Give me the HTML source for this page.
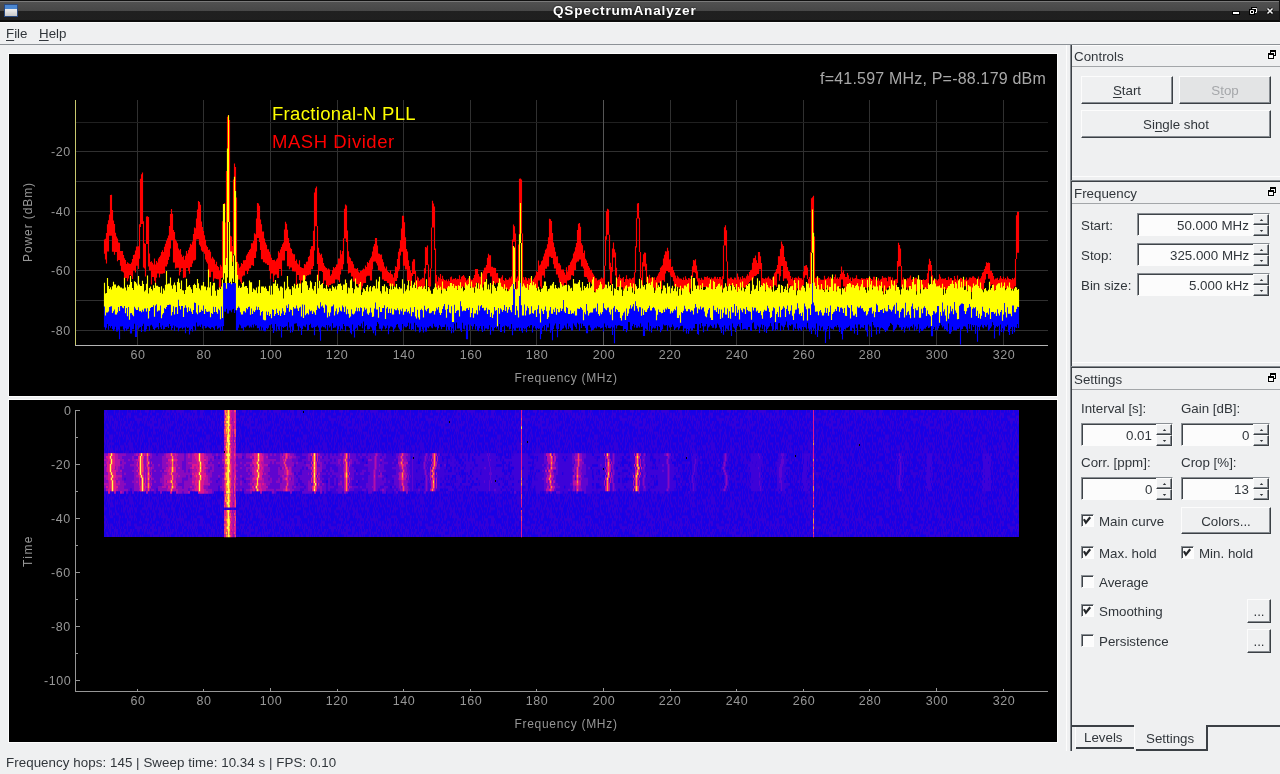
<!DOCTYPE html>
<html><head><meta charset="utf-8">
<style>
*{margin:0;padding:0;box-sizing:border-box}
html,body{width:1280px;height:774px;overflow:hidden;background:#eff0f1;font-family:"Liberation Sans",sans-serif;font-size:13.33px;color:#31363b}
.a{position:absolute}
.t{position:absolute;white-space:nowrap;line-height:1}
.ln{position:absolute}
.btn{position:absolute;background:#eff0f1;border-top:1px solid #fcfcfc;border-left:1px solid #fcfcfc;border-right:1px solid #3b4045;border-bottom:1px solid #3b4045;box-shadow:inset -1px -1px 0 #868b90;text-align:center;line-height:27px}
.u{text-decoration:underline;text-underline-offset:2px;text-decoration-thickness:1.3px}
.spin{position:absolute;background:#fcfcfc;border-top:1px solid #8a8f94;border-left:1px solid #8a8f94;border-right:1px solid #fcfcfc;border-bottom:1px solid #fcfcfc;box-shadow:inset 1px 1px 0 #3f4449}
.sv{position:absolute;right:20px;top:2px;text-align:right;line-height:1}
.arr{position:absolute;right:0;width:16px;background:#eff0f1;border-top:1px solid #fcfcfc;border-left:1px solid #fcfcfc;border-right:1px solid #3b4045;border-bottom:1px solid #3b4045;box-shadow:inset -1px -1px 0 #868b90}
.cb{position:absolute;width:13px;height:13px;background:#fcfcfc;border-top:1px solid #8a8f94;border-left:1px solid #8a8f94;border-right:1px solid #fdfdfd;border-bottom:1px solid #fdfdfd;box-shadow:inset 1px 1px 0 #3f4449}
.cb svg{left:0!important;top:0!important}
.ax{position:absolute;color:#969696;font-size:12px;line-height:1;white-space:nowrap}
.t,.ax,.btn,.sv{will-change:transform}
</style></head><body>
<!-- title bar -->
<div class="a" style="left:0;top:0;width:1280px;height:22px;background:linear-gradient(#101010 0,#101010 1px,#7a7a7a 1px,#7a7a7a 1.6px,#515151 2.2px,#474747 11px,#202020 11px,#1f1f1f 20.5px,#0c0c0c 20.5px,#0c0c0c 22px)"></div>
<div class="a" style="left:1279px;top:1px;width:1px;height:20px;background:#151515"></div>
<div class="a" style="left:4px;top:4px;width:14px;height:13px;border:1px solid #2a4a80;background:linear-gradient(#4a86d0 0,#4a86d0 4px,#f0f0f0 4px,#c8c8c8 100%)"></div>
<div class="t" style="left:552.5px;top:4.3px;color:#fff;font-weight:bold;font-size:13.6px;letter-spacing:0.8px;text-shadow:0 0 2px #000">QSpectrumAnalyzer</div>
<svg class="a" style="left:1230px;top:5px" width="48" height="12" viewBox="1230 5 48 12">
<rect x="1232" y="11" width="8" height="4" fill="#000"/><rect x="1233" y="12" width="6" height="2" fill="#fff"/>
<path d="M1251 7h6v6h-6z" fill="#000"/><path d="M1252.5 8.5h4v4h-4z" fill="none" stroke="#fff" stroke-width="1"/>
<path d="M1249 9h6v6h-6z" fill="#000"/><path d="M1250.5 10.5h3v3h-3z" fill="#000" stroke="#fff" stroke-width="1"/>
<path d="M1267.5 8.5L1272.5 13.5M1272.5 8.5L1267.5 13.5" stroke="#000" stroke-width="3"/>
<path d="M1267.5 8.5L1272.5 13.5M1272.5 8.5L1267.5 13.5" stroke="#fff" stroke-width="1.5"/>
<rect x="1269.5" y="10.5" width="1" height="1" fill="#bbb"/>
</svg>
<!-- menu -->
<div class="a" style="left:0;top:22px;width:1280px;height:1px;background:#fafafa"></div>
<div class="t" style="left:6px;top:27px"><span class="u">F</span>ile</div>
<div class="t" style="left:39px;top:27px"><span class="u">H</span>elp</div>
<div class="a" style="left:0;top:44px;width:1280px;height:1px;background:#8c9196"></div>
<!-- plot frames -->
<div class="a" style="left:8px;top:53px;width:1050px;height:344px;background:#000;border:1px solid #fcfcfc"></div>
<div class="a" style="left:8px;top:399px;width:1050px;height:344px;background:#000;border:1px solid #fcfcfc"></div>
<svg class="a" style="left:0;top:0" width="1280" height="774" viewBox="0 0 1280 774">
<path d="M76 151.5H1048M76 181.5H1048M76 211.5H1048M76 240.5H1048M76 270.5H1048M76 300.5H1048M76 330.5H1048M137.5 100V345M203.5 100V345M270.5 100V345M337.5 100V345M403.5 100V345M470.5 100V345M536.5 100V345M670.5 100V345M736.5 100V345M803.5 100V345M869.5 100V345M936.5 100V345M1003.5 100V345" stroke="#303030" stroke-width="1" fill="none"/>
<path d="M76 122.5H1048" stroke="#202020" stroke-width="1"/>
<path d="M603.5 100V345" stroke="#555555" stroke-width="1"/>
<path d="M104.5 239.6V253.7M105.5 238.7V259.6M106.5 233.0V263.4M107.5 224.2V251.4M108.5 220.3V251.4M109.5 214.5V235.7M110.5 194.9V235.7M111.5 194.7V235.7M112.5 209.9V251.8M113.5 220.4V251.8M114.5 223.9V254.8M115.5 232.7V251.9M116.5 236.5V251.9M117.5 238.4V261.2M118.5 242.5V260.1M119.5 242.8V260.1M120.5 251.1V265.8M121.5 251.0V271.2M122.5 251.0V271.5M123.5 254.9V272.4M124.5 258.3V283.3M125.5 260.0V278.0M126.5 263.9V278.0M127.5 262.3V281.3M128.5 263.3V278.6M129.5 263.7V275.3M130.5 264.1V275.3M131.5 262.5V276.1M132.5 259.0V278.9M133.5 255.0V270.6M134.5 254.5V270.6M135.5 250.5V272.5M136.5 246.4V265.8M137.5 246.4V265.8M138.5 246.3V268.9M139.5 224.3V258.8M140.5 178.8V227.1M141.5 174.2V224.0M142.5 172.4V224.0M143.5 221.2V267.5M144.5 243.3V268.4M145.5 243.9V276.6M146.5 216.4V243.9M147.5 216.3V243.9M148.5 216.9V266.5M149.5 253.5V270.5M150.5 262.0V270.5M151.5 261.2V284.5M152.5 262.7V276.9M153.5 264.6V276.9M154.5 258.6V280.7M155.5 264.4V283.9M156.5 260.9V277.8M157.5 262.5V273.4M158.5 258.6V273.4M159.5 256.9V277.6M160.5 255.4V273.7M161.5 252.0V273.7M162.5 250.3V273.7M163.5 252.0V273.3M164.5 246.8V273.3M165.5 243.8V266.6M166.5 240.7V266.6M167.5 238.3V264.3M168.5 235.5V260.0M169.5 226.0V256.7M170.5 214.1V248.6M171.5 209.0V239.9M172.5 213.8V239.9M173.5 230.0V262.4M174.5 232.0V262.4M175.5 239.4V268.5M176.5 241.3V267.8M177.5 243.2V267.8M178.5 248.6V267.8M179.5 250.2V275.6M180.5 249.1V271.9M181.5 254.4V268.3M182.5 257.0V268.3M183.5 255.8V278.0M184.5 259.7V277.6M185.5 255.7V277.6M186.5 251.1V267.9M187.5 253.4V267.9M188.5 250.0V271.1M189.5 247.4V273.7M190.5 243.8V267.1M191.5 244.7V267.1M192.5 241.6V263.4M193.5 233.9V260.4M194.5 227.5V260.4M195.5 228.2V259.8M196.5 218.6V239.4M197.5 209.5V239.2M198.5 201.0V239.2M199.5 202.1V244.7M200.5 204.8V246.4M201.5 221.4V250.4M202.5 227.0V251.7M203.5 231.1V251.7M204.5 235.2V253.7M205.5 239.8V259.6M206.5 245.6V261.7M207.5 247.0V263.6M208.5 250.1V271.3M209.5 249.4V277.2M210.5 251.8V277.2M211.5 258.4V271.8M212.5 256.7V271.8M213.5 258.4V281.4M214.5 259.7V278.6M215.5 264.2V278.6M216.5 261.8V278.9M217.5 266.0V279.3M218.5 267.1V279.3M219.5 270.4V287.7M220.5 264.8V287.4M221.5 266.6V277.9M222.5 221.3V277.5M223.5 204.7V222.4M224.5 203.0V222.4M225.5 222.4V265.9M226.5 171.1V259.2M227.5 116.8V171.1M228.5 115.1V171.1M229.5 119.9V244.5M230.5 235.8V253.0M231.5 236.6V272.3M232.5 246.0V261.8M233.5 179.6V253.9M234.5 163.4V197.6M235.5 167.1V197.6M236.5 197.6V264.7M237.5 261.8V277.4M238.5 263.8V279.5M239.5 267.8V279.5M240.5 266.4V281.8M241.5 263.1V283.8M242.5 264.0V276.6M243.5 260.2V275.4M244.5 260.3V275.4M245.5 259.9V270.8M246.5 255.4V270.8M247.5 253.7V274.0M248.5 251.9V271.1M249.5 250.1V268.4M250.5 248.8V268.2M251.5 243.3V265.3M252.5 243.3V265.3M253.5 241.1V266.0M254.5 233.2V258.0M255.5 234.2V258.0M256.5 218.6V251.6M257.5 203.0V238.0M258.5 203.5V238.0M259.5 205.8V242.1M260.5 219.6V249.9M261.5 224.3V259.3M262.5 231.5V259.3M263.5 231.5V262.2M264.5 238.5V262.2M265.5 242.4V263.6M266.5 244.7V263.6M267.5 249.3V264.9M268.5 249.2V264.9M269.5 251.8V271.0M270.5 254.4V278.7M271.5 257.7V273.4M272.5 260.1V273.4M273.5 260.1V282.1M274.5 259.7V275.5M275.5 261.3V274.6M276.5 259.6V274.6M277.5 258.2V278.1M278.5 251.3V278.1M279.5 252.7V269.0M280.5 249.4V269.0M281.5 247.0V275.7M282.5 244.3V260.4M283.5 242.6V260.4M284.5 229.4V260.4M285.5 221.7V251.1M286.5 223.8V251.1M287.5 229.8V266.2M288.5 237.9V266.2M289.5 242.9V269.2M290.5 247.7V267.6M291.5 249.1V267.6M292.5 253.2V271.3M293.5 254.3V271.3M294.5 254.3V271.5M295.5 260.9V271.5M296.5 259.6V287.1M297.5 263.4V275.0M298.5 264.4V275.0M299.5 260.3V280.0M300.5 267.0V288.8M301.5 267.4V280.4M302.5 267.9V280.4M303.5 268.2V281.7M304.5 263.9V279.6M305.5 264.4V279.6M306.5 261.8V276.1M307.5 261.6V275.3M308.5 257.0V275.3M309.5 255.7V274.4M310.5 249.3V274.4M311.5 246.3V269.2M312.5 246.1V269.2M313.5 230.7V266.1M314.5 192.4V250.6M315.5 188.3V226.2M316.5 186.5V226.2M317.5 225.9V264.0M318.5 247.8V280.7M319.5 252.7V271.0M320.5 254.7V271.0M321.5 253.7V271.0M322.5 257.7V272.0M323.5 262.9V283.9M324.5 265.7V280.4M325.5 267.3V280.4M326.5 267.9V285.5M327.5 269.5V285.5M328.5 268.5V286.9M329.5 269.4V285.1M330.5 275.7V285.1M331.5 274.3V283.7M332.5 270.3V283.7M333.5 266.9V283.2M334.5 268.3V283.2M335.5 267.0V279.4M336.5 264.5V279.4M337.5 264.3V279.4M338.5 258.5V280.3M339.5 258.5V282.3M340.5 250.2V274.5M341.5 254.3V269.6M342.5 251.0V269.6M343.5 238.3V264.2M344.5 208.8V238.5M345.5 204.4V238.5M346.5 205.5V241.9M347.5 230.5V263.6M348.5 251.3V273.5M349.5 256.7V272.8M350.5 258.3V272.8M351.5 261.1V276.4M352.5 261.5V276.4M353.5 264.2V281.6M354.5 268.2V281.6M355.5 268.4V281.6M356.5 269.1V283.9M357.5 268.0V283.9M358.5 271.5V286.2M359.5 272.8V287.7M360.5 271.1V287.7M361.5 271.1V289.5M362.5 269.8V286.3M363.5 268.5V283.3M364.5 269.2V283.1M365.5 265.6V283.1M366.5 267.0V276.4M367.5 261.9V275.8M368.5 263.0V275.8M369.5 260.3V275.8M370.5 258.3V280.5M371.5 256.4V280.5M372.5 251.5V269.5M373.5 246.5V261.8M374.5 244.0V261.6M375.5 238.0V261.6M376.5 238.0V263.2M377.5 245.4V265.6M378.5 253.6V270.2M379.5 253.7V270.2M380.5 254.8V271.6M381.5 254.5V271.6M382.5 259.2V279.6M383.5 262.3V279.6M384.5 266.5V281.1M385.5 268.4V281.1M386.5 266.4V281.1M387.5 270.7V283.0M388.5 272.1V283.0M389.5 273.0V285.9M390.5 270.6V285.9M391.5 274.0V286.3M392.5 274.5V285.8M393.5 277.6V285.8M394.5 272.9V286.5M395.5 266.2V281.1M396.5 267.0V281.1M397.5 259.1V277.9M398.5 251.8V271.2M399.5 248.4V269.6M400.5 240.2V255.6M401.5 228.5V251.8M402.5 215.7V251.8M403.5 215.7V265.7M404.5 222.3V265.7M405.5 237.3V269.4M406.5 249.1V269.4M407.5 251.5V280.9M408.5 260.3V280.9M409.5 266.0V281.0M410.5 270.6V289.8M411.5 273.0V284.9M412.5 261.6V276.0M413.5 259.3V274.0M414.5 259.3V274.0M415.5 270.9V284.9M416.5 280.5V293.2M417.5 276.6V289.9M418.5 277.7V289.9M419.5 280.7V288.8M420.5 279.6V288.8M421.5 279.2V288.8M422.5 277.8V288.8M423.5 278.3V290.0M424.5 268.3V287.7M425.5 247.1V273.5M426.5 247.6V264.9M427.5 245.4V264.9M428.5 264.5V286.3M429.5 277.2V291.9M430.5 268.6V286.5M431.5 227.4V268.6M432.5 200.8V227.4M433.5 203.6V227.4M434.5 206.5V249.9M435.5 248.4V285.5M436.5 274.9V288.5M437.5 281.5V288.5M438.5 276.8V289.2M439.5 278.1V288.7M440.5 273.9V288.7M441.5 279.1V290.0M442.5 275.8V292.5M443.5 278.8V289.3M444.5 280.0V289.3M445.5 280.5V290.3M446.5 279.4V288.4M447.5 281.2V288.0M448.5 279.2V288.0M449.5 281.0V288.0M450.5 277.2V288.7M451.5 276.6V289.6M452.5 279.4V291.7M453.5 278.7V291.3M454.5 278.9V291.3M455.5 277.9V291.3M456.5 279.5V296.5M457.5 278.8V289.4M458.5 278.9V288.5M459.5 275.3V288.5M460.5 279.3V288.8M461.5 276.7V287.5M462.5 275.9V286.6M463.5 274.9V286.6M464.5 276.6V288.1M465.5 278.0V288.1M466.5 280.6V288.9M467.5 279.5V289.2M468.5 278.3V289.2M469.5 279.7V288.6M470.5 278.5V286.6M471.5 279.7V286.6M472.5 279.7V289.7M473.5 278.0V289.5M474.5 274.9V287.8M475.5 269.1V285.4M476.5 269.1V282.7M477.5 268.9V282.7M478.5 274.0V285.2M479.5 276.6V290.2M480.5 276.7V288.3M481.5 272.5V288.3M482.5 273.4V289.0M483.5 270.8V284.5M484.5 267.8V284.5M485.5 267.4V279.6M486.5 265.1V279.6M487.5 257.7V273.6M488.5 253.7V273.0M489.5 255.3V273.0M490.5 255.3V276.5M491.5 266.7V276.5M492.5 266.7V291.0M493.5 267.7V282.9M494.5 267.7V282.9M495.5 268.1V284.5M496.5 273.3V282.8M497.5 273.0V282.8M498.5 277.8V289.7M499.5 278.6V287.0M500.5 278.5V287.0M501.5 277.3V291.3M502.5 275.3V289.6M503.5 280.1V289.6M504.5 280.7V290.3M505.5 277.9V289.1M506.5 279.5V289.1M507.5 279.9V289.1M508.5 279.5V292.0M509.5 277.4V289.7M510.5 278.5V289.7M511.5 276.5V289.5M512.5 239.4V289.5M513.5 224.6V241.7M514.5 226.2V241.7M515.5 233.5V281.9M516.5 278.5V292.7M517.5 276.4V292.7M518.5 244.5V286.8M519.5 178.7V244.5M520.5 178.5V233.4M521.5 179.4V233.4M522.5 233.4V287.7M523.5 277.2V287.9M524.5 279.7V293.3M525.5 277.1V288.0M526.5 278.2V288.0M527.5 280.4V289.1M528.5 278.0V289.8M529.5 278.8V289.5M530.5 277.7V289.5M531.5 280.7V287.9M532.5 280.7V287.9M533.5 279.2V287.9M534.5 277.6V288.9M535.5 275.5V288.2M536.5 271.2V288.2M537.5 272.0V288.2M538.5 260.4V280.4M539.5 265.4V280.4M540.5 264.6V286.4M541.5 261.2V288.1M542.5 260.2V275.5M543.5 256.6V275.5M544.5 253.6V277.7M545.5 249.8V268.7M546.5 248.4V268.7M547.5 244.2V266.5M548.5 237.3V266.5M549.5 218.7V256.8M550.5 219.2V256.8M551.5 220.9V258.1M552.5 232.9V258.1M553.5 242.4V264.2M554.5 247.2V268.4M555.5 251.8V268.4M556.5 256.6V274.4M557.5 256.3V274.4M558.5 263.3V277.8M559.5 263.3V282.6M560.5 265.3V282.6M561.5 269.6V285.7M562.5 269.6V285.8M563.5 269.5V288.5M564.5 272.6V283.0M565.5 274.8V283.0M566.5 267.2V285.3M567.5 271.5V280.6M568.5 265.6V280.6M569.5 265.1V280.0M570.5 262.2V279.6M571.5 260.6V275.2M572.5 258.5V275.2M573.5 253.5V276.0M574.5 251.5V270.1M575.5 247.2V270.1M576.5 243.0V262.4M577.5 230.1V261.5M578.5 223.7V261.5M579.5 223.1V259.5M580.5 226.7V259.5M581.5 243.3V266.5M582.5 245.2V266.5M583.5 253.0V268.6M584.5 250.4V276.7M585.5 258.7V277.0M586.5 260.6V277.0M587.5 262.9V278.7M588.5 266.0V281.9M589.5 267.8V281.9M590.5 269.9V282.2M591.5 269.7V283.8M592.5 272.7V287.1M593.5 274.4V287.1M594.5 276.3V290.8M595.5 278.3V291.9M596.5 278.3V289.9M597.5 280.6V289.9M598.5 279.7V287.5M599.5 279.6V287.5M600.5 278.7V291.1M601.5 277.6V294.5M602.5 278.5V294.5M603.5 277.8V288.2M604.5 265.8V287.4M605.5 236.3V265.8M606.5 211.3V239.7M607.5 208.7V234.8M608.5 209.5V234.8M609.5 234.8V269.6M610.5 262.7V283.2M611.5 267.1V284.9M612.5 248.6V271.8M613.5 242.4V257.5M614.5 249.2V257.5M615.5 252.6V275.5M616.5 267.7V290.7M617.5 278.7V287.0M618.5 277.0V287.0M619.5 274.6V292.8M620.5 278.1V289.1M621.5 278.7V287.3M622.5 278.2V287.3M623.5 277.1V290.3M624.5 282.0V290.3M625.5 279.0V291.4M626.5 275.2V289.0M627.5 279.1V288.2M628.5 279.5V288.2M629.5 278.3V288.2M630.5 278.4V288.3M631.5 279.4V287.9M632.5 277.9V287.9M633.5 277.6V289.4M634.5 272.3V290.7M635.5 246.2V272.4M636.5 218.2V247.5M637.5 203.6V218.5M638.5 203.1V218.5M639.5 217.7V251.9M640.5 251.9V278.1M641.5 277.8V286.1M642.5 262.3V286.1M643.5 254.2V266.6M644.5 252.6V266.6M645.5 252.8V270.6M646.5 263.8V282.3M647.5 277.6V289.2M648.5 278.5V289.2M649.5 274.7V289.4M650.5 278.2V288.1M651.5 277.4V287.3M652.5 280.8V287.3M653.5 277.8V287.8M654.5 277.3V287.8M655.5 280.0V292.4M656.5 277.6V287.2M657.5 275.7V286.9M658.5 273.5V282.7M659.5 271.9V282.7M660.5 267.8V282.7M661.5 266.5V289.0M662.5 265.3V280.2M663.5 258.5V280.2M664.5 254.8V281.8M665.5 251.3V273.6M666.5 251.4V271.1M667.5 247.8V271.1M668.5 250.8V272.2M669.5 259.4V272.2M670.5 258.9V275.4M671.5 267.0V277.0M672.5 266.6V277.2M673.5 270.1V281.2M674.5 272.4V286.3M675.5 275.6V286.3M676.5 278.2V286.8M677.5 275.7V286.8M678.5 277.3V287.4M679.5 278.5V287.4M680.5 278.5V289.6M681.5 278.8V290.5M682.5 280.0V290.1M683.5 277.5V289.6M684.5 280.0V289.6M685.5 276.3V288.8M686.5 278.7V288.8M687.5 280.0V288.6M688.5 278.0V288.6M689.5 278.2V292.2M690.5 279.0V288.4M691.5 275.1V285.6M692.5 266.3V277.0M693.5 260.0V272.2M694.5 260.6V272.2M695.5 259.2V273.2M696.5 265.5V278.5M697.5 271.2V281.5M698.5 278.3V287.2M699.5 278.2V289.5M700.5 280.1V288.2M701.5 277.8V287.9M702.5 279.4V287.9M703.5 279.7V287.0M704.5 276.7V287.0M705.5 277.0V287.0M706.5 277.3V287.3M707.5 276.3V287.3M708.5 278.0V288.2M709.5 277.4V289.7M710.5 279.6V292.4M711.5 277.4V289.6M712.5 278.7V289.6M713.5 278.4V289.6M714.5 276.7V288.4M715.5 276.7V288.4M716.5 278.7V290.1M717.5 277.0V288.1M718.5 278.9V288.1M719.5 277.0V288.1M720.5 277.0V290.5M721.5 279.3V291.1M722.5 276.2V289.5M723.5 245.5V279.0M724.5 227.2V245.5M725.5 225.2V245.5M726.5 230.2V261.5M727.5 261.5V286.3M728.5 278.3V290.1M729.5 278.7V286.7M730.5 277.4V285.3M731.5 277.5V285.3M732.5 279.0V285.5M733.5 279.5V286.5M734.5 277.4V286.5M735.5 277.8V287.4M736.5 279.7V291.9M737.5 273.6V291.5M738.5 276.7V290.6M739.5 279.6V290.6M740.5 277.3V288.6M741.5 279.3V287.5M742.5 275.9V287.5M743.5 278.3V287.4M744.5 277.8V287.4M745.5 278.4V287.4M746.5 276.2V287.4M747.5 274.2V284.8M748.5 275.8V283.7M749.5 272.0V282.0M750.5 270.3V280.6M751.5 269.7V280.6M752.5 262.7V285.5M753.5 258.2V278.6M754.5 258.1V276.0M755.5 255.6V276.0M756.5 260.3V275.2M757.5 262.9V273.9M758.5 252.1V273.9M759.5 251.9V269.3M760.5 256.2V269.3M761.5 263.1V291.3M762.5 277.9V288.9M763.5 278.6V288.9M764.5 278.9V290.0M765.5 277.7V290.0M766.5 278.5V290.4M767.5 277.8V287.3M768.5 276.5V287.3M769.5 278.5V290.1M770.5 278.7V289.8M771.5 280.1V289.8M772.5 277.4V287.0M773.5 278.1V286.6M774.5 273.3V285.2M775.5 271.8V285.2M776.5 269.1V286.8M777.5 265.0V273.8M778.5 256.3V273.8M779.5 256.3V280.7M780.5 248.7V276.3M781.5 241.6V266.1M782.5 244.2V266.1M783.5 245.9V280.9M784.5 257.0V278.6M785.5 260.9V278.6M786.5 261.5V278.6M787.5 267.1V280.4M788.5 271.0V288.0M789.5 271.8V285.5M790.5 275.9V285.5M791.5 279.0V289.6M792.5 277.4V289.6M793.5 280.5V291.8M794.5 278.0V291.8M795.5 277.6V290.4M796.5 277.8V290.4M797.5 278.4V288.3M798.5 276.4V288.3M799.5 278.0V292.5M800.5 278.3V292.5M801.5 278.3V292.5M802.5 279.7V293.8M803.5 271.4V285.0M804.5 266.1V277.8M805.5 265.6V275.3M806.5 264.9V275.3M807.5 267.6V279.0M808.5 279.0V288.1M809.5 276.9V289.4M810.5 252.0V288.3M811.5 198.2V252.0M812.5 197.3V236.4M813.5 195.8V236.4M814.5 236.4V285.1M815.5 278.3V287.5M816.5 277.4V287.5M817.5 277.7V291.9M818.5 277.8V293.6M819.5 277.9V291.9M820.5 279.4V291.1M821.5 279.8V291.1M822.5 279.7V288.9M823.5 279.8V288.9M824.5 275.8V290.7M825.5 278.7V289.1M826.5 279.1V287.7M827.5 278.1V287.7M828.5 276.5V290.1M829.5 278.4V288.5M830.5 276.9V288.5M831.5 279.5V295.7M832.5 278.9V295.7M833.5 279.3V295.9M834.5 277.0V290.4M835.5 274.5V290.4M836.5 278.8V290.4M837.5 277.6V295.8M838.5 279.1V287.0M839.5 277.3V287.0M840.5 274.1V287.8M841.5 266.5V279.6M842.5 272.5V279.6M843.5 270.4V286.5M844.5 274.0V286.5M845.5 277.1V292.8M846.5 277.1V287.0M847.5 273.1V287.0M848.5 275.2V289.8M849.5 279.0V295.2M850.5 277.6V291.9M851.5 281.1V291.2M852.5 277.4V288.0M853.5 278.8V288.0M854.5 278.5V290.0M855.5 278.1V288.3M856.5 275.2V288.3M857.5 278.8V287.9M858.5 278.9V287.9M859.5 279.2V294.7M860.5 279.4V286.7M861.5 278.0V286.7M862.5 278.5V291.4M863.5 278.8V287.2M864.5 278.8V287.2M865.5 279.3V287.4M866.5 277.9V287.8M867.5 278.3V287.8M868.5 278.1V286.9M869.5 278.1V286.9M870.5 278.1V288.6M871.5 278.9V287.9M872.5 279.7V287.9M873.5 276.7V287.9M874.5 276.8V290.0M875.5 279.4V288.9M876.5 279.5V288.9M877.5 280.5V292.5M878.5 278.3V292.5M879.5 280.8V292.8M880.5 279.5V287.2M881.5 278.7V287.2M882.5 275.9V287.7M883.5 277.7V293.2M884.5 277.7V290.7M885.5 277.4V290.7M886.5 278.0V289.4M887.5 281.3V287.8M888.5 276.6V287.6M889.5 277.1V287.6M890.5 276.8V289.1M891.5 279.8V289.8M892.5 277.6V289.8M893.5 280.6V293.4M894.5 279.7V290.8M895.5 279.3V290.2M896.5 278.9V288.3M897.5 260.9V283.0M898.5 242.7V266.8M899.5 245.0V266.3M900.5 248.6V266.3M901.5 266.1V287.1M902.5 279.7V289.6M903.5 277.5V289.6M904.5 279.5V290.9M905.5 279.0V287.6M906.5 280.4V287.6M907.5 278.2V293.4M908.5 278.6V287.4M909.5 277.6V287.4M910.5 275.5V287.4M911.5 279.7V289.5M912.5 279.0V289.5M913.5 280.0V292.2M914.5 278.4V287.9M915.5 277.7V287.9M916.5 277.8V291.3M917.5 279.8V288.4M918.5 277.4V288.4M919.5 279.5V290.0M920.5 279.4V289.3M921.5 280.2V289.3M922.5 280.1V287.8M923.5 279.2V287.8M924.5 280.1V294.8M925.5 280.1V288.9M926.5 279.1V288.9M927.5 273.2V288.5M928.5 264.4V283.9M929.5 258.7V270.9M930.5 261.0V270.9M931.5 265.1V282.1M932.5 275.3V287.1M933.5 280.0V289.8M934.5 279.0V289.4M935.5 279.3V289.4M936.5 279.6V288.9M937.5 280.6V288.9M938.5 278.9V288.7M939.5 274.2V288.7M940.5 276.7V288.7M941.5 278.7V288.8M942.5 278.6V291.6M943.5 278.7V289.0M944.5 278.7V289.0M945.5 278.0V289.0M946.5 280.1V291.2M947.5 280.0V291.2M948.5 276.7V290.0M949.5 279.6V287.4M950.5 277.9V287.4M951.5 277.9V292.5M952.5 280.5V288.7M953.5 280.3V288.7M954.5 276.1V291.6M955.5 278.8V289.0M956.5 280.3V288.8M957.5 275.4V288.8M958.5 280.3V288.8M959.5 279.2V291.4M960.5 277.7V289.0M961.5 278.1V287.7M962.5 279.2V287.7M963.5 279.8V287.9M964.5 279.8V286.3M965.5 279.4V286.3M966.5 277.5V291.1M967.5 280.3V290.3M968.5 279.5V290.3M969.5 277.4V288.1M970.5 277.6V288.1M971.5 278.0V292.0M972.5 276.4V288.1M973.5 276.3V288.1M974.5 277.5V288.7M975.5 277.9V290.6M976.5 279.4V290.6M977.5 279.8V296.8M978.5 276.6V290.2M979.5 279.3V290.1M980.5 278.3V290.0M981.5 276.2V290.0M982.5 272.7V289.7M983.5 271.8V289.4M984.5 269.1V283.1M985.5 266.3V279.5M986.5 262.2V273.9M987.5 263.1V273.9M988.5 262.5V278.7M989.5 263.1V278.7M990.5 270.7V286.3M991.5 270.7V284.6M992.5 272.9V284.6M993.5 276.1V289.3M994.5 279.4V290.9M995.5 278.4V289.2M996.5 278.4V287.1M997.5 277.7V287.1M998.5 280.1V291.0M999.5 278.6V289.9M1000.5 276.1V287.3M1001.5 278.2V287.3M1002.5 278.9V288.4M1003.5 276.7V287.9M1004.5 279.2V287.9M1005.5 277.9V287.9M1006.5 279.5V293.3M1007.5 276.6V287.2M1008.5 278.3V287.2M1009.5 279.1V287.2M1010.5 278.9V290.2M1011.5 279.7V289.1M1012.5 278.0V289.1M1013.5 279.2V288.5M1014.5 277.8V286.4M1015.5 259.1V286.4M1016.5 215.2V259.1M1017.5 211.7V252.8M1018.5 211.7V252.8" stroke="#ff0000" stroke-width="1.15" fill="none"/>
<path d="M104.5 304.4V327.3M105.5 313.4V329.7M106.5 310.5V327.7M107.5 310.5V324.0M108.5 309.4V329.7M109.5 304.9V325.9M110.5 304.5V327.8M111.5 304.2V325.9M112.5 309.6V329.1M113.5 309.2V331.1M114.5 307.4V329.6M115.5 312.4V326.8M116.5 309.7V331.6M117.5 310.1V331.6M118.5 304.9V329.7M119.5 308.9V339.3M120.5 304.0V326.4M121.5 304.1V326.5M122.5 305.5V326.3M123.5 306.2V329.6M124.5 304.0V331.3M125.5 311.3V328.3M126.5 306.1V330.8M127.5 314.2V329.3M128.5 305.1V328.8M129.5 312.8V326.8M130.5 311.2V333.4M131.5 311.0V333.4M132.5 311.0V329.2M133.5 314.3V329.3M134.5 304.8V323.8M135.5 306.5V337.1M136.5 307.2V337.1M137.5 308.1V325.2M138.5 305.3V329.6M139.5 309.2V327.7M140.5 309.0V327.0M141.5 309.3V332.1M142.5 307.7V326.1M143.5 309.5V323.8M144.5 306.4V331.4M145.5 306.5V331.4M146.5 309.5V329.2M147.5 306.3V326.0M148.5 311.9V326.3M149.5 308.9V330.7M150.5 306.0V325.6M151.5 305.0V324.7M152.5 305.0V326.4M153.5 303.3V328.9M154.5 314.7V330.0M155.5 303.6V328.3M156.5 302.3V327.4M157.5 309.5V326.9M158.5 308.6V329.2M159.5 307.1V323.0M160.5 303.4V327.2M161.5 314.2V329.1M162.5 312.6V325.5M163.5 311.1V329.5M164.5 306.1V329.1M165.5 306.8V326.9M166.5 305.1V326.9M167.5 303.0V326.6M168.5 303.0V327.9M169.5 302.6V323.9M170.5 302.8V325.9M171.5 313.5V330.0M172.5 309.9V328.0M173.5 304.2V325.6M174.5 312.0V330.8M175.5 305.2V326.2M176.5 305.1V327.4M177.5 312.0V327.4M178.5 297.8V331.2M179.5 303.9V328.5M180.5 307.4V328.1M181.5 304.0V327.5M182.5 304.0V329.3M183.5 311.1V327.7M184.5 305.7V327.6M185.5 303.2V333.3M186.5 305.7V326.8M187.5 310.2V327.9M188.5 305.3V327.6M189.5 308.9V334.4M190.5 306.4V330.7M191.5 309.7V329.1M192.5 310.6V331.4M193.5 308.1V326.0M194.5 300.4V326.5M195.5 300.9V330.6M196.5 308.0V322.5M197.5 312.2V326.6M198.5 303.2V326.6M199.5 309.3V325.6M200.5 309.9V327.0M201.5 307.7V324.5M202.5 309.0V328.5M203.5 303.5V326.3M204.5 309.9V325.9M205.5 307.0V328.3M206.5 307.4V327.8M207.5 307.6V326.6M208.5 309.5V327.2M209.5 309.4V328.0M210.5 315.3V329.1M211.5 309.5V327.2M212.5 311.7V326.9M213.5 304.8V328.3M214.5 310.0V330.0M215.5 305.1V326.3M216.5 309.1V325.7M217.5 308.2V329.3M218.5 306.5V328.3M219.5 308.3V327.6M220.5 315.3V330.9M221.5 304.6V326.5M222.5 312.2V330.7M223.5 283.0V326.1M224.5 283.0V311.4M225.5 283.0V311.8M226.5 283.5V308.7M227.5 283.0V313.6M228.5 283.0V313.6M229.5 283.0V310.6M230.5 283.0V310.6M231.5 283.0V312.2M232.5 283.0V309.4M233.5 283.0V308.8M234.5 283.0V312.9M235.5 283.0V310.3M236.5 290.2V330.2M237.5 305.9V330.2M238.5 304.5V327.7M239.5 305.8V324.4M240.5 307.7V325.5M241.5 312.4V328.2M242.5 312.4V328.2M243.5 309.2V330.8M244.5 309.2V327.0M245.5 308.8V327.4M246.5 305.9V326.4M247.5 307.3V325.5M248.5 304.9V325.6M249.5 304.5V327.8M250.5 312.8V326.5M251.5 306.6V327.4M252.5 310.8V324.8M253.5 308.7V327.6M254.5 309.9V324.3M255.5 308.3V325.8M256.5 304.5V325.3M257.5 307.7V328.2M258.5 305.0V328.0M259.5 307.9V330.4M260.5 313.1V326.5M261.5 308.8V330.6M262.5 308.9V327.5M263.5 309.2V330.8M264.5 313.3V331.2M265.5 310.3V331.3M266.5 309.5V328.0M267.5 311.0V329.2M268.5 309.7V327.8M269.5 307.3V325.2M270.5 308.0V325.2M271.5 312.4V324.3M272.5 307.3V328.1M273.5 307.9V333.0M274.5 313.8V330.6M275.5 311.9V324.1M276.5 306.7V331.2M277.5 311.0V326.5M278.5 311.2V329.4M279.5 308.8V330.6M280.5 312.7V326.3M281.5 311.6V337.4M282.5 306.2V326.9M283.5 309.2V328.0M284.5 310.4V327.1M285.5 310.6V326.8M286.5 303.4V326.1M287.5 305.9V329.9M288.5 302.3V322.3M289.5 306.5V327.6M290.5 307.4V332.7M291.5 308.0V326.4M292.5 313.6V332.2M293.5 305.0V330.3M294.5 306.6V323.7M295.5 306.6V323.4M296.5 303.6V323.2M297.5 306.4V326.2M298.5 308.9V330.8M299.5 305.7V326.5M300.5 304.7V328.0M301.5 310.2V334.9M302.5 302.5V329.1M303.5 311.0V325.7M304.5 302.8V326.4M305.5 310.2V327.2M306.5 311.0V324.5M307.5 309.8V330.7M308.5 312.4V330.1M309.5 307.5V325.0M310.5 309.3V323.7M311.5 308.6V327.4M312.5 312.0V328.1M313.5 309.3V327.2M314.5 308.1V335.2M315.5 312.6V326.9M316.5 307.9V326.5M317.5 303.5V325.4M318.5 305.7V327.5M319.5 306.8V331.4M320.5 300.3V340.8M321.5 304.4V327.4M322.5 303.5V326.2M323.5 305.7V327.3M324.5 310.1V327.2M325.5 302.4V328.6M326.5 303.4V324.9M327.5 311.9V331.0M328.5 310.5V325.2M329.5 313.0V327.5M330.5 309.6V326.2M331.5 304.4V330.5M332.5 304.2V323.2M333.5 302.6V328.0M334.5 313.6V327.5M335.5 309.2V327.5M336.5 306.4V325.8M337.5 308.0V333.6M338.5 310.2V329.4M339.5 305.6V326.3M340.5 308.7V330.8M341.5 309.6V328.5M342.5 303.5V329.4M343.5 305.2V324.0M344.5 310.1V326.0M345.5 304.5V331.2M346.5 310.2V326.3M347.5 307.2V326.2M348.5 310.8V326.4M349.5 312.3V327.9M350.5 312.6V332.8M351.5 307.2V334.2M352.5 311.7V324.6M353.5 312.0V331.2M354.5 307.1V337.6M355.5 309.2V328.7M356.5 305.5V327.7M357.5 309.3V329.9M358.5 305.9V325.0M359.5 309.3V326.2M360.5 305.2V326.2M361.5 305.9V323.6M362.5 312.4V328.2M363.5 309.4V321.5M364.5 305.4V332.9M365.5 307.8V326.2M366.5 306.6V325.0M367.5 311.4V329.4M368.5 312.7V329.4M369.5 309.9V329.1M370.5 305.8V326.6M371.5 310.5V327.5M372.5 309.2V330.2M373.5 309.2V333.3M374.5 306.5V330.6M375.5 300.4V335.5M376.5 307.6V325.9M377.5 306.6V322.1M378.5 315.8V323.8M379.5 304.9V328.7M380.5 310.1V328.7M381.5 310.1V331.1M382.5 306.1V328.6M383.5 306.1V325.5M384.5 303.3V326.6M385.5 313.6V329.3M386.5 306.5V327.9M387.5 305.1V325.5M388.5 307.2V334.3M389.5 306.7V328.3M390.5 310.9V326.5M391.5 306.5V326.5M392.5 311.4V327.2M393.5 312.6V331.7M394.5 307.0V328.8M395.5 308.3V327.6M396.5 308.2V324.8M397.5 306.2V324.1M398.5 306.8V327.5M399.5 306.8V329.2M400.5 307.4V331.4M401.5 305.5V330.2M402.5 306.6V324.1M403.5 312.7V328.1M404.5 307.4V326.3M405.5 309.4V327.2M406.5 307.1V327.2M407.5 310.3V326.1M408.5 309.0V322.8M409.5 311.4V328.9M410.5 305.5V323.4M411.5 307.1V329.9M412.5 310.1V329.0M413.5 308.3V329.8M414.5 305.1V322.8M415.5 311.4V331.5M416.5 311.4V324.9M417.5 307.8V327.3M418.5 311.7V327.6M419.5 310.2V332.5M420.5 307.9V331.4M421.5 306.8V326.7M422.5 308.2V329.6M423.5 311.5V332.4M424.5 303.8V327.4M425.5 307.8V331.4M426.5 309.2V331.4M427.5 307.0V327.2M428.5 305.9V328.2M429.5 311.2V326.5M430.5 310.9V326.0M431.5 306.7V327.6M432.5 309.0V328.2M433.5 303.7V323.8M434.5 310.3V326.5M435.5 309.3V327.3M436.5 305.7V326.8M437.5 307.5V329.9M438.5 305.1V328.2M439.5 310.8V324.9M440.5 312.6V326.6M441.5 311.0V329.3M442.5 307.1V327.0M443.5 304.3V326.9M444.5 302.0V327.1M445.5 307.8V324.5M446.5 306.9V330.6M447.5 307.1V326.7M448.5 302.7V329.7M449.5 310.5V330.2M450.5 311.2V327.1M451.5 304.2V333.2M452.5 308.1V328.5M453.5 307.8V332.4M454.5 302.8V323.5M455.5 310.9V329.9M456.5 308.9V322.4M457.5 308.2V328.5M458.5 308.2V328.4M459.5 314.6V328.3M460.5 299.3V330.6M461.5 304.2V331.9M462.5 309.3V322.7M463.5 307.8V328.8M464.5 308.5V329.4M465.5 308.9V325.4M466.5 306.5V339.2M467.5 306.0V339.2M468.5 307.9V324.6M469.5 305.4V329.9M470.5 312.4V324.6M471.5 307.2V325.9M472.5 305.9V329.6M473.5 313.7V326.6M474.5 311.6V324.0M475.5 311.5V329.5M476.5 308.3V326.2M477.5 312.5V330.4M478.5 303.5V331.3M479.5 308.6V328.3M480.5 304.3V326.1M481.5 303.1V329.6M482.5 306.1V331.9M483.5 305.7V326.1M484.5 308.6V330.8M485.5 308.2V328.6M486.5 305.8V328.4M487.5 311.9V329.5M488.5 307.5V329.2M489.5 306.4V325.3M490.5 309.3V334.7M491.5 309.1V327.3M492.5 310.1V330.6M493.5 310.1V331.2M494.5 304.9V328.0M495.5 308.7V326.9M496.5 308.0V328.6M497.5 314.0V326.8M498.5 306.1V329.8M499.5 307.2V323.9M500.5 306.2V332.1M501.5 307.4V331.9M502.5 309.7V327.1M503.5 308.1V326.3M504.5 303.0V332.8M505.5 309.0V325.5M506.5 305.0V325.9M507.5 309.8V327.2M508.5 307.6V326.6M509.5 305.1V329.4M510.5 308.3V328.8M511.5 310.3V324.1M512.5 302.9V335.2M513.5 283.0V328.6M514.5 287.0V330.6M515.5 309.3V330.8M516.5 303.9V327.8M517.5 308.4V328.2M518.5 308.6V327.6M519.5 294.0V331.1M520.5 283.0V327.7M521.5 303.2V330.9M522.5 309.1V332.7M523.5 313.5V328.1M524.5 302.5V329.5M525.5 313.6V328.6M526.5 308.4V332.2M527.5 304.2V327.0M528.5 306.1V325.9M529.5 303.3V327.8M530.5 311.8V325.3M531.5 304.3V325.1M532.5 310.9V332.6M533.5 311.7V327.6M534.5 308.6V326.0M535.5 307.9V328.5M536.5 310.6V330.2M537.5 307.2V328.1M538.5 303.2V329.0M539.5 311.6V328.4M540.5 315.6V339.3M541.5 306.8V333.9M542.5 309.3V327.8M543.5 310.6V326.0M544.5 307.9V330.1M545.5 304.5V325.0M546.5 309.3V331.2M547.5 306.1V327.4M548.5 313.7V327.4M549.5 308.4V323.6M550.5 305.0V332.7M551.5 311.8V330.1M552.5 311.8V340.2M553.5 307.4V328.9M554.5 310.0V325.5M555.5 305.8V323.5M556.5 311.7V328.8M557.5 306.9V337.3M558.5 310.3V329.1M559.5 310.3V323.9M560.5 306.3V331.1M561.5 309.0V330.0M562.5 306.7V328.8M563.5 297.9V328.2M564.5 309.4V325.6M565.5 311.0V327.4M566.5 305.0V329.6M567.5 305.9V323.6M568.5 312.1V329.0M569.5 312.1V326.4M570.5 308.4V328.0M571.5 312.1V330.6M572.5 301.7V330.6M573.5 311.4V323.6M574.5 308.4V325.4M575.5 313.6V327.1M576.5 313.6V328.8M577.5 306.5V322.7M578.5 304.3V324.2M579.5 307.0V330.8M580.5 304.9V323.5M581.5 306.1V328.1M582.5 307.7V323.7M583.5 310.7V325.9M584.5 310.2V325.9M585.5 312.2V327.9M586.5 302.1V333.3M587.5 308.7V333.3M588.5 310.3V325.4M589.5 311.2V325.3M590.5 310.5V327.5M591.5 310.5V331.3M592.5 310.5V330.0M593.5 306.6V329.7M594.5 306.6V328.2M595.5 305.8V327.5M596.5 308.1V328.6M597.5 301.4V326.3M598.5 306.7V327.2M599.5 309.4V327.0M600.5 307.1V328.4M601.5 312.2V328.0M602.5 310.1V327.5M603.5 301.2V331.6M604.5 305.9V323.5M605.5 307.3V327.1M606.5 308.3V328.5M607.5 305.7V325.4M608.5 305.6V328.1M609.5 310.3V328.2M610.5 312.6V328.3M611.5 307.4V326.8M612.5 310.2V335.0M613.5 305.8V327.5M614.5 303.9V343.2M615.5 309.8V325.3M616.5 306.9V328.5M617.5 308.0V325.7M618.5 310.0V325.3M619.5 310.0V325.3M620.5 311.8V325.7M621.5 313.8V326.0M622.5 306.0V326.0M623.5 310.8V331.1M624.5 309.5V329.1M625.5 311.9V329.1M626.5 306.6V332.3M627.5 313.0V330.0M628.5 310.2V322.0M629.5 306.7V322.3M630.5 303.3V329.6M631.5 306.6V330.0M632.5 304.5V326.0M633.5 302.1V323.9M634.5 307.7V327.6M635.5 299.2V325.0M636.5 304.1V327.7M637.5 306.6V327.7M638.5 309.4V326.3M639.5 305.2V327.4M640.5 305.2V323.4M641.5 313.6V326.9M642.5 306.4V326.6M643.5 311.9V335.9M644.5 308.3V335.9M645.5 310.0V328.5M646.5 310.1V329.5M647.5 307.6V330.1M648.5 305.9V322.5M649.5 303.7V331.2M650.5 308.5V326.0M651.5 308.5V332.4M652.5 305.9V328.6M653.5 305.0V327.6M654.5 306.3V328.6M655.5 308.5V328.2M656.5 313.7V325.9M657.5 306.9V330.2M658.5 307.5V326.1M659.5 309.5V327.1M660.5 310.1V332.2M661.5 309.7V330.5M662.5 311.1V329.2M663.5 304.7V324.5M664.5 308.8V325.6M665.5 306.5V325.4M666.5 307.4V325.0M667.5 305.4V330.9M668.5 307.0V325.6M669.5 307.0V327.4M670.5 311.4V327.4M671.5 309.3V327.1M672.5 310.7V324.5M673.5 308.8V326.6M674.5 306.9V330.0M675.5 308.2V328.5M676.5 304.4V327.6M677.5 313.6V327.1M678.5 310.3V329.8M679.5 313.0V328.3M680.5 307.6V326.3M681.5 307.1V325.8M682.5 310.9V325.8M683.5 308.7V331.5M684.5 303.7V328.6M685.5 306.8V328.6M686.5 309.3V333.4M687.5 309.3V329.1M688.5 307.0V333.8M689.5 307.2V330.6M690.5 309.8V328.5M691.5 308.3V330.8M692.5 308.8V330.2M693.5 311.5V327.9M694.5 306.3V328.5M695.5 301.9V324.1M696.5 305.2V324.0M697.5 311.2V333.9M698.5 306.5V334.7M699.5 307.6V324.2M700.5 304.4V328.1M701.5 307.4V323.1M702.5 305.8V326.2M703.5 305.3V332.2M704.5 309.6V326.5M705.5 310.5V326.3M706.5 310.2V324.0M707.5 311.5V330.9M708.5 307.8V327.5M709.5 305.9V326.4M710.5 309.9V324.7M711.5 310.7V326.1M712.5 308.8V327.8M713.5 303.7V327.8M714.5 308.3V324.4M715.5 308.3V328.5M716.5 310.0V327.8M717.5 305.8V323.6M718.5 311.8V324.7M719.5 307.3V327.6M720.5 310.2V329.5M721.5 307.6V333.1M722.5 310.1V327.1M723.5 310.8V334.7M724.5 305.5V325.4M725.5 310.1V331.6M726.5 312.1V328.5M727.5 306.4V329.4M728.5 314.2V330.6M729.5 309.3V325.5M730.5 314.8V329.9M731.5 304.9V336.0M732.5 310.6V323.6M733.5 308.5V327.2M734.5 301.9V328.4M735.5 312.9V332.1M736.5 304.1V327.9M737.5 310.7V325.9M738.5 307.7V324.2M739.5 310.9V326.7M740.5 306.2V330.1M741.5 301.5V323.0M742.5 310.2V329.7M743.5 306.6V328.9M744.5 307.2V328.7M745.5 311.9V328.7M746.5 304.9V329.7M747.5 308.0V329.7M748.5 309.3V327.0M749.5 307.8V327.0M750.5 309.7V330.8M751.5 308.2V330.9M752.5 305.3V323.2M753.5 308.5V322.3M754.5 305.8V328.6M755.5 305.8V329.7M756.5 309.6V329.0M757.5 308.4V325.4M758.5 311.1V326.8M759.5 310.7V332.9M760.5 309.0V327.4M761.5 311.8V324.6M762.5 314.8V328.7M763.5 309.7V324.9M764.5 307.7V331.7M765.5 308.7V326.6M766.5 308.7V333.0M767.5 303.7V328.9M768.5 306.2V327.4M769.5 310.1V326.3M770.5 309.3V323.2M771.5 311.7V326.2M772.5 308.7V331.1M773.5 305.2V329.5M774.5 306.3V322.5M775.5 310.0V330.4M776.5 311.9V329.1M777.5 309.9V329.7M778.5 313.6V323.2M779.5 304.4V323.1M780.5 314.2V331.0M781.5 308.0V325.5M782.5 306.8V326.5M783.5 304.3V329.9M784.5 305.8V327.0M785.5 305.5V324.7M786.5 307.0V321.5M787.5 303.4V327.5M788.5 309.0V330.3M789.5 312.2V325.1M790.5 307.6V326.0M791.5 303.2V324.5M792.5 312.1V324.5M793.5 315.7V330.8M794.5 311.5V327.6M795.5 307.7V329.1M796.5 307.6V323.5M797.5 301.3V328.8M798.5 306.3V330.8M799.5 309.8V328.0M800.5 310.9V329.5M801.5 311.0V330.7M802.5 310.5V326.9M803.5 311.3V329.3M804.5 301.4V326.9M805.5 304.6V327.5M806.5 305.5V329.6M807.5 307.5V322.8M808.5 306.4V328.5M809.5 306.4V331.6M810.5 312.9V329.6M811.5 302.3V334.1M812.5 283.0V327.4M813.5 300.5V329.9M814.5 303.5V328.5M815.5 309.8V334.5M816.5 309.5V323.6M817.5 309.5V336.9M818.5 311.1V330.1M819.5 309.2V325.8M820.5 306.9V330.8M821.5 310.5V327.5M822.5 311.0V326.6M823.5 313.6V331.2M824.5 310.7V329.8M825.5 305.8V343.1M826.5 311.0V331.6M827.5 306.2V329.0M828.5 308.1V326.1M829.5 308.9V339.3M830.5 303.5V327.5M831.5 317.9V328.8M832.5 312.0V328.7M833.5 306.3V329.8M834.5 309.6V327.0M835.5 307.1V326.3M836.5 303.2V327.4M837.5 304.5V324.9M838.5 305.0V327.3M839.5 309.7V331.9M840.5 305.7V327.5M841.5 305.4V334.0M842.5 306.7V339.6M843.5 311.0V331.0M844.5 305.9V329.0M845.5 313.8V329.7M846.5 309.3V327.8M847.5 303.2V327.8M848.5 305.2V326.9M849.5 306.1V325.8M850.5 315.1V331.0M851.5 303.1V331.0M852.5 309.6V327.8M853.5 312.6V328.4M854.5 310.0V333.4M855.5 311.7V324.6M856.5 311.9V327.9M857.5 304.5V335.1M858.5 305.7V324.4M859.5 305.6V324.6M860.5 303.7V328.7M861.5 306.6V327.2M862.5 306.1V327.4M863.5 304.1V328.0M864.5 310.0V325.0M865.5 309.0V330.0M866.5 313.5V331.5M867.5 306.9V336.4M868.5 309.3V324.6M869.5 306.0V326.3M870.5 305.7V326.5M871.5 305.3V337.0M872.5 301.6V321.9M873.5 309.2V325.3M874.5 309.2V327.4M875.5 310.1V327.4M876.5 301.7V334.5M877.5 303.2V327.0M878.5 310.1V327.2M879.5 309.9V333.5M880.5 307.9V328.5M881.5 308.0V327.4M882.5 307.1V327.9M883.5 309.9V329.0M884.5 306.3V329.9M885.5 301.1V332.1M886.5 309.4V330.6M887.5 309.2V330.6M888.5 303.1V327.6M889.5 306.9V326.1M890.5 307.8V323.0M891.5 309.4V323.7M892.5 307.7V325.0M893.5 304.5V331.4M894.5 302.7V330.2M895.5 311.8V328.7M896.5 300.8V327.5M897.5 308.7V324.5M898.5 308.7V325.0M899.5 315.7V327.4M900.5 310.0V327.3M901.5 304.2V329.9M902.5 305.9V329.2M903.5 306.5V327.0M904.5 313.7V332.6M905.5 300.8V328.2M906.5 313.2V326.6M907.5 310.3V328.5M908.5 309.1V327.4M909.5 306.2V330.5M910.5 309.8V326.8M911.5 304.4V325.9M912.5 301.6V327.7M913.5 307.1V324.6M914.5 315.8V330.7M915.5 306.3V326.6M916.5 308.2V329.7M917.5 308.3V328.8M918.5 304.7V324.2M919.5 308.5V332.8M920.5 314.0V328.7M921.5 306.8V331.0M922.5 311.3V331.0M923.5 305.8V329.4M924.5 304.3V328.5M925.5 306.0V328.8M926.5 310.1V327.0M927.5 308.5V325.7M928.5 312.1V328.1M929.5 310.1V327.6M930.5 309.2V326.6M931.5 310.7V336.2M932.5 310.6V336.2M933.5 309.1V328.9M934.5 309.6V326.9M935.5 311.6V330.2M936.5 310.3V326.4M937.5 303.9V330.2M938.5 304.0V328.2M939.5 312.4V325.8M940.5 309.9V323.2M941.5 311.8V325.3M942.5 300.5V327.5M943.5 309.4V326.3M944.5 307.3V329.8M945.5 307.8V328.9M946.5 314.7V330.5M947.5 303.4V331.4M948.5 309.8V323.4M949.5 309.8V333.8M950.5 304.3V333.8M951.5 309.2V331.8M952.5 306.8V326.8M953.5 311.0V330.3M954.5 299.9V330.3M955.5 307.9V330.6M956.5 310.8V330.6M957.5 311.6V328.7M958.5 310.5V329.0M959.5 303.7V327.6M960.5 302.6V344.5M961.5 301.4V329.4M962.5 301.4V329.0M963.5 302.1V326.5M964.5 308.9V326.3M965.5 312.1V326.8M966.5 309.3V328.8M967.5 306.0V332.8M968.5 305.4V324.0M969.5 302.1V328.7M970.5 304.7V324.3M971.5 314.3V330.4M972.5 306.8V325.1M973.5 305.3V327.1M974.5 306.2V325.0M975.5 304.9V333.8M976.5 306.8V325.5M977.5 308.8V341.8M978.5 313.0V327.0M979.5 311.8V329.9M980.5 314.9V326.4M981.5 311.3V324.7M982.5 304.8V327.3M983.5 309.1V328.2M984.5 310.0V325.1M985.5 310.3V326.5M986.5 310.1V326.8M987.5 310.0V324.7M988.5 312.0V330.7M989.5 306.3V329.6M990.5 313.1V328.1M991.5 310.1V326.5M992.5 309.9V322.2M993.5 310.1V325.0M994.5 306.1V338.6M995.5 310.4V327.7M996.5 313.9V326.1M997.5 307.2V327.0M998.5 308.5V325.8M999.5 313.4V335.6M1000.5 310.1V324.6M1001.5 307.9V332.1M1002.5 312.9V328.2M1003.5 312.0V332.4M1004.5 300.9V330.6M1005.5 308.7V326.2M1006.5 310.3V326.7M1007.5 305.3V324.7M1008.5 310.6V332.1M1009.5 311.7V334.9M1010.5 311.7V328.8M1011.5 309.0V326.9M1012.5 303.5V334.1M1013.5 303.6V326.7M1014.5 310.3V332.2M1015.5 310.2V327.2M1016.5 306.9V328.1M1017.5 304.7V324.0M1018.5 305.1V327.9" stroke="#0000ff" stroke-width="1.15" fill="none"/>
<path d="M104.5 282.8V306.4M105.5 293.6V315.4M106.5 293.1V312.5M107.5 277.9V312.5M108.5 286.1V311.4M109.5 288.9V306.9M110.5 287.3V306.5M111.5 289.4V306.2M112.5 286.3V313.0M113.5 281.8V311.2M114.5 284.6V309.4M115.5 284.6V314.4M116.5 287.8V314.4M117.5 286.2V312.6M118.5 285.3V306.9M119.5 286.2V310.9M120.5 287.5V306.0M121.5 287.4V306.1M122.5 288.6V307.5M123.5 288.6V308.2M124.5 277.8V306.0M125.5 287.5V313.3M126.5 290.4V308.1M127.5 284.7V316.2M128.5 287.0V307.1M129.5 284.8V319.8M130.5 276.1V313.2M131.5 281.9V313.0M132.5 287.9V314.8M133.5 289.9V316.3M134.5 281.3V306.8M135.5 282.0V308.5M136.5 283.6V310.1M137.5 285.6V310.1M138.5 276.0V307.3M139.5 284.6V311.2M140.5 286.1V311.0M141.5 286.1V312.2M142.5 280.7V309.7M143.5 283.9V311.5M144.5 291.5V308.4M145.5 290.3V308.5M146.5 283.8V311.5M147.5 275.5V308.3M148.5 293.4V318.4M149.5 288.1V310.9M150.5 286.5V308.0M151.5 289.0V307.0M152.5 290.5V307.0M153.5 285.2V305.3M154.5 287.9V316.7M155.5 282.7V305.6M156.5 285.7V304.3M157.5 285.7V311.5M158.5 286.7V310.6M159.5 287.1V310.5M160.5 292.8V305.4M161.5 286.3V318.3M162.5 293.7V314.6M163.5 288.5V313.1M164.5 290.6V308.1M165.5 284.7V308.9M166.5 270.9V307.1M167.5 284.3V305.0M168.5 283.6V305.0M169.5 283.6V304.6M170.5 277.5V304.8M171.5 285.6V315.5M172.5 288.7V311.9M173.5 284.8V306.2M174.5 282.6V314.6M175.5 285.3V307.2M176.5 292.0V307.1M177.5 282.1V314.0M178.5 278.5V299.8M179.5 282.8V305.9M180.5 289.0V309.4M181.5 280.5V306.0M182.5 290.3V306.0M183.5 290.4V316.9M184.5 294.0V307.7M185.5 290.0V305.2M186.5 278.7V307.7M187.5 286.9V312.2M188.5 286.3V307.3M189.5 284.9V310.9M190.5 287.2V308.4M191.5 289.2V311.7M192.5 293.0V314.1M193.5 285.0V310.1M194.5 283.8V302.4M195.5 285.1V302.9M196.5 288.0V312.5M197.5 279.1V314.2M198.5 283.3V305.2M199.5 288.6V312.6M200.5 290.2V311.9M201.5 285.4V309.7M202.5 285.4V311.0M203.5 282.1V305.5M204.5 286.5V314.1M205.5 286.5V309.0M206.5 290.2V311.5M207.5 287.2V311.9M208.5 269.5V311.5M209.5 287.6V311.4M210.5 281.9V317.3M211.5 295.8V313.1M212.5 285.4V314.1M213.5 282.8V306.8M214.5 282.8V312.0M215.5 290.8V307.1M216.5 295.7V311.9M217.5 289.4V313.7M218.5 290.1V308.8M219.5 287.6V310.3M220.5 288.9V319.3M221.5 286.5V306.6M222.5 279.5V318.1M223.5 204.1V279.5M224.5 204.1V273.2M225.5 265.1V283.1M226.5 257.9V288.7M227.5 148.4V277.6M228.5 115.2V221.9M229.5 221.9V282.9M230.5 251.6V281.8M231.5 251.6V284.2M232.5 266.0V278.6M233.5 255.6V282.0M234.5 176.8V255.6M235.5 191.0V283.2M236.5 262.1V310.2M237.5 275.1V307.9M238.5 287.8V306.5M239.5 285.8V307.8M240.5 287.9V312.2M241.5 287.2V314.4M242.5 282.9V314.4M243.5 281.8V311.2M244.5 286.8V311.2M245.5 285.9V312.6M246.5 285.9V307.9M247.5 288.0V309.3M248.5 293.8V306.9M249.5 280.5V306.5M250.5 282.2V314.8M251.5 282.2V308.6M252.5 292.0V314.0M253.5 288.6V310.7M254.5 289.4V311.9M255.5 290.2V310.3M256.5 287.4V306.5M257.5 293.3V309.7M258.5 286.4V307.0M259.5 280.1V309.9M260.5 292.9V315.5M261.5 286.6V312.1M262.5 286.6V310.9M263.5 286.4V319.7M264.5 288.0V320.3M265.5 286.4V320.3M266.5 288.8V311.5M267.5 290.9V315.0M268.5 291.2V311.7M269.5 285.7V316.1M270.5 294.7V314.0M271.5 285.8V318.2M272.5 294.4V309.3M273.5 283.5V309.9M274.5 283.6V316.0M275.5 279.9V313.9M276.5 286.1V308.7M277.5 283.7V313.0M278.5 288.3V314.9M279.5 290.7V310.8M280.5 286.5V316.1M281.5 286.5V313.6M282.5 287.8V308.2M283.5 298.5V311.2M284.5 281.7V314.9M285.5 290.3V312.6M286.5 288.4V305.4M287.5 275.9V307.9M288.5 286.7V304.3M289.5 289.3V311.8M290.5 289.3V309.4M291.5 295.0V310.0M292.5 286.0V315.6M293.5 287.6V307.0M294.5 283.7V308.6M295.5 288.6V308.6M296.5 285.1V305.6M297.5 283.7V308.4M298.5 287.7V310.9M299.5 283.4V307.7M300.5 283.5V306.7M301.5 293.1V316.5M302.5 282.6V304.5M303.5 275.3V317.9M304.5 275.3V304.8M305.5 280.9V315.2M306.5 281.5V313.8M307.5 285.2V312.9M308.5 290.0V314.4M309.5 287.7V309.5M310.5 280.7V311.3M311.5 282.3V310.6M312.5 288.7V314.0M313.5 290.4V311.3M314.5 286.0V312.4M315.5 282.1V314.7M316.5 293.7V309.9M317.5 274.7V305.5M318.5 288.3V307.7M319.5 280.8V308.8M320.5 284.9V302.3M321.5 284.1V306.4M322.5 282.9V305.5M323.5 288.5V307.7M324.5 287.9V312.7M325.5 288.7V304.4M326.5 285.0V305.4M327.5 288.7V317.4M328.5 291.1V312.5M329.5 288.4V316.3M330.5 288.4V312.6M331.5 291.0V306.4M332.5 285.6V306.2M333.5 287.1V304.6M334.5 288.6V315.6M335.5 286.4V311.2M336.5 289.6V308.4M337.5 285.8V314.2M338.5 283.9V312.2M339.5 283.9V307.6M340.5 283.6V310.7M341.5 285.8V311.6M342.5 290.1V305.5M343.5 284.4V307.2M344.5 284.6V312.1M345.5 279.6V306.5M346.5 283.0V314.2M347.5 293.6V309.2M348.5 287.5V313.8M349.5 288.2V317.7M350.5 280.3V316.6M351.5 278.7V309.2M352.5 287.9V313.7M353.5 293.3V314.6M354.5 289.2V313.5M355.5 278.4V311.2M356.5 286.2V307.5M357.5 287.6V311.3M358.5 287.6V307.9M359.5 284.1V311.3M360.5 282.1V307.2M361.5 294.9V307.9M362.5 292.3V316.1M363.5 288.2V311.4M364.5 289.3V307.4M365.5 291.1V309.8M366.5 286.9V308.6M367.5 284.9V313.4M368.5 291.4V314.8M369.5 287.3V312.7M370.5 286.0V307.8M371.5 291.2V312.5M372.5 287.3V317.0M373.5 285.7V316.4M374.5 286.0V308.5M375.5 288.5V302.4M376.5 279.6V309.6M377.5 288.4V309.6M378.5 281.4V317.8M379.5 276.8V306.9M380.5 291.2V312.1M381.5 293.5V312.1M382.5 286.1V308.1M383.5 286.2V308.1M384.5 284.3V305.3M385.5 291.5V318.9M386.5 286.5V308.5M387.5 287.9V307.1M388.5 294.1V313.0M389.5 289.0V308.7M390.5 283.6V312.9M391.5 289.5V308.5M392.5 283.7V314.6M393.5 289.0V314.6M394.5 286.4V309.0M395.5 287.6V310.3M396.5 284.1V310.2M397.5 288.6V308.2M398.5 289.3V310.2M399.5 286.9V314.2M400.5 288.5V309.4M401.5 288.5V311.3M402.5 279.2V308.6M403.5 293.5V314.7M404.5 283.8V311.7M405.5 291.3V311.4M406.5 289.4V309.1M407.5 285.3V312.3M408.5 280.2V311.0M409.5 290.6V313.4M410.5 285.9V307.5M411.5 280.8V316.2M412.5 287.7V312.1M413.5 284.7V312.2M414.5 282.6V307.1M415.5 288.1V316.6M416.5 280.6V318.4M417.5 289.3V309.8M418.5 286.9V317.5M419.5 286.2V319.4M420.5 287.0V309.9M421.5 286.1V308.8M422.5 289.1V310.2M423.5 287.4V317.5M424.5 286.1V305.8M425.5 289.1V309.8M426.5 279.3V311.2M427.5 291.3V309.0M428.5 287.1V307.9M429.5 288.6V313.2M430.5 290.4V313.2M431.5 293.7V312.5M432.5 293.7V311.0M433.5 289.1V311.0M434.5 287.4V314.5M435.5 283.6V311.3M436.5 287.2V307.7M437.5 289.5V309.5M438.5 285.6V307.1M439.5 288.1V312.8M440.5 286.8V315.0M441.5 293.5V313.0M442.5 281.6V309.1M443.5 288.5V306.3M444.5 288.5V304.0M445.5 289.2V309.8M446.5 290.9V317.7M447.5 287.5V309.1M448.5 285.9V304.7M449.5 286.4V312.5M450.5 283.0V313.2M451.5 283.0V306.2M452.5 286.1V322.0M453.5 284.0V322.0M454.5 288.0V304.8M455.5 285.8V312.9M456.5 285.9V310.9M457.5 290.0V310.2M458.5 285.3V310.2M459.5 286.0V316.6M460.5 282.3V301.3M461.5 288.3V306.2M462.5 286.6V311.3M463.5 291.2V310.5M464.5 289.9V310.5M465.5 282.5V310.9M466.5 284.5V308.5M467.5 285.4V308.0M468.5 284.1V309.9M469.5 276.0V307.4M470.5 287.9V317.3M471.5 281.6V312.9M472.5 287.5V307.9M473.5 287.5V317.8M474.5 292.8V313.6M475.5 286.4V313.5M476.5 282.7V310.3M477.5 288.6V314.6M478.5 283.2V305.5M479.5 289.0V310.6M480.5 284.6V306.3M481.5 272.3V305.1M482.5 287.5V308.1M483.5 290.4V307.7M484.5 282.0V310.6M485.5 281.8V310.2M486.5 279.0V307.8M487.5 289.2V313.9M488.5 284.4V309.5M489.5 289.5V310.0M490.5 282.9V316.9M491.5 293.4V312.8M492.5 284.7V318.0M493.5 281.0V314.6M494.5 286.3V306.9M495.5 288.0V310.7M496.5 290.9V310.0M497.5 286.5V326.2M498.5 283.0V308.1M499.5 278.5V313.8M500.5 282.7V308.2M501.5 286.5V309.4M502.5 287.1V311.7M503.5 288.7V310.1M504.5 284.3V305.0M505.5 290.6V311.0M506.5 287.5V307.0M507.5 291.3V312.8M508.5 291.0V309.6M509.5 289.3V307.1M510.5 287.1V310.3M511.5 285.8V312.3M512.5 284.1V304.9M513.5 246.0V284.1M514.5 247.4V289.0M515.5 289.0V315.0M516.5 289.4V305.9M517.5 288.4V310.4M518.5 280.8V317.4M519.5 234.3V296.0M520.5 202.9V243.1M521.5 243.1V305.2M522.5 286.4V315.5M523.5 283.6V315.5M524.5 285.4V304.5M525.5 287.4V315.6M526.5 288.0V310.4M527.5 283.9V306.2M528.5 289.7V308.1M529.5 285.1V314.5M530.5 282.9V313.8M531.5 276.0V306.3M532.5 285.3V312.9M533.5 282.0V313.7M534.5 285.3V310.6M535.5 283.8V309.9M536.5 288.1V316.9M537.5 290.8V309.2M538.5 286.8V305.2M539.5 289.4V313.6M540.5 292.1V322.6M541.5 288.7V308.8M542.5 288.3V311.3M543.5 285.8V313.9M544.5 281.5V309.9M545.5 281.5V306.5M546.5 285.9V311.3M547.5 291.3V319.0M548.5 289.0V317.2M549.5 288.5V310.4M550.5 285.4V307.0M551.5 285.4V313.8M552.5 283.8V313.8M553.5 282.1V309.4M554.5 288.4V312.0M555.5 285.0V307.8M556.5 288.1V314.8M557.5 288.7V308.9M558.5 287.4V312.3M559.5 288.2V312.3M560.5 282.1V308.3M561.5 284.3V311.0M562.5 286.4V308.7M563.5 285.4V299.9M564.5 285.4V311.4M565.5 284.9V313.0M566.5 284.9V307.0M567.5 291.2V307.9M568.5 284.7V314.1M569.5 285.7V314.1M570.5 288.4V310.4M571.5 287.8V314.1M572.5 290.9V312.9M573.5 279.0V313.4M574.5 283.4V311.2M575.5 283.4V315.6M576.5 283.8V315.6M577.5 283.8V308.5M578.5 282.3V308.8M579.5 279.9V309.0M580.5 287.5V306.9M581.5 290.7V308.1M582.5 281.9V309.7M583.5 290.3V320.2M584.5 285.9V312.2M585.5 288.1V314.2M586.5 286.7V304.1M587.5 284.0V310.7M588.5 288.2V315.5M589.5 282.3V313.2M590.5 287.8V312.5M591.5 286.2V312.5M592.5 279.6V312.5M593.5 277.0V308.6M594.5 292.2V308.6M595.5 292.2V307.8M596.5 289.1V311.6M597.5 289.4V303.4M598.5 287.7V314.1M599.5 285.3V315.7M600.5 281.8V312.4M601.5 284.3V314.2M602.5 289.2V312.1M603.5 289.1V303.2M604.5 287.4V307.9M605.5 284.5V309.3M606.5 284.8V310.3M607.5 288.2V307.7M608.5 281.8V307.6M609.5 286.3V312.3M610.5 285.0V314.6M611.5 291.1V309.4M612.5 284.1V320.3M613.5 295.6V307.8M614.5 288.3V305.9M615.5 288.9V311.8M616.5 277.6V308.9M617.5 290.1V310.0M618.5 290.4V312.0M619.5 286.3V312.0M620.5 280.5V318.1M621.5 289.4V320.6M622.5 296.0V315.6M623.5 290.5V312.8M624.5 288.4V311.5M625.5 286.2V320.1M626.5 285.3V308.6M627.5 291.1V315.9M628.5 286.8V313.5M629.5 286.5V308.7M630.5 283.0V305.3M631.5 286.5V308.6M632.5 292.6V306.5M633.5 283.4V304.1M634.5 294.0V310.7M635.5 284.3V301.2M636.5 286.3V306.1M637.5 289.0V308.6M638.5 288.0V311.4M639.5 278.7V307.2M640.5 288.4V307.2M641.5 280.2V315.7M642.5 285.2V308.4M643.5 286.8V315.1M644.5 285.0V310.3M645.5 289.4V312.0M646.5 283.9V312.1M647.5 276.8V309.6M648.5 283.4V307.9M649.5 282.9V305.7M650.5 285.0V310.5M651.5 281.7V310.5M652.5 277.2V307.9M653.5 287.4V307.0M654.5 292.9V308.3M655.5 290.5V310.5M656.5 282.5V320.3M657.5 287.4V314.7M658.5 285.3V309.5M659.5 287.0V311.9M660.5 281.3V312.1M661.5 293.6V313.2M662.5 290.4V313.1M663.5 285.4V309.8M664.5 285.4V312.1M665.5 287.7V308.5M666.5 293.5V309.4M667.5 283.2V307.4M668.5 286.7V309.0M669.5 286.3V309.0M670.5 293.2V313.4M671.5 288.3V311.3M672.5 285.7V312.7M673.5 291.1V310.8M674.5 288.6V308.9M675.5 283.9V310.2M676.5 291.2V306.4M677.5 286.7V317.9M678.5 295.7V317.9M679.5 288.8V315.3M680.5 285.8V322.8M681.5 294.8V312.0M682.5 288.0V312.9M683.5 288.8V310.7M684.5 285.4V305.7M685.5 285.4V308.8M686.5 286.8V311.3M687.5 283.9V311.3M688.5 283.2V309.0M689.5 292.3V309.2M690.5 294.1V311.8M691.5 275.9V310.3M692.5 291.0V310.8M693.5 278.1V314.5M694.5 278.1V308.3M695.5 285.5V303.9M696.5 289.0V307.2M697.5 285.4V313.2M698.5 285.4V308.5M699.5 289.6V309.6M700.5 285.3V306.4M701.5 289.3V309.4M702.5 283.3V307.8M703.5 290.0V307.3M704.5 290.0V311.6M705.5 289.3V316.2M706.5 286.4V317.3M707.5 287.3V313.5M708.5 287.6V309.8M709.5 283.8V307.9M710.5 279.4V317.8M711.5 288.9V319.9M712.5 289.3V319.9M713.5 280.7V305.7M714.5 282.0V310.3M715.5 288.9V310.3M716.5 286.9V312.0M717.5 285.7V307.8M718.5 284.1V313.8M719.5 283.6V309.3M720.5 286.5V319.1M721.5 285.3V309.6M722.5 292.4V317.7M723.5 288.6V312.8M724.5 287.4V307.5M725.5 283.3V314.6M726.5 286.6V314.5M727.5 290.9V308.4M728.5 286.3V318.1M729.5 283.8V311.3M730.5 285.7V318.7M731.5 290.6V306.9M732.5 283.1V312.6M733.5 285.3V312.6M734.5 287.1V303.9M735.5 289.5V316.0M736.5 284.1V306.1M737.5 291.8V312.7M738.5 287.1V309.7M739.5 288.7V319.5M740.5 282.4V308.2M741.5 290.4V310.2M742.5 281.5V312.2M743.5 287.7V308.6M744.5 291.5V309.2M745.5 289.1V313.9M746.5 285.0V306.9M747.5 286.1V310.0M748.5 283.9V311.3M749.5 283.3V311.3M750.5 293.9V311.7M751.5 290.7V319.7M752.5 277.4V307.3M753.5 284.8V310.5M754.5 289.4V307.8M755.5 288.8V307.8M756.5 285.6V311.6M757.5 278.3V310.4M758.5 291.1V313.1M759.5 280.7V312.7M760.5 287.1V311.0M761.5 285.1V315.2M762.5 286.0V318.7M763.5 283.1V311.7M764.5 283.8V309.7M765.5 291.6V310.7M766.5 282.6V310.7M767.5 285.1V305.7M768.5 287.3V308.2M769.5 288.3V312.1M770.5 286.0V318.1M771.5 289.4V317.1M772.5 291.8V310.7M773.5 276.4V307.2M774.5 291.2V308.3M775.5 290.3V322.1M776.5 289.9V313.9M777.5 287.9V311.9M778.5 284.6V317.0M779.5 284.6V306.4M780.5 292.8V317.2M781.5 285.0V310.0M782.5 285.9V308.8M783.5 292.0V306.3M784.5 288.9V307.8M785.5 286.5V317.1M786.5 290.1V309.0M787.5 283.8V305.4M788.5 292.6V311.0M789.5 288.2V314.2M790.5 286.3V310.8M791.5 286.3V305.2M792.5 285.8V315.7M793.5 290.1V320.0M794.5 280.1V313.5M795.5 282.9V309.7M796.5 295.3V309.6M797.5 290.4V303.3M798.5 280.2V308.3M799.5 290.0V314.3M800.5 290.5V312.9M801.5 287.6V315.9M802.5 285.4V312.5M803.5 286.1V320.5M804.5 287.7V303.4M805.5 291.6V306.6M806.5 282.1V309.3M807.5 283.4V320.6M808.5 283.6V308.4M809.5 287.7V308.4M810.5 284.0V314.9M811.5 252.7V304.3M812.5 209.4V252.7M813.5 232.8V302.5M814.5 282.6V305.5M815.5 286.0V311.8M816.5 288.7V311.5M817.5 276.3V311.5M818.5 285.1V315.3M819.5 289.4V311.2M820.5 289.4V310.0M821.5 284.0V312.5M822.5 289.2V315.6M823.5 290.1V315.6M824.5 291.8V312.7M825.5 280.2V307.8M826.5 289.6V313.0M827.5 285.3V308.2M828.5 292.0V315.7M829.5 286.8V311.9M830.5 286.9V305.5M831.5 278.6V319.9M832.5 274.6V314.0M833.5 290.9V312.2M834.5 283.4V311.6M835.5 283.6V309.1M836.5 291.4V311.0M837.5 286.4V306.5M838.5 286.1V307.0M839.5 288.5V311.7M840.5 288.5V307.7M841.5 294.6V307.4M842.5 287.9V308.7M843.5 289.3V313.0M844.5 287.7V307.9M845.5 291.8V315.8M846.5 286.6V315.9M847.5 284.1V305.2M848.5 284.0V307.2M849.5 283.1V308.1M850.5 283.5V318.4M851.5 287.2V305.1M852.5 284.7V311.6M853.5 284.9V315.6M854.5 287.9V315.6M855.5 286.0V313.7M856.5 284.9V317.0M857.5 283.3V306.5M858.5 286.2V307.7M859.5 290.2V307.6M860.5 286.6V305.7M861.5 284.3V308.6M862.5 280.1V308.1M863.5 287.2V310.4M864.5 287.1V312.0M865.5 289.7V311.0M866.5 292.7V315.5M867.5 279.7V314.3M868.5 290.4V311.3M869.5 276.4V308.0M870.5 284.4V307.7M871.5 281.1V307.3M872.5 289.6V313.4M873.5 285.4V311.2M874.5 286.5V317.3M875.5 286.5V312.1M876.5 277.0V303.7M877.5 286.6V305.2M878.5 290.4V312.1M879.5 285.3V311.9M880.5 286.1V309.9M881.5 281.7V310.0M882.5 291.3V309.1M883.5 294.5V312.9M884.5 285.4V308.3M885.5 294.0V310.7M886.5 289.6V311.4M887.5 290.3V311.2M888.5 289.6V305.1M889.5 285.9V308.9M890.5 288.7V309.8M891.5 280.3V311.4M892.5 284.4V309.7M893.5 285.7V306.5M894.5 280.8V304.7M895.5 290.6V313.8M896.5 284.9V302.8M897.5 287.1V310.7M898.5 287.0V310.7M899.5 289.8V317.7M900.5 294.4V312.0M901.5 289.3V309.5M902.5 284.5V307.9M903.5 288.6V308.5M904.5 279.2V317.4M905.5 279.2V302.8M906.5 290.1V315.2M907.5 289.6V312.3M908.5 290.5V311.1M909.5 285.9V314.8M910.5 285.9V318.2M911.5 289.0V306.4M912.5 282.0V303.6M913.5 277.1V309.1M914.5 284.4V317.8M915.5 284.2V308.3M916.5 294.7V310.2M917.5 279.2V310.3M918.5 275.3V306.7M919.5 279.7V317.8M920.5 293.5V317.8M921.5 280.0V308.8M922.5 284.6V313.3M923.5 289.5V307.8M924.5 289.1V306.3M925.5 287.3V308.0M926.5 288.8V316.0M927.5 288.9V310.5M928.5 283.2V314.1M929.5 284.8V314.8M930.5 283.9V316.3M931.5 276.6V326.0M932.5 284.3V315.0M933.5 280.7V311.1M934.5 278.6V311.6M935.5 283.4V313.6M936.5 286.4V312.3M937.5 286.2V305.9M938.5 286.3V306.0M939.5 285.5V322.7M940.5 287.8V311.9M941.5 287.8V315.8M942.5 283.7V302.5M943.5 295.1V311.4M944.5 287.1V309.3M945.5 293.6V315.6M946.5 289.8V321.2M947.5 287.8V305.4M948.5 286.1V318.7M949.5 286.1V313.6M950.5 283.9V306.3M951.5 283.8V311.2M952.5 280.5V308.8M953.5 284.0V314.2M954.5 288.0V301.9M955.5 281.9V310.4M956.5 283.6V312.8M957.5 288.4V319.3M958.5 280.5V318.9M959.5 279.2V305.7M960.5 287.3V304.6M961.5 281.7V303.4M962.5 287.4V303.4M963.5 276.8V304.1M964.5 290.0V310.9M965.5 289.7V314.1M966.5 281.3V311.3M967.5 291.2V308.0M968.5 284.9V307.4M969.5 286.2V304.1M970.5 286.6V306.7M971.5 299.3V317.7M972.5 287.5V308.8M973.5 283.4V307.3M974.5 285.9V308.2M975.5 284.7V306.9M976.5 284.5V316.0M977.5 278.8V310.8M978.5 286.1V318.1M979.5 288.1V313.8M980.5 282.6V318.8M981.5 288.7V315.8M982.5 290.3V306.8M983.5 292.2V311.1M984.5 289.1V312.0M985.5 287.9V317.0M986.5 290.6V313.1M987.5 291.3V312.5M988.5 289.8V314.6M989.5 281.8V308.3M990.5 289.7V319.1M991.5 288.1V312.1M992.5 285.1V311.9M993.5 284.7V312.1M994.5 290.8V313.7M995.5 289.8V312.4M996.5 285.6V315.9M997.5 284.3V309.2M998.5 283.2V313.5M999.5 283.2V315.4M1000.5 287.5V312.1M1001.5 282.6V309.9M1002.5 287.5V320.7M1003.5 286.1V314.5M1004.5 282.5V302.9M1005.5 290.3V312.3M1006.5 289.0V317.4M1007.5 285.8V307.3M1008.5 287.3V313.7M1009.5 282.5V313.7M1010.5 287.7V313.7M1011.5 290.5V316.2M1012.5 288.8V305.5M1013.5 290.7V305.6M1014.5 288.6V312.3M1015.5 287.0V312.2M1016.5 287.6V308.9M1017.5 289.9V306.7M1018.5 289.0V307.1" stroke="#ffff00" stroke-width="1.15" fill="none"/>
<rect x="104" y="410" width="915" height="127" fill="#1c00e2"/>
<defs><pattern id="bt" x="104" y="410" width="97" height="54.10" patternUnits="userSpaceOnUse"><path fill="#3400d8" d="M0 2.7h1v2.7h-1zM0 10.8h1v2.7h-1zM0 24.3h1v8.1h-1zM0 35.2h1v2.7h-1zM0 40.6h1v8.1h-1zM0 51.4h1v2.7h-1zM1 0.0h1v10.8h-1zM1 18.9h1v5.4h-1zM1 29.8h1v5.4h-1zM1 43.3h1v2.7h-1zM1 51.4h1v2.7h-1zM2 0.0h1v2.7h-1zM2 5.4h1v2.7h-1zM2 13.5h1v2.7h-1zM2 18.9h1v2.7h-1zM2 27.1h1v2.7h-1zM2 37.9h1v2.7h-1zM2 43.3h1v2.7h-1zM3 2.7h1v2.7h-1zM3 13.5h1v5.4h-1zM3 21.6h1v2.7h-1zM3 29.8h1v8.1h-1zM4 5.4h1v5.4h-1zM4 16.2h1v2.7h-1zM4 21.6h1v2.7h-1zM4 29.8h1v2.7h-1zM4 35.2h1v8.1h-1zM5 10.8h1v2.7h-1zM5 24.3h1v5.4h-1zM5 32.5h1v8.1h-1zM5 43.3h1v8.1h-1zM6 5.4h1v10.8h-1zM6 24.3h1v5.4h-1zM6 32.5h1v2.7h-1zM6 37.9h1v5.4h-1zM6 46.0h1v2.7h-1zM6 51.4h1v2.7h-1zM7 5.4h1v2.7h-1zM7 24.3h1v18.9h-1zM7 46.0h1v8.1h-1zM8 5.4h1v5.4h-1zM8 13.5h1v5.4h-1zM8 24.3h1v5.4h-1zM8 32.5h1v2.7h-1zM8 37.9h1v5.4h-1zM8 51.4h1v2.7h-1zM9 8.1h1v2.7h-1zM9 16.2h1v2.7h-1zM9 32.5h1v2.7h-1zM9 40.6h1v2.7h-1zM9 48.7h1v2.7h-1zM10 0.0h1v5.4h-1zM10 10.8h1v10.8h-1zM10 24.3h1v2.7h-1zM10 48.7h1v2.7h-1zM11 8.1h1v5.4h-1zM11 18.9h1v2.7h-1zM11 29.8h1v2.7h-1zM11 35.2h1v13.5h-1zM12 2.7h1v2.7h-1zM12 10.8h1v8.1h-1zM12 21.6h1v2.7h-1zM12 37.9h1v2.7h-1zM12 46.0h1v5.4h-1zM13 5.4h1v2.7h-1zM13 10.8h1v5.4h-1zM13 21.6h1v2.7h-1zM13 29.8h1v2.7h-1zM13 35.2h1v5.4h-1zM13 48.7h1v2.7h-1zM14 2.7h1v2.7h-1zM14 16.2h1v2.7h-1zM14 27.1h1v2.7h-1zM14 43.3h1v2.7h-1zM14 48.7h1v2.7h-1zM15 0.0h1v10.8h-1zM15 21.6h1v5.4h-1zM15 29.8h1v5.4h-1zM15 37.9h1v2.7h-1zM15 51.4h1v2.7h-1zM16 10.8h1v10.8h-1zM16 24.3h1v2.7h-1zM16 35.2h1v2.7h-1zM16 51.4h1v2.7h-1zM17 8.1h1v2.7h-1zM17 13.5h1v2.7h-1zM17 21.6h1v2.7h-1zM17 35.2h1v5.4h-1zM17 43.3h1v5.4h-1zM18 2.7h1v2.7h-1zM18 16.2h1v2.7h-1zM18 21.6h1v5.4h-1zM18 35.2h1v5.4h-1zM18 51.4h1v2.7h-1zM19 8.1h1v2.7h-1zM19 13.5h1v2.7h-1zM19 21.6h1v2.7h-1zM19 27.1h1v2.7h-1zM19 35.2h1v13.5h-1zM20 5.4h1v2.7h-1zM20 10.8h1v5.4h-1zM20 24.3h1v2.7h-1zM20 32.5h1v2.7h-1zM20 43.3h1v5.4h-1zM21 10.8h1v2.7h-1zM21 16.2h1v2.7h-1zM21 32.5h1v5.4h-1zM21 40.6h1v5.4h-1zM21 48.7h1v5.4h-1zM22 5.4h1v2.7h-1zM22 16.2h1v5.4h-1zM22 24.3h1v8.1h-1zM22 35.2h1v8.1h-1zM22 51.4h1v2.7h-1zM23 0.0h1v13.5h-1zM23 16.2h1v2.7h-1zM23 24.3h1v5.4h-1zM23 35.2h1v2.7h-1zM23 40.6h1v8.1h-1zM24 2.7h1v2.7h-1zM24 13.5h1v2.7h-1zM24 21.6h1v2.7h-1zM24 27.1h1v2.7h-1zM24 32.5h1v2.7h-1zM24 40.6h1v2.7h-1zM24 46.0h1v5.4h-1zM25 2.7h1v5.4h-1zM25 13.5h1v5.4h-1zM25 24.3h1v2.7h-1zM25 29.8h1v10.8h-1zM25 43.3h1v5.4h-1zM25 51.4h1v2.7h-1zM26 2.7h1v5.4h-1zM26 10.8h1v5.4h-1zM26 18.9h1v2.7h-1zM26 27.1h1v13.5h-1zM26 43.3h1v10.8h-1zM27 0.0h1v2.7h-1zM27 10.8h1v2.7h-1zM27 16.2h1v5.4h-1zM27 32.5h1v13.5h-1zM27 51.4h1v2.7h-1zM28 13.5h1v2.7h-1zM28 18.9h1v2.7h-1zM28 24.3h1v5.4h-1zM28 32.5h1v8.1h-1zM28 43.3h1v5.4h-1zM28 51.4h1v2.7h-1zM29 10.8h1v2.7h-1zM29 18.9h1v2.7h-1zM29 27.1h1v2.7h-1zM29 37.9h1v5.4h-1zM30 0.0h1v2.7h-1zM30 5.4h1v2.7h-1zM30 29.8h1v2.7h-1zM30 43.3h1v2.7h-1zM30 48.7h1v5.4h-1zM31 5.4h1v5.4h-1zM31 16.2h1v2.7h-1zM31 24.3h1v2.7h-1zM31 32.5h1v2.7h-1zM31 37.9h1v2.7h-1zM31 43.3h1v5.4h-1zM31 51.4h1v2.7h-1zM32 0.0h1v2.7h-1zM32 5.4h1v5.4h-1zM32 32.5h1v2.7h-1zM32 43.3h1v5.4h-1zM33 8.1h1v5.4h-1zM33 18.9h1v5.4h-1zM33 27.1h1v5.4h-1zM33 35.2h1v2.7h-1zM33 40.6h1v2.7h-1zM34 8.1h1v8.1h-1zM34 18.9h1v10.8h-1zM35 2.7h1v2.7h-1zM35 8.1h1v5.4h-1zM35 18.9h1v2.7h-1zM35 37.9h1v2.7h-1zM36 0.0h1v5.4h-1zM36 8.1h1v2.7h-1zM36 16.2h1v2.7h-1zM36 27.1h1v13.5h-1zM36 46.0h1v2.7h-1zM37 2.7h1v2.7h-1zM37 8.1h1v2.7h-1zM37 24.3h1v2.7h-1zM37 32.5h1v2.7h-1zM37 46.0h1v5.4h-1zM38 10.8h1v2.7h-1zM38 16.2h1v2.7h-1zM38 21.6h1v2.7h-1zM38 27.1h1v5.4h-1zM38 37.9h1v2.7h-1zM38 43.3h1v2.7h-1zM38 48.7h1v2.7h-1zM39 5.4h1v5.4h-1zM39 18.9h1v8.1h-1zM39 43.3h1v2.7h-1zM39 48.7h1v5.4h-1zM40 5.4h1v2.7h-1zM40 10.8h1v5.4h-1zM40 24.3h1v5.4h-1zM40 32.5h1v13.5h-1zM40 48.7h1v2.7h-1zM41 0.0h1v2.7h-1zM41 5.4h1v8.1h-1zM41 35.2h1v2.7h-1zM41 40.6h1v5.4h-1zM42 0.0h1v2.7h-1zM42 5.4h1v5.4h-1zM42 32.5h1v2.7h-1zM42 37.9h1v2.7h-1zM42 43.3h1v5.4h-1zM42 51.4h1v2.7h-1zM43 0.0h1v8.1h-1zM43 10.8h1v5.4h-1zM43 21.6h1v5.4h-1zM43 40.6h1v5.4h-1zM43 48.7h1v2.7h-1zM44 0.0h1v2.7h-1zM44 13.5h1v2.7h-1zM44 18.9h1v2.7h-1zM44 27.1h1v5.4h-1zM44 35.2h1v8.1h-1zM44 46.0h1v5.4h-1zM45 5.4h1v2.7h-1zM45 10.8h1v5.4h-1zM45 27.1h1v16.2h-1zM46 2.7h1v2.7h-1zM46 8.1h1v2.7h-1zM46 13.5h1v5.4h-1zM46 27.1h1v2.7h-1zM46 37.9h1v8.1h-1zM46 48.7h1v5.4h-1zM47 0.0h1v5.4h-1zM47 8.1h1v2.7h-1zM47 13.5h1v5.4h-1zM47 21.6h1v2.7h-1zM47 27.1h1v5.4h-1zM47 35.2h1v10.8h-1zM48 5.4h1v10.8h-1zM48 24.3h1v2.7h-1zM48 32.5h1v2.7h-1zM48 37.9h1v2.7h-1zM48 46.0h1v2.7h-1zM49 0.0h1v2.7h-1zM49 5.4h1v18.9h-1zM49 27.1h1v2.7h-1zM49 32.5h1v2.7h-1zM49 40.6h1v8.1h-1zM49 51.4h1v2.7h-1zM50 0.0h1v2.7h-1zM50 5.4h1v2.7h-1zM50 10.8h1v2.7h-1zM50 16.2h1v8.1h-1zM50 32.5h1v5.4h-1zM50 46.0h1v8.1h-1zM51 8.1h1v5.4h-1zM51 16.2h1v2.7h-1zM51 21.6h1v2.7h-1zM51 32.5h1v2.7h-1zM51 43.3h1v2.7h-1zM51 48.7h1v5.4h-1zM52 2.7h1v5.4h-1zM52 10.8h1v2.7h-1zM52 16.2h1v2.7h-1zM52 27.1h1v2.7h-1zM52 32.5h1v5.4h-1zM52 40.6h1v5.4h-1zM53 2.7h1v2.7h-1zM53 16.2h1v2.7h-1zM53 21.6h1v2.7h-1zM53 27.1h1v5.4h-1zM53 35.2h1v8.1h-1zM54 2.7h1v2.7h-1zM54 8.1h1v10.8h-1zM54 27.1h1v2.7h-1zM54 32.5h1v8.1h-1zM54 43.3h1v2.7h-1zM54 48.7h1v2.7h-1zM55 8.1h1v8.1h-1zM55 18.9h1v2.7h-1zM55 40.6h1v13.5h-1zM56 8.1h1v5.4h-1zM56 16.2h1v2.7h-1zM56 24.3h1v10.8h-1zM56 43.3h1v8.1h-1zM57 5.4h1v2.7h-1zM57 16.2h1v5.4h-1zM57 37.9h1v2.7h-1zM57 46.0h1v2.7h-1zM57 51.4h1v2.7h-1zM58 2.7h1v2.7h-1zM58 8.1h1v2.7h-1zM58 13.5h1v5.4h-1zM58 24.3h1v2.7h-1zM58 29.8h1v5.4h-1zM58 37.9h1v2.7h-1zM58 43.3h1v10.8h-1zM59 0.0h1v2.7h-1zM59 5.4h1v2.7h-1zM59 13.5h1v5.4h-1zM59 21.6h1v2.7h-1zM59 27.1h1v2.7h-1zM59 40.6h1v13.5h-1zM60 5.4h1v2.7h-1zM60 18.9h1v2.7h-1zM60 29.8h1v2.7h-1zM60 35.2h1v2.7h-1zM60 48.7h1v5.4h-1zM61 2.7h1v5.4h-1zM61 10.8h1v13.5h-1zM61 35.2h1v5.4h-1zM61 43.3h1v2.7h-1zM61 51.4h1v2.7h-1zM62 0.0h1v10.8h-1zM62 16.2h1v5.4h-1zM62 24.3h1v10.8h-1zM62 37.9h1v5.4h-1zM62 48.7h1v5.4h-1zM63 0.0h1v2.7h-1zM63 5.4h1v10.8h-1zM63 18.9h1v5.4h-1zM63 29.8h1v8.1h-1zM63 43.3h1v2.7h-1zM63 51.4h1v2.7h-1zM64 0.0h1v2.7h-1zM64 5.4h1v2.7h-1zM64 13.5h1v5.4h-1zM64 35.2h1v2.7h-1zM64 43.3h1v5.4h-1zM65 0.0h1v10.8h-1zM65 13.5h1v2.7h-1zM65 21.6h1v2.7h-1zM65 29.8h1v2.7h-1zM65 35.2h1v5.4h-1zM65 43.3h1v2.7h-1zM66 10.8h1v8.1h-1zM66 21.6h1v5.4h-1zM66 29.8h1v8.1h-1zM66 51.4h1v2.7h-1zM67 2.7h1v2.7h-1zM67 13.5h1v2.7h-1zM67 21.6h1v2.7h-1zM67 27.1h1v10.8h-1zM67 40.6h1v5.4h-1zM67 48.7h1v2.7h-1zM68 0.0h1v2.7h-1zM68 10.8h1v5.4h-1zM68 21.6h1v8.1h-1zM68 37.9h1v8.1h-1zM69 0.0h1v2.7h-1zM69 5.4h1v2.7h-1zM69 10.8h1v2.7h-1zM69 24.3h1v2.7h-1zM69 37.9h1v2.7h-1zM69 43.3h1v10.8h-1zM70 2.7h1v2.7h-1zM70 18.9h1v10.8h-1zM70 35.2h1v2.7h-1zM70 43.3h1v5.4h-1zM70 51.4h1v2.7h-1zM71 2.7h1v10.8h-1zM71 16.2h1v2.7h-1zM71 24.3h1v2.7h-1zM71 29.8h1v2.7h-1zM71 40.6h1v2.7h-1zM71 48.7h1v2.7h-1zM72 0.0h1v2.7h-1zM72 10.8h1v8.1h-1zM72 29.8h1v2.7h-1zM72 35.2h1v5.4h-1zM72 51.4h1v2.7h-1zM73 0.0h1v10.8h-1zM73 18.9h1v8.1h-1zM73 32.5h1v5.4h-1zM74 0.0h1v2.7h-1zM74 5.4h1v2.7h-1zM74 13.5h1v2.7h-1zM74 18.9h1v2.7h-1zM74 27.1h1v5.4h-1zM74 35.2h1v5.4h-1zM74 48.7h1v2.7h-1zM75 0.0h1v2.7h-1zM75 16.2h1v5.4h-1zM75 24.3h1v5.4h-1zM75 32.5h1v5.4h-1zM75 43.3h1v5.4h-1zM75 51.4h1v2.7h-1zM76 0.0h1v5.4h-1zM76 13.5h1v2.7h-1zM76 29.8h1v5.4h-1zM76 37.9h1v5.4h-1zM76 46.0h1v8.1h-1zM77 0.0h1v8.1h-1zM77 13.5h1v2.7h-1zM77 24.3h1v2.7h-1zM77 29.8h1v2.7h-1zM77 43.3h1v2.7h-1zM78 0.0h1v2.7h-1zM78 8.1h1v8.1h-1zM78 18.9h1v2.7h-1zM78 27.1h1v8.1h-1zM78 37.9h1v5.4h-1zM78 46.0h1v2.7h-1zM78 51.4h1v2.7h-1zM79 0.0h1v5.4h-1zM79 8.1h1v2.7h-1zM79 16.2h1v2.7h-1zM79 21.6h1v2.7h-1zM79 32.5h1v5.4h-1zM79 40.6h1v2.7h-1zM79 46.0h1v2.7h-1zM80 5.4h1v2.7h-1zM80 10.8h1v2.7h-1zM80 16.2h1v2.7h-1zM80 24.3h1v5.4h-1zM80 43.3h1v2.7h-1zM80 48.7h1v5.4h-1zM81 2.7h1v5.4h-1zM81 10.8h1v2.7h-1zM81 24.3h1v2.7h-1zM81 29.8h1v10.8h-1zM81 48.7h1v5.4h-1zM82 2.7h1v5.4h-1zM82 18.9h1v5.4h-1zM82 27.1h1v2.7h-1zM82 37.9h1v5.4h-1zM82 51.4h1v2.7h-1zM83 8.1h1v2.7h-1zM83 13.5h1v10.8h-1zM83 40.6h1v2.7h-1zM84 2.7h1v10.8h-1zM84 16.2h1v2.7h-1zM84 21.6h1v2.7h-1zM84 32.5h1v2.7h-1zM84 46.0h1v5.4h-1zM85 2.7h1v5.4h-1zM85 24.3h1v2.7h-1zM85 32.5h1v2.7h-1zM85 40.6h1v2.7h-1zM86 5.4h1v5.4h-1zM86 16.2h1v2.7h-1zM86 24.3h1v2.7h-1zM86 32.5h1v5.4h-1zM86 43.3h1v2.7h-1zM87 0.0h1v2.7h-1zM87 5.4h1v2.7h-1zM87 10.8h1v2.7h-1zM87 24.3h1v2.7h-1zM87 37.9h1v2.7h-1zM87 46.0h1v2.7h-1zM87 51.4h1v2.7h-1zM88 2.7h1v8.1h-1zM88 13.5h1v5.4h-1zM88 21.6h1v2.7h-1zM89 0.0h1v2.7h-1zM89 8.1h1v5.4h-1zM89 16.2h1v2.7h-1zM89 24.3h1v8.1h-1zM89 35.2h1v8.1h-1zM89 46.0h1v2.7h-1zM89 51.4h1v2.7h-1zM90 0.0h1v2.7h-1zM90 5.4h1v5.4h-1zM90 32.5h1v2.7h-1zM90 40.6h1v2.7h-1zM91 0.0h1v8.1h-1zM91 10.8h1v5.4h-1zM91 18.9h1v2.7h-1zM91 24.3h1v2.7h-1zM91 32.5h1v2.7h-1zM91 40.6h1v2.7h-1zM91 48.7h1v2.7h-1zM92 0.0h1v10.8h-1zM92 13.5h1v5.4h-1zM92 24.3h1v2.7h-1zM92 32.5h1v5.4h-1zM92 43.3h1v5.4h-1zM93 5.4h1v2.7h-1zM93 10.8h1v5.4h-1zM93 18.9h1v2.7h-1zM93 37.9h1v5.4h-1zM93 51.4h1v2.7h-1zM94 16.2h1v5.4h-1zM94 27.1h1v2.7h-1zM94 46.0h1v2.7h-1zM94 51.4h1v2.7h-1zM95 5.4h1v2.7h-1zM95 16.2h1v5.4h-1zM95 29.8h1v5.4h-1zM95 40.6h1v8.1h-1zM95 51.4h1v2.7h-1zM96 0.0h1v8.1h-1zM96 16.2h1v2.7h-1zM96 27.1h1v5.4h-1zM96 37.9h1v2.7h-1zM96 43.3h1v2.7h-1zM96 51.4h1v2.7h-1z"/><path fill="#1600e8" d="M0 0.0h1v2.7h-1zM0 13.5h1v5.4h-1zM1 10.8h1v2.7h-1zM1 35.2h1v2.7h-1zM1 46.0h1v5.4h-1zM2 2.7h1v2.7h-1zM2 16.2h1v2.7h-1zM2 21.6h1v5.4h-1zM2 29.8h1v2.7h-1zM2 46.0h1v2.7h-1zM2 51.4h1v2.7h-1zM3 10.8h1v2.7h-1zM3 18.9h1v2.7h-1zM3 24.3h1v2.7h-1zM3 37.9h1v5.4h-1zM3 46.0h1v2.7h-1zM4 2.7h1v2.7h-1zM4 13.5h1v2.7h-1zM4 43.3h1v5.4h-1zM5 0.0h1v2.7h-1zM5 40.6h1v2.7h-1zM6 0.0h1v2.7h-1zM6 16.2h1v2.7h-1zM6 21.6h1v2.7h-1zM6 35.2h1v2.7h-1zM7 0.0h1v2.7h-1zM7 13.5h1v2.7h-1zM7 18.9h1v2.7h-1zM8 0.0h1v5.4h-1zM8 10.8h1v2.7h-1zM8 29.8h1v2.7h-1zM9 5.4h1v2.7h-1zM9 13.5h1v2.7h-1zM9 37.9h1v2.7h-1zM9 43.3h1v2.7h-1zM10 5.4h1v2.7h-1zM10 35.2h1v2.7h-1zM10 40.6h1v2.7h-1zM10 51.4h1v2.7h-1zM11 2.7h1v2.7h-1zM11 21.6h1v2.7h-1zM11 32.5h1v2.7h-1zM11 48.7h1v2.7h-1zM12 0.0h1v2.7h-1zM12 29.8h1v5.4h-1zM12 40.6h1v2.7h-1zM13 27.1h1v2.7h-1zM13 32.5h1v2.7h-1zM13 43.3h1v2.7h-1zM14 10.8h1v5.4h-1zM14 21.6h1v2.7h-1zM14 29.8h1v5.4h-1zM14 46.0h1v2.7h-1zM15 10.8h1v2.7h-1zM15 18.9h1v2.7h-1zM15 27.1h1v2.7h-1zM15 35.2h1v2.7h-1zM16 37.9h1v2.7h-1zM16 43.3h1v2.7h-1zM16 48.7h1v2.7h-1zM17 5.4h1v2.7h-1zM17 16.2h1v2.7h-1zM17 24.3h1v8.1h-1zM17 48.7h1v5.4h-1zM18 5.4h1v5.4h-1zM18 43.3h1v2.7h-1zM18 48.7h1v2.7h-1zM19 0.0h1v2.7h-1zM19 24.3h1v2.7h-1zM19 29.8h1v2.7h-1zM20 0.0h1v5.4h-1zM20 18.9h1v5.4h-1zM20 29.8h1v2.7h-1zM20 35.2h1v5.4h-1zM21 2.7h1v2.7h-1zM21 8.1h1v2.7h-1zM21 18.9h1v2.7h-1zM21 27.1h1v2.7h-1zM21 37.9h1v2.7h-1zM22 0.0h1v2.7h-1zM22 13.5h1v2.7h-1zM22 32.5h1v2.7h-1zM22 43.3h1v2.7h-1zM23 13.5h1v2.7h-1zM23 18.9h1v2.7h-1zM23 51.4h1v2.7h-1zM24 8.1h1v5.4h-1zM24 24.3h1v2.7h-1zM24 43.3h1v2.7h-1zM24 51.4h1v2.7h-1zM25 10.8h1v2.7h-1zM25 27.1h1v2.7h-1zM26 8.1h1v2.7h-1zM26 40.6h1v2.7h-1zM27 2.7h1v2.7h-1zM27 8.1h1v2.7h-1zM27 21.6h1v8.1h-1zM27 46.0h1v2.7h-1zM28 40.6h1v2.7h-1zM29 2.7h1v2.7h-1zM29 8.1h1v2.7h-1zM29 16.2h1v2.7h-1zM29 21.6h1v2.7h-1zM29 32.5h1v2.7h-1zM29 43.3h1v2.7h-1zM30 13.5h1v2.7h-1zM30 32.5h1v2.7h-1zM31 10.8h1v2.7h-1zM31 40.6h1v2.7h-1zM31 48.7h1v2.7h-1zM32 13.5h1v2.7h-1zM32 29.8h1v2.7h-1zM32 35.2h1v5.4h-1zM33 0.0h1v2.7h-1zM33 24.3h1v2.7h-1zM33 43.3h1v2.7h-1zM33 48.7h1v5.4h-1zM34 0.0h1v2.7h-1zM34 48.7h1v2.7h-1zM35 0.0h1v2.7h-1zM35 21.6h1v13.5h-1zM35 40.6h1v2.7h-1zM36 10.8h1v5.4h-1zM36 21.6h1v2.7h-1zM36 40.6h1v2.7h-1zM37 0.0h1v2.7h-1zM37 13.5h1v2.7h-1zM37 18.9h1v5.4h-1zM37 35.2h1v8.1h-1zM38 2.7h1v2.7h-1zM38 13.5h1v2.7h-1zM38 32.5h1v5.4h-1zM38 40.6h1v2.7h-1zM39 2.7h1v2.7h-1zM39 13.5h1v2.7h-1zM39 32.5h1v2.7h-1zM39 46.0h1v2.7h-1zM40 8.1h1v2.7h-1zM40 29.8h1v2.7h-1zM40 46.0h1v2.7h-1zM41 2.7h1v2.7h-1zM41 16.2h1v8.1h-1zM41 27.1h1v8.1h-1zM42 2.7h1v2.7h-1zM42 16.2h1v2.7h-1zM42 29.8h1v2.7h-1zM42 40.6h1v2.7h-1zM43 8.1h1v2.7h-1zM43 16.2h1v2.7h-1zM43 29.8h1v2.7h-1zM43 35.2h1v2.7h-1zM44 24.3h1v2.7h-1zM45 0.0h1v5.4h-1zM45 8.1h1v2.7h-1zM45 16.2h1v10.8h-1zM45 43.3h1v5.4h-1zM46 0.0h1v2.7h-1zM46 5.4h1v2.7h-1zM46 21.6h1v2.7h-1zM46 29.8h1v5.4h-1zM47 18.9h1v2.7h-1zM47 24.3h1v2.7h-1zM47 32.5h1v2.7h-1zM47 46.0h1v2.7h-1zM47 51.4h1v2.7h-1zM48 2.7h1v2.7h-1zM48 18.9h1v2.7h-1zM48 40.6h1v2.7h-1zM48 51.4h1v2.7h-1zM49 2.7h1v2.7h-1zM49 29.8h1v2.7h-1zM49 37.9h1v2.7h-1zM49 48.7h1v2.7h-1zM50 2.7h1v2.7h-1zM50 8.1h1v2.7h-1zM50 13.5h1v2.7h-1zM51 0.0h1v8.1h-1zM51 13.5h1v2.7h-1zM51 18.9h1v2.7h-1zM51 29.8h1v2.7h-1zM51 35.2h1v2.7h-1zM52 8.1h1v2.7h-1zM52 13.5h1v2.7h-1zM52 18.9h1v8.1h-1zM52 29.8h1v2.7h-1zM53 5.4h1v8.1h-1zM53 24.3h1v2.7h-1zM53 32.5h1v2.7h-1zM53 51.4h1v2.7h-1zM54 0.0h1v2.7h-1zM54 18.9h1v2.7h-1zM54 40.6h1v2.7h-1zM54 46.0h1v2.7h-1zM55 5.4h1v2.7h-1zM55 21.6h1v2.7h-1zM55 27.1h1v2.7h-1zM55 35.2h1v2.7h-1zM56 0.0h1v2.7h-1zM56 18.9h1v5.4h-1zM56 51.4h1v2.7h-1zM57 8.1h1v5.4h-1zM57 24.3h1v8.1h-1zM57 48.7h1v2.7h-1zM58 5.4h1v2.7h-1zM58 21.6h1v2.7h-1zM58 27.1h1v2.7h-1zM58 35.2h1v2.7h-1zM59 8.1h1v5.4h-1zM59 29.8h1v5.4h-1zM60 13.5h1v2.7h-1zM60 40.6h1v2.7h-1zM60 46.0h1v2.7h-1zM61 29.8h1v2.7h-1zM62 35.2h1v2.7h-1zM62 46.0h1v2.7h-1zM63 2.7h1v2.7h-1zM63 27.1h1v2.7h-1zM64 8.1h1v2.7h-1zM64 40.6h1v2.7h-1zM64 51.4h1v2.7h-1zM65 10.8h1v2.7h-1zM65 18.9h1v2.7h-1zM65 24.3h1v2.7h-1zM65 48.7h1v5.4h-1zM66 2.7h1v2.7h-1zM66 37.9h1v2.7h-1zM66 43.3h1v2.7h-1zM66 48.7h1v2.7h-1zM67 5.4h1v5.4h-1zM67 16.2h1v5.4h-1zM67 24.3h1v2.7h-1zM68 5.4h1v2.7h-1zM68 16.2h1v5.4h-1zM68 29.8h1v5.4h-1zM68 48.7h1v5.4h-1zM69 8.1h1v2.7h-1zM69 16.2h1v5.4h-1zM69 27.1h1v5.4h-1zM69 40.6h1v2.7h-1zM70 5.4h1v2.7h-1zM70 32.5h1v2.7h-1zM70 48.7h1v2.7h-1zM71 0.0h1v2.7h-1zM71 13.5h1v2.7h-1zM71 21.6h1v2.7h-1zM71 32.5h1v5.4h-1zM72 2.7h1v2.7h-1zM72 21.6h1v2.7h-1zM72 40.6h1v10.8h-1zM73 13.5h1v2.7h-1zM73 27.1h1v2.7h-1zM73 37.9h1v2.7h-1zM73 43.3h1v8.1h-1zM74 21.6h1v2.7h-1zM74 40.6h1v2.7h-1zM74 51.4h1v2.7h-1zM75 8.1h1v5.4h-1zM75 37.9h1v5.4h-1zM76 5.4h1v2.7h-1zM76 18.9h1v2.7h-1zM76 27.1h1v2.7h-1zM76 35.2h1v2.7h-1zM76 43.3h1v2.7h-1zM77 8.1h1v5.4h-1zM77 16.2h1v2.7h-1zM77 27.1h1v2.7h-1zM77 32.5h1v2.7h-1zM77 37.9h1v2.7h-1zM77 46.0h1v5.4h-1zM78 5.4h1v2.7h-1zM78 16.2h1v2.7h-1zM79 10.8h1v2.7h-1zM79 27.1h1v2.7h-1zM79 43.3h1v2.7h-1zM79 51.4h1v2.7h-1zM80 8.1h1v2.7h-1zM80 18.9h1v2.7h-1zM80 29.8h1v5.4h-1zM80 40.6h1v2.7h-1zM81 8.1h1v2.7h-1zM81 13.5h1v2.7h-1zM81 18.9h1v2.7h-1zM81 27.1h1v2.7h-1zM81 40.6h1v8.1h-1zM82 10.8h1v5.4h-1zM82 35.2h1v2.7h-1zM82 46.0h1v2.7h-1zM83 0.0h1v2.7h-1zM83 10.8h1v2.7h-1zM83 24.3h1v2.7h-1zM83 43.3h1v2.7h-1zM83 48.7h1v5.4h-1zM84 18.9h1v2.7h-1zM84 27.1h1v5.4h-1zM84 51.4h1v2.7h-1zM85 16.2h1v2.7h-1zM85 21.6h1v2.7h-1zM85 29.8h1v2.7h-1zM85 35.2h1v2.7h-1zM85 51.4h1v2.7h-1zM86 2.7h1v2.7h-1zM86 13.5h1v2.7h-1zM86 21.6h1v2.7h-1zM86 29.8h1v2.7h-1zM86 48.7h1v5.4h-1zM87 2.7h1v2.7h-1zM87 18.9h1v5.4h-1zM87 27.1h1v2.7h-1zM87 35.2h1v2.7h-1zM87 40.6h1v2.7h-1zM88 0.0h1v2.7h-1zM88 27.1h1v8.1h-1zM88 43.3h1v2.7h-1zM89 5.4h1v2.7h-1zM89 13.5h1v2.7h-1zM89 18.9h1v2.7h-1zM89 48.7h1v2.7h-1zM90 27.1h1v2.7h-1zM90 35.2h1v5.4h-1zM90 43.3h1v2.7h-1zM91 21.6h1v2.7h-1zM91 27.1h1v2.7h-1zM91 35.2h1v2.7h-1zM91 51.4h1v2.7h-1zM92 10.8h1v2.7h-1zM92 18.9h1v2.7h-1zM92 27.1h1v2.7h-1zM93 0.0h1v2.7h-1zM93 24.3h1v8.1h-1zM93 43.3h1v8.1h-1zM94 0.0h1v2.7h-1zM94 8.1h1v8.1h-1zM94 21.6h1v5.4h-1zM94 29.8h1v2.7h-1zM94 37.9h1v2.7h-1zM94 43.3h1v2.7h-1zM95 0.0h1v5.4h-1zM95 10.8h1v2.7h-1zM95 27.1h1v2.7h-1zM95 37.9h1v2.7h-1zM96 8.1h1v2.7h-1zM96 18.9h1v8.1h-1zM96 32.5h1v2.7h-1zM96 48.7h1v2.7h-1z"/></pattern></defs>
<rect x="104" y="410" width="915" height="127" fill="url(#bt)"/>
<path fill="#3d02d8" d="M156 453.3h2v2.75h-2zM296 453.3h6v2.75h-6zM324 453.3h2v2.75h-2zM328 453.3h2v2.75h-2zM332 453.3h2v2.75h-2zM336 453.3h2v2.75h-2zM356 453.3h2v2.75h-2zM360 453.3h2v2.75h-2zM366 453.3h2v2.75h-2zM382 453.3h2v2.75h-2zM386 453.3h6v2.75h-6zM394 453.3h2v2.75h-2zM410 453.3h4v2.75h-4zM416 453.3h2v2.75h-2zM422 453.3h2v2.75h-2zM428 453.3h2v2.75h-2zM434 453.3h4v2.75h-4zM442 453.3h6v2.75h-6zM450 453.3h2v2.75h-2zM460 453.3h2v2.75h-2zM464 453.3h4v2.75h-4zM470 453.3h4v2.75h-4zM476 453.3h2v2.75h-2zM480 453.3h6v2.75h-6zM490 453.3h6v2.75h-6zM506 453.3h2v2.75h-2zM514 453.3h14v2.75h-14zM534 453.3h10v2.75h-10zM552 453.3h2v2.75h-2zM558 453.3h14v2.75h-14zM586 453.3h6v2.75h-6zM594 453.3h14v2.75h-14zM610 453.3h6v2.75h-6zM618 453.3h6v2.75h-6zM626 453.3h2v2.75h-2zM630 453.3h6v2.75h-6zM640 453.3h6v2.75h-6zM648 453.3h2v2.75h-2zM654 453.3h4v2.75h-4zM660 453.3h10v2.75h-10zM672 453.3h2v2.75h-2zM676 453.3h2v2.75h-2zM780 453.3h2v2.75h-2zM784 453.3h2v2.75h-2zM808 453.3h2v2.75h-2zM812 453.3h2v2.75h-2zM214 456.0h2v2.75h-2zM218 456.0h2v2.75h-2zM242 456.0h2v2.75h-2zM300 456.0h6v2.75h-6zM322 456.0h2v2.75h-2zM328 456.0h2v2.75h-2zM356 456.0h4v2.75h-4zM362 456.0h4v2.75h-4zM370 456.0h2v2.75h-2zM380 456.0h2v2.75h-2zM386 456.0h10v2.75h-10zM414 456.0h4v2.75h-4zM420 456.0h4v2.75h-4zM430 456.0h2v2.75h-2zM436 456.0h6v2.75h-6zM452 456.0h2v2.75h-2zM460 456.0h2v2.75h-2zM466 456.0h2v2.75h-2zM470 456.0h2v2.75h-2zM474 456.0h14v2.75h-14zM490 456.0h8v2.75h-8zM502 456.0h2v2.75h-2zM512 456.0h16v2.75h-16zM538 456.0h6v2.75h-6zM546 456.0h2v2.75h-2zM554 456.0h2v2.75h-2zM558 456.0h4v2.75h-4zM564 456.0h2v2.75h-2zM568 456.0h4v2.75h-4zM586 456.0h8v2.75h-8zM600 456.0h6v2.75h-6zM608 456.0h12v2.75h-12zM624 456.0h2v2.75h-2zM630 456.0h14v2.75h-14zM646 456.0h4v2.75h-4zM654 456.0h20v2.75h-20zM686 456.0h2v2.75h-2zM694 456.0h2v2.75h-2zM700 456.0h2v2.75h-2zM752 456.0h2v2.75h-2zM756 456.0h4v2.75h-4zM782 456.0h2v2.75h-2zM808 456.0h2v2.75h-2zM812 456.0h2v2.75h-2zM298 458.7h4v2.75h-4zM330 458.7h2v2.75h-2zM334 458.7h2v2.75h-2zM358 458.7h4v2.75h-4zM364 458.7h4v2.75h-4zM384 458.7h10v2.75h-10zM396 458.7h2v2.75h-2zM410 458.7h2v2.75h-2zM414 458.7h4v2.75h-4zM422 458.7h2v2.75h-2zM430 458.7h2v2.75h-2zM436 458.7h6v2.75h-6zM444 458.7h2v2.75h-2zM448 458.7h2v2.75h-2zM452 458.7h4v2.75h-4zM462 458.7h2v2.75h-2zM466 458.7h2v2.75h-2zM470 458.7h2v2.75h-2zM476 458.7h6v2.75h-6zM484 458.7h6v2.75h-6zM492 458.7h4v2.75h-4zM498 458.7h2v2.75h-2zM504 458.7h28v2.75h-28zM534 458.7h2v2.75h-2zM538 458.7h6v2.75h-6zM556 458.7h8v2.75h-8zM566 458.7h6v2.75h-6zM584 458.7h12v2.75h-12zM598 458.7h24v2.75h-24zM628 458.7h10v2.75h-10zM640 458.7h10v2.75h-10zM656 458.7h2v2.75h-2zM660 458.7h10v2.75h-10zM672 458.7h4v2.75h-4zM718 458.7h2v2.75h-2zM752 458.7h2v2.75h-2zM756 458.7h2v2.75h-2zM760 458.7h2v2.75h-2zM780 458.7h4v2.75h-4zM786 458.7h2v2.75h-2zM812 458.7h2v2.75h-2zM816 458.7h2v2.75h-2zM304 461.4h2v2.75h-2zM324 461.4h2v2.75h-2zM328 461.4h2v2.75h-2zM354 461.4h2v2.75h-2zM360 461.4h6v2.75h-6zM380 461.4h2v2.75h-2zM388 461.4h4v2.75h-4zM394 461.4h4v2.75h-4zM408 461.4h8v2.75h-8zM420 461.4h2v2.75h-2zM424 461.4h2v2.75h-2zM428 461.4h4v2.75h-4zM434 461.4h2v2.75h-2zM438 461.4h8v2.75h-8zM448 461.4h6v2.75h-6zM456 461.4h2v2.75h-2zM464 461.4h10v2.75h-10zM476 461.4h26v2.75h-26zM506 461.4h2v2.75h-2zM512 461.4h16v2.75h-16zM534 461.4h10v2.75h-10zM558 461.4h14v2.75h-14zM574 461.4h2v2.75h-2zM584 461.4h22v2.75h-22zM608 461.4h10v2.75h-10zM632 461.4h6v2.75h-6zM640 461.4h12v2.75h-12zM656 461.4h2v2.75h-2zM660 461.4h12v2.75h-12zM688 461.4h2v2.75h-2zM700 461.4h2v2.75h-2zM760 461.4h2v2.75h-2zM776 461.4h10v2.75h-10zM790 461.4h2v2.75h-2zM898 461.4h2v2.75h-2zM218 464.1h2v2.75h-2zM294 464.1h2v2.75h-2zM326 464.1h10v2.75h-10zM352 464.1h12v2.75h-12zM384 464.1h12v2.75h-12zM410 464.1h16v2.75h-16zM428 464.1h4v2.75h-4zM434 464.1h4v2.75h-4zM442 464.1h2v2.75h-2zM450 464.1h6v2.75h-6zM458 464.1h2v2.75h-2zM466 464.1h4v2.75h-4zM472 464.1h2v2.75h-2zM478 464.1h12v2.75h-12zM492 464.1h4v2.75h-4zM504 464.1h2v2.75h-2zM510 464.1h22v2.75h-22zM536 464.1h6v2.75h-6zM544 464.1h2v2.75h-2zM558 464.1h16v2.75h-16zM586 464.1h6v2.75h-6zM598 464.1h2v2.75h-2zM602 464.1h4v2.75h-4zM608 464.1h12v2.75h-12zM624 464.1h4v2.75h-4zM632 464.1h4v2.75h-4zM638 464.1h4v2.75h-4zM644 464.1h2v2.75h-2zM648 464.1h4v2.75h-4zM656 464.1h6v2.75h-6zM664 464.1h10v2.75h-10zM678 464.1h2v2.75h-2zM718 464.1h2v2.75h-2zM748 464.1h2v2.75h-2zM756 464.1h2v2.75h-2zM780 464.1h2v2.75h-2zM810 464.1h4v2.75h-4zM302 466.8h2v2.75h-2zM306 466.8h2v2.75h-2zM326 466.8h4v2.75h-4zM332 466.8h6v2.75h-6zM354 466.8h14v2.75h-14zM384 466.8h8v2.75h-8zM410 466.8h2v2.75h-2zM414 466.8h4v2.75h-4zM420 466.8h2v2.75h-2zM428 466.8h4v2.75h-4zM434 466.8h2v2.75h-2zM440 466.8h6v2.75h-6zM448 466.8h2v2.75h-2zM452 466.8h2v2.75h-2zM456 466.8h2v2.75h-2zM460 466.8h4v2.75h-4zM466 466.8h6v2.75h-6zM474 466.8h10v2.75h-10zM486 466.8h8v2.75h-8zM496 466.8h6v2.75h-6zM504 466.8h4v2.75h-4zM514 466.8h8v2.75h-8zM524 466.8h4v2.75h-4zM534 466.8h10v2.75h-10zM558 466.8h14v2.75h-14zM586 466.8h2v2.75h-2zM592 466.8h14v2.75h-14zM610 466.8h2v2.75h-2zM614 466.8h2v2.75h-2zM618 466.8h6v2.75h-6zM626 466.8h4v2.75h-4zM632 466.8h4v2.75h-4zM640 466.8h10v2.75h-10zM658 466.8h20v2.75h-20zM750 466.8h2v2.75h-2zM754 466.8h2v2.75h-2zM758 466.8h2v2.75h-2zM778 466.8h12v2.75h-12zM806 466.8h2v2.75h-2zM300 469.5h2v2.75h-2zM322 469.5h4v2.75h-4zM328 469.5h2v2.75h-2zM334 469.5h4v2.75h-4zM358 469.5h4v2.75h-4zM366 469.5h2v2.75h-2zM374 469.5h2v2.75h-2zM386 469.5h10v2.75h-10zM412 469.5h4v2.75h-4zM418 469.5h8v2.75h-8zM428 469.5h16v2.75h-16zM446 469.5h2v2.75h-2zM452 469.5h2v2.75h-2zM456 469.5h2v2.75h-2zM464 469.5h6v2.75h-6zM472 469.5h4v2.75h-4zM478 469.5h2v2.75h-2zM482 469.5h20v2.75h-20zM512 469.5h18v2.75h-18zM534 469.5h2v2.75h-2zM540 469.5h2v2.75h-2zM544 469.5h4v2.75h-4zM554 469.5h2v2.75h-2zM558 469.5h14v2.75h-14zM586 469.5h6v2.75h-6zM594 469.5h2v2.75h-2zM600 469.5h6v2.75h-6zM614 469.5h8v2.75h-8zM628 469.5h10v2.75h-10zM644 469.5h18v2.75h-18zM664 469.5h10v2.75h-10zM676 469.5h2v2.75h-2zM752 469.5h4v2.75h-4zM784 469.5h2v2.75h-2zM812 469.5h2v2.75h-2zM294 472.2h2v2.75h-2zM298 472.2h4v2.75h-4zM326 472.2h2v2.75h-2zM330 472.2h2v2.75h-2zM354 472.2h2v2.75h-2zM358 472.2h2v2.75h-2zM364 472.2h6v2.75h-6zM378 472.2h2v2.75h-2zM382 472.2h14v2.75h-14zM412 472.2h14v2.75h-14zM434 472.2h22v2.75h-22zM468 472.2h2v2.75h-2zM472 472.2h8v2.75h-8zM482 472.2h22v2.75h-22zM508 472.2h2v2.75h-2zM512 472.2h16v2.75h-16zM536 472.2h8v2.75h-8zM558 472.2h4v2.75h-4zM564 472.2h10v2.75h-10zM586 472.2h6v2.75h-6zM594 472.2h2v2.75h-2zM600 472.2h6v2.75h-6zM610 472.2h2v2.75h-2zM614 472.2h4v2.75h-4zM624 472.2h4v2.75h-4zM630 472.2h2v2.75h-2zM634 472.2h2v2.75h-2zM640 472.2h4v2.75h-4zM648 472.2h28v2.75h-28zM694 472.2h2v2.75h-2zM724 472.2h4v2.75h-4zM752 472.2h4v2.75h-4zM758 472.2h2v2.75h-2zM782 472.2h2v2.75h-2zM786 472.2h2v2.75h-2zM812 472.2h2v2.75h-2zM816 472.2h2v2.75h-2zM296 474.9h2v2.75h-2zM322 474.9h8v2.75h-8zM332 474.9h4v2.75h-4zM354 474.9h14v2.75h-14zM384 474.9h2v2.75h-2zM388 474.9h4v2.75h-4zM412 474.9h10v2.75h-10zM424 474.9h4v2.75h-4zM430 474.9h2v2.75h-2zM434 474.9h2v2.75h-2zM438 474.9h6v2.75h-6zM450 474.9h2v2.75h-2zM456 474.9h4v2.75h-4zM466 474.9h2v2.75h-2zM470 474.9h2v2.75h-2zM474 474.9h14v2.75h-14zM490 474.9h6v2.75h-6zM498 474.9h4v2.75h-4zM506 474.9h2v2.75h-2zM510 474.9h2v2.75h-2zM514 474.9h14v2.75h-14zM536 474.9h8v2.75h-8zM556 474.9h16v2.75h-16zM584 474.9h8v2.75h-8zM594 474.9h8v2.75h-8zM606 474.9h2v2.75h-2zM612 474.9h10v2.75h-10zM624 474.9h2v2.75h-2zM628 474.9h8v2.75h-8zM644 474.9h2v2.75h-2zM648 474.9h2v2.75h-2zM654 474.9h2v2.75h-2zM658 474.9h16v2.75h-16zM676 474.9h4v2.75h-4zM692 474.9h2v2.75h-2zM724 474.9h2v2.75h-2zM728 474.9h2v2.75h-2zM752 474.9h2v2.75h-2zM756 474.9h4v2.75h-4zM782 474.9h4v2.75h-4zM810 474.9h4v2.75h-4zM124 477.6h2v2.75h-2zM218 477.6h2v2.75h-2zM242 477.6h2v2.75h-2zM298 477.6h2v2.75h-2zM324 477.6h4v2.75h-4zM330 477.6h4v2.75h-4zM336 477.6h2v2.75h-2zM354 477.6h8v2.75h-8zM364 477.6h4v2.75h-4zM382 477.6h2v2.75h-2zM386 477.6h8v2.75h-8zM400 477.6h2v2.75h-2zM410 477.6h4v2.75h-4zM416 477.6h8v2.75h-8zM436 477.6h4v2.75h-4zM442 477.6h2v2.75h-2zM446 477.6h2v2.75h-2zM456 477.6h6v2.75h-6zM466 477.6h4v2.75h-4zM472 477.6h4v2.75h-4zM478 477.6h14v2.75h-14zM494 477.6h4v2.75h-4zM506 477.6h2v2.75h-2zM514 477.6h6v2.75h-6zM524 477.6h4v2.75h-4zM532 477.6h2v2.75h-2zM538 477.6h4v2.75h-4zM556 477.6h16v2.75h-16zM574 477.6h2v2.75h-2zM588 477.6h4v2.75h-4zM594 477.6h4v2.75h-4zM602 477.6h16v2.75h-16zM620 477.6h2v2.75h-2zM632 477.6h4v2.75h-4zM638 477.6h4v2.75h-4zM644 477.6h8v2.75h-8zM658 477.6h14v2.75h-14zM724 477.6h2v2.75h-2zM752 477.6h2v2.75h-2zM756 477.6h4v2.75h-4zM780 477.6h2v2.75h-2zM812 477.6h2v2.75h-2zM216 480.3h2v2.75h-2zM244 480.3h2v2.75h-2zM298 480.3h4v2.75h-4zM322 480.3h4v2.75h-4zM330 480.3h4v2.75h-4zM336 480.3h2v2.75h-2zM352 480.3h4v2.75h-4zM360 480.3h8v2.75h-8zM386 480.3h2v2.75h-2zM390 480.3h2v2.75h-2zM410 480.3h6v2.75h-6zM418 480.3h2v2.75h-2zM426 480.3h2v2.75h-2zM434 480.3h8v2.75h-8zM444 480.3h2v2.75h-2zM448 480.3h2v2.75h-2zM458 480.3h4v2.75h-4zM466 480.3h2v2.75h-2zM470 480.3h2v2.75h-2zM474 480.3h4v2.75h-4zM480 480.3h4v2.75h-4zM486 480.3h2v2.75h-2zM492 480.3h4v2.75h-4zM498 480.3h4v2.75h-4zM508 480.3h10v2.75h-10zM520 480.3h6v2.75h-6zM532 480.3h12v2.75h-12zM556 480.3h16v2.75h-16zM588 480.3h20v2.75h-20zM610 480.3h4v2.75h-4zM616 480.3h2v2.75h-2zM620 480.3h2v2.75h-2zM628 480.3h4v2.75h-4zM640 480.3h10v2.75h-10zM652 480.3h2v2.75h-2zM658 480.3h18v2.75h-18zM680 480.3h2v2.75h-2zM754 480.3h2v2.75h-2zM780 480.3h4v2.75h-4zM798 480.3h2v2.75h-2zM808 480.3h2v2.75h-2zM812 480.3h2v2.75h-2zM990 480.3h2v2.75h-2zM296 483.0h2v2.75h-2zM300 483.0h4v2.75h-4zM326 483.0h2v2.75h-2zM330 483.0h2v2.75h-2zM336 483.0h2v2.75h-2zM352 483.0h4v2.75h-4zM358 483.0h8v2.75h-8zM384 483.0h10v2.75h-10zM408 483.0h8v2.75h-8zM420 483.0h10v2.75h-10zM432 483.0h2v2.75h-2zM436 483.0h4v2.75h-4zM442 483.0h2v2.75h-2zM454 483.0h6v2.75h-6zM462 483.0h8v2.75h-8zM480 483.0h10v2.75h-10zM492 483.0h6v2.75h-6zM500 483.0h4v2.75h-4zM508 483.0h4v2.75h-4zM514 483.0h14v2.75h-14zM532 483.0h12v2.75h-12zM558 483.0h12v2.75h-12zM588 483.0h4v2.75h-4zM594 483.0h2v2.75h-2zM600 483.0h6v2.75h-6zM610 483.0h2v2.75h-2zM614 483.0h8v2.75h-8zM624 483.0h14v2.75h-14zM640 483.0h8v2.75h-8zM650 483.0h4v2.75h-4zM658 483.0h18v2.75h-18zM678 483.0h2v2.75h-2zM686 483.0h2v2.75h-2zM692 483.0h2v2.75h-2zM752 483.0h2v2.75h-2zM756 483.0h4v2.75h-4zM778 483.0h12v2.75h-12zM218 485.7h2v2.75h-2zM304 485.7h2v2.75h-2zM326 485.7h2v2.75h-2zM334 485.7h4v2.75h-4zM358 485.7h2v2.75h-2zM362 485.7h4v2.75h-4zM380 485.7h4v2.75h-4zM388 485.7h2v2.75h-2zM394 485.7h2v2.75h-2zM406 485.7h2v2.75h-2zM410 485.7h4v2.75h-4zM418 485.7h4v2.75h-4zM428 485.7h4v2.75h-4zM436 485.7h8v2.75h-8zM446 485.7h6v2.75h-6zM456 485.7h2v2.75h-2zM472 485.7h14v2.75h-14zM490 485.7h12v2.75h-12zM506 485.7h2v2.75h-2zM512 485.7h10v2.75h-10zM526 485.7h2v2.75h-2zM532 485.7h2v2.75h-2zM536 485.7h8v2.75h-8zM560 485.7h4v2.75h-4zM566 485.7h8v2.75h-8zM586 485.7h6v2.75h-6zM594 485.7h2v2.75h-2zM602 485.7h4v2.75h-4zM608 485.7h4v2.75h-4zM614 485.7h10v2.75h-10zM626 485.7h10v2.75h-10zM640 485.7h10v2.75h-10zM656 485.7h14v2.75h-14zM672 485.7h4v2.75h-4zM680 485.7h2v2.75h-2zM692 485.7h2v2.75h-2zM752 485.7h2v2.75h-2zM756 485.7h2v2.75h-2zM778 485.7h8v2.75h-8zM808 485.7h2v2.75h-2zM812 485.7h2v2.75h-2zM818 485.7h2v2.75h-2zM926 485.7h2v2.75h-2zM130 488.4h2v2.75h-2zM156 488.4h2v2.75h-2zM218 488.4h2v2.75h-2zM242 488.4h2v2.75h-2zM300 488.4h4v2.75h-4zM326 488.4h2v2.75h-2zM330 488.4h6v2.75h-6zM354 488.4h8v2.75h-8zM366 488.4h2v2.75h-2zM378 488.4h2v2.75h-2zM386 488.4h8v2.75h-8zM396 488.4h2v2.75h-2zM412 488.4h6v2.75h-6zM420 488.4h4v2.75h-4zM428 488.4h2v2.75h-2zM436 488.4h4v2.75h-4zM448 488.4h6v2.75h-6zM458 488.4h4v2.75h-4zM470 488.4h6v2.75h-6zM478 488.4h16v2.75h-16zM496 488.4h4v2.75h-4zM502 488.4h4v2.75h-4zM508 488.4h2v2.75h-2zM514 488.4h8v2.75h-8zM524 488.4h4v2.75h-4zM536 488.4h8v2.75h-8zM548 488.4h2v2.75h-2zM556 488.4h12v2.75h-12zM570 488.4h2v2.75h-2zM586 488.4h10v2.75h-10zM598 488.4h14v2.75h-14zM616 488.4h2v2.75h-2zM620 488.4h6v2.75h-6zM630 488.4h6v2.75h-6zM638 488.4h10v2.75h-10zM650 488.4h24v2.75h-24zM720 488.4h2v2.75h-2zM754 488.4h2v2.75h-2zM758 488.4h2v2.75h-2zM776 488.4h2v2.75h-2zM780 488.4h2v2.75h-2zM806 488.4h2v2.75h-2zM1016 488.4h2v2.75h-2zM332 491.1h6v2.75h-6zM354 491.1h4v2.75h-4zM364 491.1h2v2.75h-2zM388 491.1h4v2.75h-4zM394 491.1h2v2.75h-2zM416 491.1h4v2.75h-4zM446 491.1h2v2.75h-2zM476 491.1h2v2.75h-2zM486 491.1h2v2.75h-2zM494 491.1h4v2.75h-4zM500 491.1h2v2.75h-2zM510 491.1h2v2.75h-2zM520 491.1h2v2.75h-2zM536 491.1h4v2.75h-4zM560 491.1h2v2.75h-2zM564 491.1h4v2.75h-4zM586 491.1h6v2.75h-6zM598 491.1h2v2.75h-2zM632 491.1h2v2.75h-2zM652 491.1h2v2.75h-2zM656 491.1h2v2.75h-2zM660 491.1h4v2.75h-4zM668 491.1h2v2.75h-2zM688 491.1h2v2.75h-2zM778 491.1h2v2.75h-2zM784 491.1h2v2.75h-2zM808 491.1h2v2.75h-2z"/>
<path fill="#5f05cf" d="M126 453.3h8v2.75h-8zM152 453.3h4v2.75h-4zM158 453.3h6v2.75h-6zM184 453.3h2v2.75h-2zM212 453.3h4v2.75h-4zM218 453.3h4v2.75h-4zM242 453.3h4v2.75h-4zM268 453.3h2v2.75h-2zM272 453.3h2v2.75h-2zM276 453.3h4v2.75h-4zM282 453.3h2v2.75h-2zM294 453.3h2v2.75h-2zM302 453.3h6v2.75h-6zM320 453.3h4v2.75h-4zM326 453.3h2v2.75h-2zM330 453.3h2v2.75h-2zM334 453.3h2v2.75h-2zM338 453.3h2v2.75h-2zM350 453.3h6v2.75h-6zM358 453.3h2v2.75h-2zM362 453.3h4v2.75h-4zM368 453.3h6v2.75h-6zM376 453.3h2v2.75h-2zM380 453.3h2v2.75h-2zM384 453.3h2v2.75h-2zM396 453.3h4v2.75h-4zM408 453.3h2v2.75h-2zM426 453.3h2v2.75h-2zM430 453.3h2v2.75h-2zM438 453.3h2v2.75h-2zM486 453.3h4v2.75h-4zM544 453.3h8v2.75h-8zM554 453.3h4v2.75h-4zM572 453.3h14v2.75h-14zM608 453.3h2v2.75h-2zM636 453.3h2v2.75h-2zM122 456.0h10v2.75h-10zM134 456.0h4v2.75h-4zM148 456.0h2v2.75h-2zM152 456.0h10v2.75h-10zM184 456.0h2v2.75h-2zM216 456.0h2v2.75h-2zM220 456.0h2v2.75h-2zM236 456.0h2v2.75h-2zM244 456.0h2v2.75h-2zM268 456.0h12v2.75h-12zM282 456.0h2v2.75h-2zM296 456.0h4v2.75h-4zM306 456.0h2v2.75h-2zM318 456.0h2v2.75h-2zM324 456.0h4v2.75h-4zM330 456.0h12v2.75h-12zM348 456.0h8v2.75h-8zM360 456.0h2v2.75h-2zM366 456.0h4v2.75h-4zM378 456.0h2v2.75h-2zM382 456.0h4v2.75h-4zM396 456.0h6v2.75h-6zM406 456.0h4v2.75h-4zM426 456.0h4v2.75h-4zM432 456.0h4v2.75h-4zM488 456.0h2v2.75h-2zM544 456.0h2v2.75h-2zM548 456.0h6v2.75h-6zM556 456.0h2v2.75h-2zM572 456.0h14v2.75h-14zM606 456.0h2v2.75h-2zM124 458.7h4v2.75h-4zM130 458.7h2v2.75h-2zM150 458.7h12v2.75h-12zM184 458.7h2v2.75h-2zM210 458.7h2v2.75h-2zM214 458.7h8v2.75h-8zM236 458.7h16v2.75h-16zM276 458.7h4v2.75h-4zM292 458.7h6v2.75h-6zM302 458.7h6v2.75h-6zM320 458.7h10v2.75h-10zM332 458.7h2v2.75h-2zM336 458.7h2v2.75h-2zM342 458.7h2v2.75h-2zM352 458.7h6v2.75h-6zM376 458.7h4v2.75h-4zM382 458.7h2v2.75h-2zM394 458.7h2v2.75h-2zM398 458.7h2v2.75h-2zM406 458.7h4v2.75h-4zM412 458.7h2v2.75h-2zM426 458.7h4v2.75h-4zM432 458.7h2v2.75h-2zM490 458.7h2v2.75h-2zM544 458.7h12v2.75h-12zM572 458.7h6v2.75h-6zM580 458.7h4v2.75h-4zM638 458.7h2v2.75h-2zM120 461.4h2v2.75h-2zM126 461.4h8v2.75h-8zM150 461.4h12v2.75h-12zM182 461.4h4v2.75h-4zM208 461.4h2v2.75h-2zM212 461.4h6v2.75h-6zM220 461.4h2v2.75h-2zM236 461.4h4v2.75h-4zM242 461.4h4v2.75h-4zM270 461.4h2v2.75h-2zM274 461.4h2v2.75h-2zM294 461.4h2v2.75h-2zM298 461.4h6v2.75h-6zM306 461.4h4v2.75h-4zM322 461.4h2v2.75h-2zM326 461.4h2v2.75h-2zM330 461.4h8v2.75h-8zM340 461.4h2v2.75h-2zM348 461.4h2v2.75h-2zM352 461.4h2v2.75h-2zM356 461.4h4v2.75h-4zM368 461.4h4v2.75h-4zM374 461.4h2v2.75h-2zM378 461.4h2v2.75h-2zM382 461.4h6v2.75h-6zM392 461.4h2v2.75h-2zM398 461.4h2v2.75h-2zM404 461.4h2v2.75h-2zM426 461.4h2v2.75h-2zM432 461.4h2v2.75h-2zM436 461.4h2v2.75h-2zM544 461.4h4v2.75h-4zM552 461.4h6v2.75h-6zM572 461.4h2v2.75h-2zM576 461.4h6v2.75h-6zM606 461.4h2v2.75h-2zM638 461.4h2v2.75h-2zM124 464.1h6v2.75h-6zM150 464.1h2v2.75h-2zM154 464.1h4v2.75h-4zM160 464.1h2v2.75h-2zM182 464.1h4v2.75h-4zM214 464.1h4v2.75h-4zM220 464.1h4v2.75h-4zM238 464.1h6v2.75h-6zM246 464.1h4v2.75h-4zM268 464.1h12v2.75h-12zM296 464.1h10v2.75h-10zM318 464.1h2v2.75h-2zM322 464.1h4v2.75h-4zM336 464.1h4v2.75h-4zM350 464.1h2v2.75h-2zM364 464.1h14v2.75h-14zM380 464.1h4v2.75h-4zM396 464.1h4v2.75h-4zM402 464.1h2v2.75h-2zM406 464.1h4v2.75h-4zM426 464.1h2v2.75h-2zM438 464.1h2v2.75h-2zM444 464.1h2v2.75h-2zM490 464.1h2v2.75h-2zM542 464.1h2v2.75h-2zM546 464.1h12v2.75h-12zM574 464.1h12v2.75h-12zM600 464.1h2v2.75h-2zM606 464.1h2v2.75h-2zM636 464.1h2v2.75h-2zM642 464.1h2v2.75h-2zM662 464.1h2v2.75h-2zM120 466.8h2v2.75h-2zM124 466.8h10v2.75h-10zM154 466.8h8v2.75h-8zM182 466.8h4v2.75h-4zM210 466.8h2v2.75h-2zM214 466.8h8v2.75h-8zM236 466.8h4v2.75h-4zM242 466.8h4v2.75h-4zM270 466.8h8v2.75h-8zM280 466.8h2v2.75h-2zM292 466.8h10v2.75h-10zM304 466.8h2v2.75h-2zM310 466.8h2v2.75h-2zM322 466.8h4v2.75h-4zM330 466.8h2v2.75h-2zM338 466.8h4v2.75h-4zM346 466.8h2v2.75h-2zM350 466.8h4v2.75h-4zM368 466.8h6v2.75h-6zM376 466.8h2v2.75h-2zM380 466.8h4v2.75h-4zM392 466.8h12v2.75h-12zM406 466.8h4v2.75h-4zM412 466.8h2v2.75h-2zM426 466.8h2v2.75h-2zM432 466.8h2v2.75h-2zM436 466.8h4v2.75h-4zM484 466.8h2v2.75h-2zM544 466.8h14v2.75h-14zM572 466.8h4v2.75h-4zM578 466.8h8v2.75h-8zM588 466.8h2v2.75h-2zM606 466.8h4v2.75h-4zM612 466.8h2v2.75h-2zM636 466.8h2v2.75h-2zM122 469.5h10v2.75h-10zM152 469.5h2v2.75h-2zM156 469.5h4v2.75h-4zM162 469.5h2v2.75h-2zM184 469.5h2v2.75h-2zM188 469.5h2v2.75h-2zM208 469.5h2v2.75h-2zM214 469.5h10v2.75h-10zM238 469.5h8v2.75h-8zM248 469.5h2v2.75h-2zM270 469.5h8v2.75h-8zM288 469.5h2v2.75h-2zM292 469.5h8v2.75h-8zM302 469.5h8v2.75h-8zM312 469.5h2v2.75h-2zM326 469.5h2v2.75h-2zM330 469.5h4v2.75h-4zM338 469.5h4v2.75h-4zM346 469.5h2v2.75h-2zM350 469.5h6v2.75h-6zM362 469.5h4v2.75h-4zM368 469.5h6v2.75h-6zM380 469.5h6v2.75h-6zM396 469.5h4v2.75h-4zM406 469.5h6v2.75h-6zM426 469.5h2v2.75h-2zM542 469.5h2v2.75h-2zM548 469.5h2v2.75h-2zM552 469.5h2v2.75h-2zM556 469.5h2v2.75h-2zM572 469.5h14v2.75h-14zM606 469.5h8v2.75h-8zM638 469.5h6v2.75h-6zM662 469.5h2v2.75h-2zM122 472.2h2v2.75h-2zM126 472.2h8v2.75h-8zM150 472.2h12v2.75h-12zM212 472.2h10v2.75h-10zM236 472.2h12v2.75h-12zM250 472.2h2v2.75h-2zM268 472.2h10v2.75h-10zM288 472.2h2v2.75h-2zM296 472.2h2v2.75h-2zM302 472.2h6v2.75h-6zM320 472.2h6v2.75h-6zM328 472.2h2v2.75h-2zM332 472.2h10v2.75h-10zM350 472.2h4v2.75h-4zM356 472.2h2v2.75h-2zM360 472.2h4v2.75h-4zM370 472.2h2v2.75h-2zM374 472.2h4v2.75h-4zM396 472.2h2v2.75h-2zM400 472.2h6v2.75h-6zM408 472.2h4v2.75h-4zM426 472.2h8v2.75h-8zM544 472.2h14v2.75h-14zM574 472.2h12v2.75h-12zM606 472.2h4v2.75h-4zM612 472.2h2v2.75h-2zM632 472.2h2v2.75h-2zM636 472.2h4v2.75h-4zM644 472.2h2v2.75h-2zM122 474.9h12v2.75h-12zM148 474.9h2v2.75h-2zM152 474.9h10v2.75h-10zM186 474.9h2v2.75h-2zM190 474.9h2v2.75h-2zM212 474.9h6v2.75h-6zM220 474.9h4v2.75h-4zM236 474.9h4v2.75h-4zM242 474.9h8v2.75h-8zM270 474.9h10v2.75h-10zM288 474.9h2v2.75h-2zM294 474.9h2v2.75h-2zM298 474.9h14v2.75h-14zM320 474.9h2v2.75h-2zM330 474.9h2v2.75h-2zM336 474.9h4v2.75h-4zM348 474.9h6v2.75h-6zM368 474.9h6v2.75h-6zM382 474.9h2v2.75h-2zM392 474.9h10v2.75h-10zM406 474.9h2v2.75h-2zM410 474.9h2v2.75h-2zM428 474.9h2v2.75h-2zM432 474.9h2v2.75h-2zM436 474.9h2v2.75h-2zM488 474.9h2v2.75h-2zM544 474.9h12v2.75h-12zM572 474.9h6v2.75h-6zM580 474.9h4v2.75h-4zM608 474.9h4v2.75h-4zM636 474.9h8v2.75h-8zM122 477.6h2v2.75h-2zM126 477.6h8v2.75h-8zM150 477.6h2v2.75h-2zM154 477.6h6v2.75h-6zM182 477.6h6v2.75h-6zM210 477.6h8v2.75h-8zM220 477.6h2v2.75h-2zM238 477.6h4v2.75h-4zM244 477.6h2v2.75h-2zM268 477.6h2v2.75h-2zM272 477.6h6v2.75h-6zM280 477.6h2v2.75h-2zM290 477.6h2v2.75h-2zM294 477.6h4v2.75h-4zM300 477.6h12v2.75h-12zM320 477.6h4v2.75h-4zM328 477.6h2v2.75h-2zM334 477.6h2v2.75h-2zM338 477.6h4v2.75h-4zM352 477.6h2v2.75h-2zM362 477.6h2v2.75h-2zM368 477.6h4v2.75h-4zM376 477.6h6v2.75h-6zM384 477.6h2v2.75h-2zM394 477.6h4v2.75h-4zM406 477.6h2v2.75h-2zM426 477.6h6v2.75h-6zM434 477.6h2v2.75h-2zM492 477.6h2v2.75h-2zM542 477.6h14v2.75h-14zM572 477.6h2v2.75h-2zM576 477.6h12v2.75h-12zM636 477.6h2v2.75h-2zM124 480.3h8v2.75h-8zM152 480.3h2v2.75h-2zM156 480.3h4v2.75h-4zM182 480.3h2v2.75h-2zM212 480.3h4v2.75h-4zM218 480.3h4v2.75h-4zM224 480.3h2v2.75h-2zM236 480.3h4v2.75h-4zM242 480.3h2v2.75h-2zM246 480.3h4v2.75h-4zM272 480.3h4v2.75h-4zM280 480.3h2v2.75h-2zM294 480.3h4v2.75h-4zM302 480.3h6v2.75h-6zM328 480.3h2v2.75h-2zM334 480.3h2v2.75h-2zM338 480.3h2v2.75h-2zM348 480.3h4v2.75h-4zM356 480.3h2v2.75h-2zM368 480.3h4v2.75h-4zM374 480.3h12v2.75h-12zM388 480.3h2v2.75h-2zM394 480.3h6v2.75h-6zM408 480.3h2v2.75h-2zM428 480.3h4v2.75h-4zM484 480.3h2v2.75h-2zM488 480.3h4v2.75h-4zM544 480.3h12v2.75h-12zM572 480.3h16v2.75h-16zM608 480.3h2v2.75h-2zM634 480.3h6v2.75h-6zM126 483.0h8v2.75h-8zM152 483.0h10v2.75h-10zM178 483.0h6v2.75h-6zM210 483.0h12v2.75h-12zM238 483.0h2v2.75h-2zM242 483.0h6v2.75h-6zM270 483.0h10v2.75h-10zM294 483.0h2v2.75h-2zM298 483.0h2v2.75h-2zM304 483.0h4v2.75h-4zM320 483.0h2v2.75h-2zM324 483.0h2v2.75h-2zM328 483.0h2v2.75h-2zM334 483.0h2v2.75h-2zM346 483.0h6v2.75h-6zM366 483.0h18v2.75h-18zM394 483.0h8v2.75h-8zM406 483.0h2v2.75h-2zM430 483.0h2v2.75h-2zM434 483.0h2v2.75h-2zM544 483.0h14v2.75h-14zM570 483.0h6v2.75h-6zM580 483.0h8v2.75h-8zM606 483.0h4v2.75h-4zM612 483.0h2v2.75h-2zM638 483.0h2v2.75h-2zM124 485.7h10v2.75h-10zM150 485.7h8v2.75h-8zM182 485.7h2v2.75h-2zM208 485.7h10v2.75h-10zM236 485.7h14v2.75h-14zM268 485.7h12v2.75h-12zM292 485.7h2v2.75h-2zM296 485.7h8v2.75h-8zM306 485.7h2v2.75h-2zM322 485.7h4v2.75h-4zM328 485.7h6v2.75h-6zM338 485.7h4v2.75h-4zM348 485.7h2v2.75h-2zM352 485.7h6v2.75h-6zM360 485.7h2v2.75h-2zM366 485.7h6v2.75h-6zM374 485.7h6v2.75h-6zM384 485.7h4v2.75h-4zM392 485.7h2v2.75h-2zM396 485.7h6v2.75h-6zM408 485.7h2v2.75h-2zM426 485.7h2v2.75h-2zM432 485.7h4v2.75h-4zM486 485.7h4v2.75h-4zM544 485.7h16v2.75h-16zM574 485.7h12v2.75h-12zM606 485.7h2v2.75h-2zM612 485.7h2v2.75h-2zM636 485.7h4v2.75h-4zM104 488.4h2v2.75h-2zM128 488.4h2v2.75h-2zM132 488.4h2v2.75h-2zM146 488.4h6v2.75h-6zM154 488.4h2v2.75h-2zM188 488.4h2v2.75h-2zM212 488.4h6v2.75h-6zM220 488.4h2v2.75h-2zM238 488.4h2v2.75h-2zM244 488.4h2v2.75h-2zM274 488.4h2v2.75h-2zM294 488.4h6v2.75h-6zM304 488.4h4v2.75h-4zM322 488.4h4v2.75h-4zM328 488.4h2v2.75h-2zM336 488.4h8v2.75h-8zM350 488.4h4v2.75h-4zM362 488.4h4v2.75h-4zM368 488.4h2v2.75h-2zM372 488.4h6v2.75h-6zM380 488.4h2v2.75h-2zM384 488.4h2v2.75h-2zM394 488.4h2v2.75h-2zM398 488.4h4v2.75h-4zM404 488.4h2v2.75h-2zM408 488.4h4v2.75h-4zM418 488.4h2v2.75h-2zM426 488.4h2v2.75h-2zM430 488.4h6v2.75h-6zM494 488.4h2v2.75h-2zM544 488.4h4v2.75h-4zM550 488.4h6v2.75h-6zM568 488.4h2v2.75h-2zM572 488.4h14v2.75h-14zM612 488.4h4v2.75h-4zM636 488.4h2v2.75h-2zM126 491.1h2v2.75h-2zM132 491.1h2v2.75h-2zM154 491.1h2v2.75h-2zM182 491.1h2v2.75h-2zM212 491.1h2v2.75h-2zM244 491.1h6v2.75h-6zM274 491.1h2v2.75h-2zM302 491.1h10v2.75h-10zM324 491.1h2v2.75h-2zM338 491.1h4v2.75h-4zM346 491.1h2v2.75h-2zM368 491.1h4v2.75h-4zM382 491.1h4v2.75h-4zM396 491.1h2v2.75h-2zM424 491.1h2v2.75h-2zM514 491.1h2v2.75h-2zM546 491.1h2v2.75h-2zM550 491.1h2v2.75h-2zM556 491.1h4v2.75h-4zM576 491.1h2v2.75h-2zM584 491.1h2v2.75h-2zM638 491.1h2v2.75h-2z"/>
<path fill="#890abd" d="M104 453.3h4v2.75h-4zM118 453.3h8v2.75h-8zM134 453.3h2v2.75h-2zM138 453.3h2v2.75h-2zM148 453.3h4v2.75h-4zM164 453.3h2v2.75h-2zM168 453.3h2v2.75h-2zM178 453.3h6v2.75h-6zM186 453.3h2v2.75h-2zM190 453.3h2v2.75h-2zM206 453.3h6v2.75h-6zM216 453.3h2v2.75h-2zM222 453.3h4v2.75h-4zM228 453.3h2v2.75h-2zM236 453.3h6v2.75h-6zM246 453.3h6v2.75h-6zM264 453.3h4v2.75h-4zM270 453.3h2v2.75h-2zM274 453.3h2v2.75h-2zM280 453.3h2v2.75h-2zM284 453.3h10v2.75h-10zM308 453.3h6v2.75h-6zM318 453.3h2v2.75h-2zM340 453.3h10v2.75h-10zM374 453.3h2v2.75h-2zM378 453.3h2v2.75h-2zM400 453.3h2v2.75h-2zM404 453.3h4v2.75h-4zM432 453.3h2v2.75h-2zM638 453.3h2v2.75h-2zM104 456.0h2v2.75h-2zM118 456.0h4v2.75h-4zM132 456.0h2v2.75h-2zM144 456.0h2v2.75h-2zM150 456.0h2v2.75h-2zM162 456.0h4v2.75h-4zM176 456.0h8v2.75h-8zM186 456.0h2v2.75h-2zM190 456.0h2v2.75h-2zM208 456.0h6v2.75h-6zM222 456.0h6v2.75h-6zM232 456.0h2v2.75h-2zM238 456.0h4v2.75h-4zM246 456.0h4v2.75h-4zM252 456.0h2v2.75h-2zM264 456.0h2v2.75h-2zM280 456.0h2v2.75h-2zM284 456.0h6v2.75h-6zM292 456.0h4v2.75h-4zM308 456.0h6v2.75h-6zM316 456.0h2v2.75h-2zM320 456.0h2v2.75h-2zM342 456.0h6v2.75h-6zM372 456.0h2v2.75h-2zM376 456.0h2v2.75h-2zM402 456.0h4v2.75h-4zM120 458.7h4v2.75h-4zM128 458.7h2v2.75h-2zM132 458.7h4v2.75h-4zM138 458.7h2v2.75h-2zM144 458.7h2v2.75h-2zM148 458.7h2v2.75h-2zM162 458.7h8v2.75h-8zM178 458.7h6v2.75h-6zM186 458.7h6v2.75h-6zM208 458.7h2v2.75h-2zM212 458.7h2v2.75h-2zM224 458.7h4v2.75h-4zM232 458.7h4v2.75h-4zM264 458.7h12v2.75h-12zM280 458.7h2v2.75h-2zM284 458.7h8v2.75h-8zM308 458.7h6v2.75h-6zM318 458.7h2v2.75h-2zM338 458.7h4v2.75h-4zM344 458.7h8v2.75h-8zM368 458.7h8v2.75h-8zM380 458.7h2v2.75h-2zM400 458.7h6v2.75h-6zM578 458.7h2v2.75h-2zM104 461.4h2v2.75h-2zM122 461.4h4v2.75h-4zM134 461.4h4v2.75h-4zM148 461.4h2v2.75h-2zM162 461.4h4v2.75h-4zM174 461.4h8v2.75h-8zM186 461.4h2v2.75h-2zM210 461.4h2v2.75h-2zM218 461.4h2v2.75h-2zM222 461.4h6v2.75h-6zM234 461.4h2v2.75h-2zM240 461.4h2v2.75h-2zM246 461.4h6v2.75h-6zM264 461.4h6v2.75h-6zM272 461.4h2v2.75h-2zM276 461.4h8v2.75h-8zM286 461.4h8v2.75h-8zM296 461.4h2v2.75h-2zM310 461.4h4v2.75h-4zM318 461.4h4v2.75h-4zM338 461.4h2v2.75h-2zM342 461.4h6v2.75h-6zM350 461.4h2v2.75h-2zM372 461.4h2v2.75h-2zM376 461.4h2v2.75h-2zM400 461.4h4v2.75h-4zM548 461.4h4v2.75h-4zM582 461.4h2v2.75h-2zM106 464.1h2v2.75h-2zM120 464.1h4v2.75h-4zM130 464.1h6v2.75h-6zM138 464.1h2v2.75h-2zM142 464.1h2v2.75h-2zM148 464.1h2v2.75h-2zM152 464.1h2v2.75h-2zM158 464.1h2v2.75h-2zM162 464.1h6v2.75h-6zM178 464.1h4v2.75h-4zM186 464.1h6v2.75h-6zM206 464.1h8v2.75h-8zM224 464.1h4v2.75h-4zM232 464.1h2v2.75h-2zM236 464.1h2v2.75h-2zM244 464.1h2v2.75h-2zM252 464.1h2v2.75h-2zM280 464.1h14v2.75h-14zM306 464.1h6v2.75h-6zM314 464.1h4v2.75h-4zM320 464.1h2v2.75h-2zM340 464.1h10v2.75h-10zM378 464.1h2v2.75h-2zM400 464.1h2v2.75h-2zM404 464.1h2v2.75h-2zM432 464.1h2v2.75h-2zM104 466.8h2v2.75h-2zM114 466.8h2v2.75h-2zM118 466.8h2v2.75h-2zM122 466.8h2v2.75h-2zM134 466.8h4v2.75h-4zM140 466.8h2v2.75h-2zM144 466.8h2v2.75h-2zM148 466.8h6v2.75h-6zM162 466.8h4v2.75h-4zM172 466.8h2v2.75h-2zM176 466.8h2v2.75h-2zM180 466.8h2v2.75h-2zM186 466.8h4v2.75h-4zM208 466.8h2v2.75h-2zM212 466.8h2v2.75h-2zM222 466.8h4v2.75h-4zM232 466.8h2v2.75h-2zM240 466.8h2v2.75h-2zM246 466.8h6v2.75h-6zM264 466.8h6v2.75h-6zM278 466.8h2v2.75h-2zM282 466.8h10v2.75h-10zM308 466.8h2v2.75h-2zM312 466.8h2v2.75h-2zM316 466.8h6v2.75h-6zM342 466.8h4v2.75h-4zM348 466.8h2v2.75h-2zM374 466.8h2v2.75h-2zM378 466.8h2v2.75h-2zM404 466.8h2v2.75h-2zM576 466.8h2v2.75h-2zM638 466.8h2v2.75h-2zM104 469.5h2v2.75h-2zM118 469.5h2v2.75h-2zM132 469.5h4v2.75h-4zM138 469.5h2v2.75h-2zM144 469.5h2v2.75h-2zM148 469.5h4v2.75h-4zM154 469.5h2v2.75h-2zM160 469.5h2v2.75h-2zM176 469.5h8v2.75h-8zM186 469.5h2v2.75h-2zM190 469.5h2v2.75h-2zM206 469.5h2v2.75h-2zM210 469.5h4v2.75h-4zM224 469.5h2v2.75h-2zM234 469.5h4v2.75h-4zM246 469.5h2v2.75h-2zM250 469.5h2v2.75h-2zM264 469.5h6v2.75h-6zM278 469.5h6v2.75h-6zM286 469.5h2v2.75h-2zM290 469.5h2v2.75h-2zM310 469.5h2v2.75h-2zM316 469.5h6v2.75h-6zM342 469.5h4v2.75h-4zM348 469.5h2v2.75h-2zM376 469.5h4v2.75h-4zM400 469.5h6v2.75h-6zM550 469.5h2v2.75h-2zM104 472.2h4v2.75h-4zM116 472.2h6v2.75h-6zM124 472.2h2v2.75h-2zM134 472.2h4v2.75h-4zM144 472.2h6v2.75h-6zM162 472.2h6v2.75h-6zM178 472.2h14v2.75h-14zM206 472.2h6v2.75h-6zM222 472.2h6v2.75h-6zM230 472.2h4v2.75h-4zM248 472.2h2v2.75h-2zM262 472.2h2v2.75h-2zM266 472.2h2v2.75h-2zM278 472.2h8v2.75h-8zM292 472.2h2v2.75h-2zM308 472.2h6v2.75h-6zM316 472.2h2v2.75h-2zM342 472.2h8v2.75h-8zM372 472.2h2v2.75h-2zM380 472.2h2v2.75h-2zM398 472.2h2v2.75h-2zM406 472.2h2v2.75h-2zM134 474.9h2v2.75h-2zM142 474.9h2v2.75h-2zM150 474.9h2v2.75h-2zM162 474.9h2v2.75h-2zM176 474.9h2v2.75h-2zM180 474.9h6v2.75h-6zM188 474.9h2v2.75h-2zM208 474.9h4v2.75h-4zM218 474.9h2v2.75h-2zM224 474.9h2v2.75h-2zM234 474.9h2v2.75h-2zM240 474.9h2v2.75h-2zM250 474.9h4v2.75h-4zM258 474.9h2v2.75h-2zM262 474.9h8v2.75h-8zM280 474.9h2v2.75h-2zM290 474.9h4v2.75h-4zM312 474.9h2v2.75h-2zM316 474.9h4v2.75h-4zM340 474.9h8v2.75h-8zM374 474.9h8v2.75h-8zM402 474.9h4v2.75h-4zM408 474.9h2v2.75h-2zM578 474.9h2v2.75h-2zM104 477.6h2v2.75h-2zM118 477.6h4v2.75h-4zM134 477.6h4v2.75h-4zM146 477.6h4v2.75h-4zM152 477.6h2v2.75h-2zM160 477.6h4v2.75h-4zM176 477.6h6v2.75h-6zM188 477.6h4v2.75h-4zM208 477.6h2v2.75h-2zM222 477.6h2v2.75h-2zM226 477.6h2v2.75h-2zM232 477.6h6v2.75h-6zM246 477.6h6v2.75h-6zM264 477.6h4v2.75h-4zM270 477.6h2v2.75h-2zM278 477.6h2v2.75h-2zM282 477.6h8v2.75h-8zM292 477.6h2v2.75h-2zM312 477.6h4v2.75h-4zM342 477.6h2v2.75h-2zM346 477.6h6v2.75h-6zM372 477.6h4v2.75h-4zM398 477.6h2v2.75h-2zM402 477.6h4v2.75h-4zM408 477.6h2v2.75h-2zM432 477.6h2v2.75h-2zM104 480.3h4v2.75h-4zM116 480.3h2v2.75h-2zM120 480.3h4v2.75h-4zM132 480.3h4v2.75h-4zM138 480.3h2v2.75h-2zM142 480.3h10v2.75h-10zM154 480.3h2v2.75h-2zM160 480.3h4v2.75h-4zM166 480.3h4v2.75h-4zM174 480.3h8v2.75h-8zM184 480.3h8v2.75h-8zM208 480.3h4v2.75h-4zM222 480.3h2v2.75h-2zM226 480.3h2v2.75h-2zM230 480.3h2v2.75h-2zM240 480.3h2v2.75h-2zM250 480.3h2v2.75h-2zM264 480.3h8v2.75h-8zM276 480.3h4v2.75h-4zM282 480.3h12v2.75h-12zM308 480.3h6v2.75h-6zM316 480.3h6v2.75h-6zM340 480.3h8v2.75h-8zM372 480.3h2v2.75h-2zM400 480.3h2v2.75h-2zM404 480.3h4v2.75h-4zM432 480.3h2v2.75h-2zM120 483.0h6v2.75h-6zM134 483.0h6v2.75h-6zM146 483.0h6v2.75h-6zM162 483.0h2v2.75h-2zM170 483.0h2v2.75h-2zM176 483.0h2v2.75h-2zM184 483.0h8v2.75h-8zM222 483.0h6v2.75h-6zM236 483.0h2v2.75h-2zM240 483.0h2v2.75h-2zM248 483.0h2v2.75h-2zM252 483.0h2v2.75h-2zM266 483.0h4v2.75h-4zM280 483.0h14v2.75h-14zM308 483.0h6v2.75h-6zM316 483.0h4v2.75h-4zM322 483.0h2v2.75h-2zM338 483.0h8v2.75h-8zM402 483.0h4v2.75h-4zM576 483.0h4v2.75h-4zM104 485.7h2v2.75h-2zM118 485.7h6v2.75h-6zM134 485.7h6v2.75h-6zM142 485.7h2v2.75h-2zM158 485.7h4v2.75h-4zM166 485.7h2v2.75h-2zM172 485.7h2v2.75h-2zM176 485.7h6v2.75h-6zM184 485.7h6v2.75h-6zM192 485.7h2v2.75h-2zM204 485.7h4v2.75h-4zM220 485.7h8v2.75h-8zM230 485.7h2v2.75h-2zM250 485.7h6v2.75h-6zM280 485.7h12v2.75h-12zM294 485.7h2v2.75h-2zM308 485.7h6v2.75h-6zM316 485.7h6v2.75h-6zM342 485.7h6v2.75h-6zM350 485.7h2v2.75h-2zM372 485.7h2v2.75h-2zM402 485.7h4v2.75h-4zM118 488.4h10v2.75h-10zM134 488.4h4v2.75h-4zM142 488.4h2v2.75h-2zM152 488.4h2v2.75h-2zM158 488.4h10v2.75h-10zM178 488.4h10v2.75h-10zM190 488.4h2v2.75h-2zM206 488.4h6v2.75h-6zM222 488.4h4v2.75h-4zM234 488.4h4v2.75h-4zM240 488.4h2v2.75h-2zM246 488.4h4v2.75h-4zM254 488.4h4v2.75h-4zM266 488.4h8v2.75h-8zM276 488.4h8v2.75h-8zM288 488.4h6v2.75h-6zM308 488.4h14v2.75h-14zM344 488.4h6v2.75h-6zM370 488.4h2v2.75h-2zM382 488.4h2v2.75h-2zM402 488.4h2v2.75h-2zM406 488.4h2v2.75h-2zM122 491.1h2v2.75h-2zM160 491.1h2v2.75h-2zM178 491.1h4v2.75h-4zM184 491.1h4v2.75h-4zM208 491.1h4v2.75h-4zM234 491.1h2v2.75h-2zM250 491.1h2v2.75h-2zM272 491.1h2v2.75h-2zM290 491.1h2v2.75h-2zM320 491.1h2v2.75h-2zM344 491.1h2v2.75h-2zM406 491.1h2v2.75h-2z"/>
<path fill="#b310a8" d="M108 453.3h2v2.75h-2zM114 453.3h4v2.75h-4zM136 453.3h2v2.75h-2zM140 453.3h2v2.75h-2zM144 453.3h4v2.75h-4zM166 453.3h2v2.75h-2zM170 453.3h4v2.75h-4zM176 453.3h2v2.75h-2zM188 453.3h2v2.75h-2zM192 453.3h2v2.75h-2zM198 453.3h2v2.75h-2zM202 453.3h4v2.75h-4zM226 453.3h2v2.75h-2zM230 453.3h6v2.75h-6zM252 453.3h4v2.75h-4zM260 453.3h4v2.75h-4zM314 453.3h4v2.75h-4zM402 453.3h2v2.75h-2zM114 456.0h4v2.75h-4zM138 456.0h6v2.75h-6zM146 456.0h2v2.75h-2zM166 456.0h6v2.75h-6zM174 456.0h2v2.75h-2zM188 456.0h2v2.75h-2zM192 456.0h4v2.75h-4zM198 456.0h2v2.75h-2zM204 456.0h4v2.75h-4zM230 456.0h2v2.75h-2zM234 456.0h2v2.75h-2zM250 456.0h2v2.75h-2zM254 456.0h2v2.75h-2zM260 456.0h4v2.75h-4zM266 456.0h2v2.75h-2zM290 456.0h2v2.75h-2zM314 456.0h2v2.75h-2zM374 456.0h2v2.75h-2zM104 458.7h4v2.75h-4zM112 458.7h8v2.75h-8zM136 458.7h2v2.75h-2zM140 458.7h4v2.75h-4zM146 458.7h2v2.75h-2zM172 458.7h6v2.75h-6zM192 458.7h4v2.75h-4zM206 458.7h2v2.75h-2zM222 458.7h2v2.75h-2zM228 458.7h4v2.75h-4zM252 458.7h2v2.75h-2zM256 458.7h2v2.75h-2zM262 458.7h2v2.75h-2zM314 458.7h4v2.75h-4zM106 461.4h4v2.75h-4zM112 461.4h8v2.75h-8zM138 461.4h2v2.75h-2zM142 461.4h6v2.75h-6zM166 461.4h4v2.75h-4zM172 461.4h2v2.75h-2zM188 461.4h10v2.75h-10zM200 461.4h2v2.75h-2zM204 461.4h4v2.75h-4zM230 461.4h4v2.75h-4zM252 461.4h4v2.75h-4zM258 461.4h6v2.75h-6zM284 461.4h2v2.75h-2zM314 461.4h4v2.75h-4zM406 461.4h2v2.75h-2zM104 464.1h2v2.75h-2zM108 464.1h2v2.75h-2zM114 464.1h6v2.75h-6zM136 464.1h2v2.75h-2zM140 464.1h2v2.75h-2zM144 464.1h2v2.75h-2zM168 464.1h4v2.75h-4zM174 464.1h4v2.75h-4zM198 464.1h2v2.75h-2zM204 464.1h2v2.75h-2zM230 464.1h2v2.75h-2zM234 464.1h2v2.75h-2zM250 464.1h2v2.75h-2zM254 464.1h14v2.75h-14zM312 464.1h2v2.75h-2zM106 466.8h2v2.75h-2zM116 466.8h2v2.75h-2zM138 466.8h2v2.75h-2zM142 466.8h2v2.75h-2zM146 466.8h2v2.75h-2zM166 466.8h6v2.75h-6zM174 466.8h2v2.75h-2zM178 466.8h2v2.75h-2zM190 466.8h2v2.75h-2zM194 466.8h2v2.75h-2zM202 466.8h2v2.75h-2zM206 466.8h2v2.75h-2zM226 466.8h6v2.75h-6zM252 466.8h4v2.75h-4zM260 466.8h4v2.75h-4zM314 466.8h2v2.75h-2zM106 469.5h4v2.75h-4zM112 469.5h2v2.75h-2zM116 469.5h2v2.75h-2zM120 469.5h2v2.75h-2zM136 469.5h2v2.75h-2zM140 469.5h4v2.75h-4zM146 469.5h2v2.75h-2zM164 469.5h12v2.75h-12zM192 469.5h6v2.75h-6zM204 469.5h2v2.75h-2zM226 469.5h8v2.75h-8zM252 469.5h6v2.75h-6zM260 469.5h4v2.75h-4zM284 469.5h2v2.75h-2zM314 469.5h2v2.75h-2zM108 472.2h2v2.75h-2zM138 472.2h6v2.75h-6zM170 472.2h8v2.75h-8zM194 472.2h2v2.75h-2zM234 472.2h2v2.75h-2zM252 472.2h4v2.75h-4zM264 472.2h2v2.75h-2zM286 472.2h2v2.75h-2zM290 472.2h2v2.75h-2zM314 472.2h2v2.75h-2zM318 472.2h2v2.75h-2zM104 474.9h4v2.75h-4zM114 474.9h8v2.75h-8zM136 474.9h4v2.75h-4zM144 474.9h4v2.75h-4zM164 474.9h6v2.75h-6zM172 474.9h2v2.75h-2zM178 474.9h2v2.75h-2zM192 474.9h2v2.75h-2zM198 474.9h2v2.75h-2zM202 474.9h2v2.75h-2zM206 474.9h2v2.75h-2zM226 474.9h2v2.75h-2zM230 474.9h4v2.75h-4zM254 474.9h2v2.75h-2zM282 474.9h6v2.75h-6zM314 474.9h2v2.75h-2zM106 477.6h6v2.75h-6zM114 477.6h4v2.75h-4zM138 477.6h2v2.75h-2zM142 477.6h4v2.75h-4zM164 477.6h4v2.75h-4zM172 477.6h4v2.75h-4zM192 477.6h4v2.75h-4zM200 477.6h8v2.75h-8zM224 477.6h2v2.75h-2zM230 477.6h2v2.75h-2zM252 477.6h4v2.75h-4zM260 477.6h4v2.75h-4zM316 477.6h4v2.75h-4zM344 477.6h2v2.75h-2zM108 480.3h2v2.75h-2zM114 480.3h2v2.75h-2zM118 480.3h2v2.75h-2zM136 480.3h2v2.75h-2zM140 480.3h2v2.75h-2zM164 480.3h2v2.75h-2zM172 480.3h2v2.75h-2zM194 480.3h2v2.75h-2zM202 480.3h6v2.75h-6zM228 480.3h2v2.75h-2zM232 480.3h4v2.75h-4zM252 480.3h6v2.75h-6zM260 480.3h4v2.75h-4zM314 480.3h2v2.75h-2zM402 480.3h2v2.75h-2zM104 483.0h8v2.75h-8zM114 483.0h6v2.75h-6zM140 483.0h6v2.75h-6zM164 483.0h6v2.75h-6zM172 483.0h2v2.75h-2zM192 483.0h8v2.75h-8zM204 483.0h6v2.75h-6zM228 483.0h8v2.75h-8zM250 483.0h2v2.75h-2zM258 483.0h4v2.75h-4zM264 483.0h2v2.75h-2zM314 483.0h2v2.75h-2zM108 485.7h2v2.75h-2zM114 485.7h2v2.75h-2zM144 485.7h6v2.75h-6zM162 485.7h4v2.75h-4zM168 485.7h4v2.75h-4zM190 485.7h2v2.75h-2zM194 485.7h6v2.75h-6zM202 485.7h2v2.75h-2zM228 485.7h2v2.75h-2zM232 485.7h4v2.75h-4zM256 485.7h12v2.75h-12zM314 485.7h2v2.75h-2zM106 488.4h2v2.75h-2zM110 488.4h2v2.75h-2zM114 488.4h4v2.75h-4zM138 488.4h2v2.75h-2zM144 488.4h2v2.75h-2zM168 488.4h10v2.75h-10zM192 488.4h6v2.75h-6zM204 488.4h2v2.75h-2zM226 488.4h8v2.75h-8zM250 488.4h4v2.75h-4zM260 488.4h6v2.75h-6zM284 488.4h4v2.75h-4zM114 491.1h2v2.75h-2zM120 491.1h2v2.75h-2zM146 491.1h2v2.75h-2zM176 491.1h2v2.75h-2zM188 491.1h2v2.75h-2zM204 491.1h4v2.75h-4zM232 491.1h2v2.75h-2zM260 491.1h2v2.75h-2zM314 491.1h2v2.75h-2z"/>
<path fill="#de178d" d="M110 453.3h4v2.75h-4zM142 453.3h2v2.75h-2zM174 453.3h2v2.75h-2zM194 453.3h4v2.75h-4zM200 453.3h2v2.75h-2zM256 453.3h4v2.75h-4zM106 456.0h4v2.75h-4zM112 456.0h2v2.75h-2zM172 456.0h2v2.75h-2zM196 456.0h2v2.75h-2zM200 456.0h4v2.75h-4zM228 456.0h2v2.75h-2zM256 456.0h4v2.75h-4zM108 458.7h4v2.75h-4zM170 458.7h2v2.75h-2zM196 458.7h10v2.75h-10zM254 458.7h2v2.75h-2zM258 458.7h4v2.75h-4zM282 458.7h2v2.75h-2zM140 461.4h2v2.75h-2zM170 461.4h2v2.75h-2zM202 461.4h2v2.75h-2zM256 461.4h2v2.75h-2zM110 464.1h4v2.75h-4zM146 464.1h2v2.75h-2zM172 464.1h2v2.75h-2zM192 464.1h6v2.75h-6zM200 464.1h4v2.75h-4zM228 464.1h2v2.75h-2zM108 466.8h2v2.75h-2zM112 466.8h2v2.75h-2zM192 466.8h2v2.75h-2zM196 466.8h6v2.75h-6zM204 466.8h2v2.75h-2zM234 466.8h2v2.75h-2zM256 466.8h4v2.75h-4zM110 469.5h2v2.75h-2zM114 469.5h2v2.75h-2zM198 469.5h2v2.75h-2zM202 469.5h2v2.75h-2zM258 469.5h2v2.75h-2zM110 472.2h6v2.75h-6zM168 472.2h2v2.75h-2zM192 472.2h2v2.75h-2zM196 472.2h2v2.75h-2zM200 472.2h6v2.75h-6zM228 472.2h2v2.75h-2zM256 472.2h2v2.75h-2zM260 472.2h2v2.75h-2zM108 474.9h2v2.75h-2zM112 474.9h2v2.75h-2zM140 474.9h2v2.75h-2zM170 474.9h2v2.75h-2zM174 474.9h2v2.75h-2zM194 474.9h2v2.75h-2zM200 474.9h2v2.75h-2zM204 474.9h2v2.75h-2zM228 474.9h2v2.75h-2zM256 474.9h2v2.75h-2zM260 474.9h2v2.75h-2zM112 477.6h2v2.75h-2zM140 477.6h2v2.75h-2zM168 477.6h4v2.75h-4zM196 477.6h2v2.75h-2zM228 477.6h2v2.75h-2zM256 477.6h4v2.75h-4zM170 480.3h2v2.75h-2zM192 480.3h2v2.75h-2zM196 480.3h4v2.75h-4zM258 480.3h2v2.75h-2zM112 483.0h2v2.75h-2zM174 483.0h2v2.75h-2zM200 483.0h4v2.75h-4zM254 483.0h4v2.75h-4zM262 483.0h2v2.75h-2zM106 485.7h2v2.75h-2zM112 485.7h2v2.75h-2zM116 485.7h2v2.75h-2zM140 485.7h2v2.75h-2zM174 485.7h2v2.75h-2zM200 485.7h2v2.75h-2zM108 488.4h2v2.75h-2zM112 488.4h2v2.75h-2zM140 488.4h2v2.75h-2zM200 488.4h4v2.75h-4zM258 488.4h2v2.75h-2zM108 491.1h2v2.75h-2zM170 491.1h2v2.75h-2zM198 491.1h6v2.75h-6z"/>
<path fill="#f64461" d="M110 456.0h2v2.75h-2zM110 461.4h2v2.75h-2zM198 461.4h2v2.75h-2zM228 461.4h2v2.75h-2zM110 466.8h2v2.75h-2zM200 469.5h2v2.75h-2zM198 472.2h2v2.75h-2zM258 472.2h2v2.75h-2zM110 474.9h2v2.75h-2zM196 474.9h2v2.75h-2zM198 477.6h2v2.75h-2zM110 480.3h4v2.75h-4zM200 480.3h2v2.75h-2zM110 485.7h2v2.75h-2zM198 488.4h2v2.75h-2z"/>
<path fill="#3d02d8" d="M412 453.3h1v2.75h-1zM414 453.3h1v2.75h-1zM410 453.3h1v2.75h-1zM415 453.3h1v2.75h-1zM412 456.0h1v2.75h-1zM414 456.0h1v2.75h-1zM410 456.0h1v2.75h-1zM415 456.0h1v2.75h-1zM411 458.7h1v2.75h-1zM413 458.7h1v2.75h-1zM410 458.7h1v2.75h-1zM415 458.7h1v2.75h-1zM411 461.4h1v2.75h-1zM413 461.4h1v2.75h-1zM409 461.4h1v2.75h-1zM414 461.4h1v2.75h-1zM411 464.1h1v2.75h-1zM413 464.1h1v2.75h-1zM410 464.1h1v2.75h-1zM414 464.1h1v2.75h-1zM411 466.8h1v2.75h-1zM413 466.8h1v2.75h-1zM409 466.8h1v2.75h-1zM414 466.8h1v2.75h-1zM411 469.5h1v2.75h-1zM413 469.5h1v2.75h-1zM410 469.5h1v2.75h-1zM414 469.5h1v2.75h-1zM411 472.2h1v2.75h-1zM413 472.2h1v2.75h-1zM410 472.2h1v2.75h-1zM414 472.2h1v2.75h-1zM411 474.9h1v2.75h-1zM413 474.9h1v2.75h-1zM409 474.9h1v2.75h-1zM414 474.9h1v2.75h-1zM411 477.6h1v2.75h-1zM413 477.6h1v2.75h-1zM409 477.6h1v2.75h-1zM414 477.6h1v2.75h-1zM411 480.3h1v2.75h-1zM413 480.3h1v2.75h-1zM410 480.3h1v2.75h-1zM414 480.3h1v2.75h-1zM411 483.0h1v2.75h-1zM413 483.0h1v2.75h-1zM410 483.0h1v2.75h-1zM415 483.0h1v2.75h-1zM411 485.7h1v2.75h-1zM413 485.7h1v2.75h-1zM409 485.7h1v2.75h-1zM415 485.7h1v2.75h-1zM411 488.4h1v2.75h-1zM413 488.4h1v2.75h-1zM410 488.4h1v2.75h-1zM414 488.4h1v2.75h-1zM424 453.3h1v2.75h-1zM429 453.3h1v2.75h-1zM422 456.0h1v2.75h-1zM428 456.0h1v2.75h-1zM422 458.7h1v2.75h-1zM427 458.7h1v2.75h-1zM421 461.4h1v2.75h-1zM426 461.4h1v2.75h-1zM422 464.1h1v2.75h-1zM427 464.1h1v2.75h-1zM422 466.8h1v2.75h-1zM426 466.8h1v2.75h-1zM422 469.5h1v2.75h-1zM427 469.5h1v2.75h-1zM422 472.2h1v2.75h-1zM427 472.2h1v2.75h-1zM423 474.9h1v2.75h-1zM428 474.9h1v2.75h-1zM423 477.6h1v2.75h-1zM429 477.6h1v2.75h-1zM424 480.3h1v2.75h-1zM428 480.3h1v2.75h-1zM424 483.0h1v2.75h-1zM429 483.0h1v2.75h-1zM424 485.7h1v2.75h-1zM429 485.7h1v2.75h-1zM424 488.4h1v2.75h-1zM429 488.4h1v2.75h-1zM488 453.3h1v2.75h-1zM490 453.3h1v2.75h-1zM486 453.3h1v2.75h-1zM491 453.3h1v2.75h-1zM485 453.3h2v2.75h-2zM492 453.3h2v2.75h-2zM487 456.0h1v2.75h-1zM489 456.0h1v2.75h-1zM486 456.0h1v2.75h-1zM490 456.0h1v2.75h-1zM485 456.0h2v2.75h-2zM490 456.0h2v2.75h-2zM487 458.7h1v2.75h-1zM489 458.7h1v2.75h-1zM485 458.7h1v2.75h-1zM491 458.7h1v2.75h-1zM484 458.7h2v2.75h-2zM491 458.7h2v2.75h-2zM488 461.4h1v2.75h-1zM490 461.4h1v2.75h-1zM486 461.4h1v2.75h-1zM491 461.4h1v2.75h-1zM485 461.4h2v2.75h-2zM492 461.4h2v2.75h-2zM488 464.1h1v2.75h-1zM490 464.1h1v2.75h-1zM487 464.1h1v2.75h-1zM492 464.1h1v2.75h-1zM486 464.1h2v2.75h-2zM491 464.1h2v2.75h-2zM489 466.8h1v2.75h-1zM491 466.8h1v2.75h-1zM487 466.8h1v2.75h-1zM492 466.8h1v2.75h-1zM486 466.8h2v2.75h-2zM493 466.8h2v2.75h-2zM489 469.5h1v2.75h-1zM491 469.5h1v2.75h-1zM487 469.5h1v2.75h-1zM492 469.5h1v2.75h-1zM486 469.5h2v2.75h-2zM493 469.5h2v2.75h-2zM487 472.2h1v2.75h-1zM493 472.2h1v2.75h-1zM487 472.2h2v2.75h-2zM492 472.2h2v2.75h-2zM489 474.9h1v2.75h-1zM491 474.9h1v2.75h-1zM488 474.9h1v2.75h-1zM493 474.9h1v2.75h-1zM486 474.9h2v2.75h-2zM492 474.9h2v2.75h-2zM489 477.6h1v2.75h-1zM491 477.6h1v2.75h-1zM487 477.6h1v2.75h-1zM492 477.6h1v2.75h-1zM486 477.6h2v2.75h-2zM493 477.6h2v2.75h-2zM488 480.3h1v2.75h-1zM490 480.3h1v2.75h-1zM486 480.3h1v2.75h-1zM492 480.3h1v2.75h-1zM485 480.3h2v2.75h-2zM492 480.3h2v2.75h-2zM488 483.0h1v2.75h-1zM490 483.0h1v2.75h-1zM487 483.0h1v2.75h-1zM492 483.0h1v2.75h-1zM485 483.0h2v2.75h-2zM491 483.0h2v2.75h-2zM488 485.7h1v2.75h-1zM490 485.7h1v2.75h-1zM486 485.7h1v2.75h-1zM492 485.7h1v2.75h-1zM486 485.7h2v2.75h-2zM492 485.7h2v2.75h-2zM488 488.4h1v2.75h-1zM490 488.4h1v2.75h-1zM486 488.4h1v2.75h-1zM491 488.4h1v2.75h-1zM485 488.4h2v2.75h-2zM492 488.4h2v2.75h-2zM611 453.3h1v2.75h-1zM616 453.3h1v2.75h-1zM610 456.0h1v2.75h-1zM616 456.0h1v2.75h-1zM611 458.7h1v2.75h-1zM616 458.7h1v2.75h-1zM611 461.4h1v2.75h-1zM615 461.4h1v2.75h-1zM609 464.1h1v2.75h-1zM614 464.1h1v2.75h-1zM609 466.8h1v2.75h-1zM615 466.8h1v2.75h-1zM611 469.5h1v2.75h-1zM615 469.5h1v2.75h-1zM611 472.2h1v2.75h-1zM616 472.2h1v2.75h-1zM609 474.9h1v2.75h-1zM614 474.9h1v2.75h-1zM609 477.6h1v2.75h-1zM615 477.6h1v2.75h-1zM610 480.3h1v2.75h-1zM615 480.3h1v2.75h-1zM611 483.0h1v2.75h-1zM615 483.0h1v2.75h-1zM610 485.7h1v2.75h-1zM616 485.7h1v2.75h-1zM610 488.4h1v2.75h-1zM616 488.4h1v2.75h-1zM641 453.3h1v2.75h-1zM647 453.3h1v2.75h-1zM640 456.0h1v2.75h-1zM645 456.0h1v2.75h-1zM640 458.7h1v2.75h-1zM645 458.7h1v2.75h-1zM640 461.4h1v2.75h-1zM645 461.4h1v2.75h-1zM642 464.1h1v2.75h-1zM647 464.1h1v2.75h-1zM640 466.8h1v2.75h-1zM645 466.8h1v2.75h-1zM640 469.5h1v2.75h-1zM646 469.5h1v2.75h-1zM642 472.2h1v2.75h-1zM646 472.2h1v2.75h-1zM642 474.9h1v2.75h-1zM647 474.9h1v2.75h-1zM641 477.6h1v2.75h-1zM646 477.6h1v2.75h-1zM641 480.3h1v2.75h-1zM645 480.3h1v2.75h-1zM640 483.0h1v2.75h-1zM646 483.0h1v2.75h-1zM641 485.7h1v2.75h-1zM646 485.7h1v2.75h-1zM642 488.4h1v2.75h-1zM646 488.4h1v2.75h-1zM665 456.0h1v2.75h-1zM670 456.0h1v2.75h-1zM664 456.0h2v2.75h-2zM670 456.0h2v2.75h-2zM665 458.7h1v2.75h-1zM669 458.7h1v2.75h-1zM664 458.7h2v2.75h-2zM669 458.7h2v2.75h-2zM665 461.4h1v2.75h-1zM669 461.4h1v2.75h-1zM664 461.4h2v2.75h-2zM669 461.4h2v2.75h-2zM665 464.1h1v2.75h-1zM671 464.1h1v2.75h-1zM665 464.1h2v2.75h-2zM670 464.1h2v2.75h-2zM666 466.8h1v2.75h-1zM671 466.8h1v2.75h-1zM664 466.8h2v2.75h-2zM671 466.8h2v2.75h-2zM665 469.5h1v2.75h-1zM671 469.5h1v2.75h-1zM664 469.5h2v2.75h-2zM670 469.5h2v2.75h-2zM666 472.2h1v2.75h-1zM671 472.2h1v2.75h-1zM664 472.2h2v2.75h-2zM670 472.2h2v2.75h-2zM665 474.9h1v2.75h-1zM671 474.9h1v2.75h-1zM664 474.9h2v2.75h-2zM671 474.9h2v2.75h-2zM666 477.6h1v2.75h-1zM670 477.6h1v2.75h-1zM664 477.6h2v2.75h-2zM671 477.6h2v2.75h-2zM665 480.3h1v2.75h-1zM670 480.3h1v2.75h-1zM665 480.3h2v2.75h-2zM670 480.3h2v2.75h-2zM665 483.0h1v2.75h-1zM670 483.0h1v2.75h-1zM664 483.0h2v2.75h-2zM670 483.0h2v2.75h-2zM666 485.7h1v2.75h-1zM671 485.7h1v2.75h-1zM664 485.7h2v2.75h-2zM670 485.7h2v2.75h-2zM664 488.4h1v2.75h-1zM669 488.4h1v2.75h-1zM663 488.4h2v2.75h-2zM670 488.4h2v2.75h-2zM694 453.3h1v2.75h-1zM693 453.3h1v2.75h-1zM695 453.3h1v2.75h-1zM691 453.3h1v2.75h-1zM696 453.3h1v2.75h-1zM694 456.0h1v2.75h-1zM693 456.0h1v2.75h-1zM695 456.0h1v2.75h-1zM692 456.0h1v2.75h-1zM697 456.0h1v2.75h-1zM694 458.7h1v2.75h-1zM696 458.7h1v2.75h-1zM692 458.7h1v2.75h-1zM697 458.7h1v2.75h-1zM694 461.4h1v2.75h-1zM696 461.4h1v2.75h-1zM692 461.4h1v2.75h-1zM697 461.4h1v2.75h-1zM693 464.1h1v2.75h-1zM695 464.1h1v2.75h-1zM692 464.1h1v2.75h-1zM697 464.1h1v2.75h-1zM693 466.8h1v2.75h-1zM695 466.8h1v2.75h-1zM692 466.8h1v2.75h-1zM696 466.8h1v2.75h-1zM693 469.5h1v2.75h-1zM695 469.5h1v2.75h-1zM692 469.5h1v2.75h-1zM696 469.5h1v2.75h-1zM692 472.2h1v2.75h-1zM694 472.2h1v2.75h-1zM690 472.2h1v2.75h-1zM696 472.2h1v2.75h-1zM691 474.9h1v2.75h-1zM693 474.9h1v2.75h-1zM689 474.9h1v2.75h-1zM695 474.9h1v2.75h-1zM691 477.6h1v2.75h-1zM693 477.6h1v2.75h-1zM689 477.6h1v2.75h-1zM694 477.6h1v2.75h-1zM691 480.3h1v2.75h-1zM693 480.3h1v2.75h-1zM689 480.3h1v2.75h-1zM694 480.3h1v2.75h-1zM692 483.0h1v2.75h-1zM694 483.0h1v2.75h-1zM690 483.0h1v2.75h-1zM695 483.0h1v2.75h-1zM692 485.7h1v2.75h-1zM694 485.7h1v2.75h-1zM690 485.7h1v2.75h-1zM695 485.7h1v2.75h-1zM692 488.4h1v2.75h-1zM694 488.4h1v2.75h-1zM690 488.4h1v2.75h-1zM695 488.4h1v2.75h-1zM723 453.3h1v2.75h-1zM728 453.3h1v2.75h-1zM723 456.0h1v2.75h-1zM727 456.0h1v2.75h-1zM723 458.7h1v2.75h-1zM727 458.7h1v2.75h-1zM721 461.4h1v2.75h-1zM727 461.4h1v2.75h-1zM722 464.1h1v2.75h-1zM726 464.1h1v2.75h-1zM721 466.8h1v2.75h-1zM725 466.8h1v2.75h-1zM721 469.5h1v2.75h-1zM727 469.5h1v2.75h-1zM722 472.2h1v2.75h-1zM727 472.2h1v2.75h-1zM724 474.9h1v2.75h-1zM729 474.9h1v2.75h-1zM724 477.6h1v2.75h-1zM729 477.6h1v2.75h-1zM724 480.3h1v2.75h-1zM728 480.3h1v2.75h-1zM723 483.0h1v2.75h-1zM728 483.0h1v2.75h-1zM722 485.7h1v2.75h-1zM728 485.7h1v2.75h-1zM722 488.4h1v2.75h-1zM727 488.4h1v2.75h-1zM755 453.3h1v2.75h-1zM754 453.3h1v2.75h-1zM756 453.3h1v2.75h-1zM752 453.3h1v2.75h-1zM758 453.3h1v2.75h-1zM751 453.3h2v2.75h-2zM757 453.3h2v2.75h-2zM754 456.0h1v2.75h-1zM753 456.0h1v2.75h-1zM755 456.0h1v2.75h-1zM751 456.0h1v2.75h-1zM756 456.0h1v2.75h-1zM751 456.0h2v2.75h-2zM757 456.0h2v2.75h-2zM754 458.7h1v2.75h-1zM753 458.7h1v2.75h-1zM755 458.7h1v2.75h-1zM751 458.7h1v2.75h-1zM756 458.7h1v2.75h-1zM751 458.7h2v2.75h-2zM757 458.7h2v2.75h-2zM754 461.4h1v2.75h-1zM753 461.4h1v2.75h-1zM755 461.4h1v2.75h-1zM751 461.4h1v2.75h-1zM757 461.4h1v2.75h-1zM750 461.4h2v2.75h-2zM757 461.4h2v2.75h-2zM753 464.1h1v2.75h-1zM752 464.1h1v2.75h-1zM754 464.1h1v2.75h-1zM751 464.1h1v2.75h-1zM756 464.1h1v2.75h-1zM749 464.1h2v2.75h-2zM756 464.1h2v2.75h-2zM753 466.8h1v2.75h-1zM752 466.8h1v2.75h-1zM754 466.8h1v2.75h-1zM751 466.8h1v2.75h-1zM756 466.8h1v2.75h-1zM750 466.8h2v2.75h-2zM755 466.8h2v2.75h-2zM753 469.5h1v2.75h-1zM752 469.5h1v2.75h-1zM754 469.5h1v2.75h-1zM751 469.5h1v2.75h-1zM755 469.5h1v2.75h-1zM750 469.5h2v2.75h-2zM756 469.5h2v2.75h-2zM754 472.2h1v2.75h-1zM753 472.2h1v2.75h-1zM755 472.2h1v2.75h-1zM751 472.2h1v2.75h-1zM756 472.2h1v2.75h-1zM751 472.2h2v2.75h-2zM757 472.2h2v2.75h-2zM755 474.9h1v2.75h-1zM754 474.9h1v2.75h-1zM756 474.9h1v2.75h-1zM753 474.9h1v2.75h-1zM757 474.9h1v2.75h-1zM751 474.9h2v2.75h-2zM757 474.9h2v2.75h-2zM755 477.6h1v2.75h-1zM754 477.6h1v2.75h-1zM756 477.6h1v2.75h-1zM752 477.6h1v2.75h-1zM757 477.6h1v2.75h-1zM751 477.6h2v2.75h-2zM757 477.6h2v2.75h-2zM754 480.3h1v2.75h-1zM753 480.3h1v2.75h-1zM755 480.3h1v2.75h-1zM751 480.3h1v2.75h-1zM757 480.3h1v2.75h-1zM750 480.3h2v2.75h-2zM756 480.3h2v2.75h-2zM754 483.0h1v2.75h-1zM753 483.0h1v2.75h-1zM755 483.0h1v2.75h-1zM751 483.0h1v2.75h-1zM757 483.0h1v2.75h-1zM751 483.0h2v2.75h-2zM757 483.0h2v2.75h-2zM754 485.7h1v2.75h-1zM753 485.7h1v2.75h-1zM755 485.7h1v2.75h-1zM752 485.7h1v2.75h-1zM757 485.7h1v2.75h-1zM750 485.7h2v2.75h-2zM756 485.7h2v2.75h-2zM754 488.4h1v2.75h-1zM753 488.4h1v2.75h-1zM755 488.4h1v2.75h-1zM752 488.4h1v2.75h-1zM756 488.4h1v2.75h-1zM751 488.4h2v2.75h-2zM756 488.4h2v2.75h-2zM757 453.3h1v2.75h-1zM759 453.3h1v2.75h-1zM756 453.3h1v2.75h-1zM760 453.3h1v2.75h-1zM758 456.0h1v2.75h-1zM760 456.0h1v2.75h-1zM756 456.0h1v2.75h-1zM762 456.0h1v2.75h-1zM758 458.7h1v2.75h-1zM757 458.7h1v2.75h-1zM759 458.7h1v2.75h-1zM756 458.7h1v2.75h-1zM760 458.7h1v2.75h-1zM758 461.4h1v2.75h-1zM757 461.4h1v2.75h-1zM759 461.4h1v2.75h-1zM755 461.4h1v2.75h-1zM760 461.4h1v2.75h-1zM759 464.1h1v2.75h-1zM758 464.1h1v2.75h-1zM760 464.1h1v2.75h-1zM756 464.1h1v2.75h-1zM762 464.1h1v2.75h-1zM757 466.8h1v2.75h-1zM759 466.8h1v2.75h-1zM755 466.8h1v2.75h-1zM760 466.8h1v2.75h-1zM759 469.5h1v2.75h-1zM758 469.5h1v2.75h-1zM760 469.5h1v2.75h-1zM756 469.5h1v2.75h-1zM762 469.5h1v2.75h-1zM758 472.2h1v2.75h-1zM760 472.2h1v2.75h-1zM756 472.2h1v2.75h-1zM761 472.2h1v2.75h-1zM758 474.9h1v2.75h-1zM760 474.9h1v2.75h-1zM757 474.9h1v2.75h-1zM762 474.9h1v2.75h-1zM759 477.6h1v2.75h-1zM758 477.6h1v2.75h-1zM760 477.6h1v2.75h-1zM757 477.6h1v2.75h-1zM761 477.6h1v2.75h-1zM758 480.3h1v2.75h-1zM760 480.3h1v2.75h-1zM757 480.3h1v2.75h-1zM762 480.3h1v2.75h-1zM758 483.0h1v2.75h-1zM760 483.0h1v2.75h-1zM757 483.0h1v2.75h-1zM761 483.0h1v2.75h-1zM759 485.7h1v2.75h-1zM761 485.7h1v2.75h-1zM758 485.7h1v2.75h-1zM763 485.7h1v2.75h-1zM759 488.4h1v2.75h-1zM761 488.4h1v2.75h-1zM757 488.4h1v2.75h-1zM762 488.4h1v2.75h-1zM779 453.3h1v2.75h-1zM785 453.3h1v2.75h-1zM778 453.3h2v2.75h-2zM785 453.3h2v2.75h-2zM781 456.0h1v2.75h-1zM783 456.0h1v2.75h-1zM780 456.0h1v2.75h-1zM784 456.0h1v2.75h-1zM779 456.0h2v2.75h-2zM784 456.0h2v2.75h-2zM779 458.7h1v2.75h-1zM784 458.7h1v2.75h-1zM778 458.7h2v2.75h-2zM784 458.7h2v2.75h-2zM780 461.4h1v2.75h-1zM784 461.4h1v2.75h-1zM779 461.4h2v2.75h-2zM785 461.4h2v2.75h-2zM779 464.1h1v2.75h-1zM784 464.1h1v2.75h-1zM777 464.1h2v2.75h-2zM783 464.1h2v2.75h-2zM778 466.8h1v2.75h-1zM783 466.8h1v2.75h-1zM777 466.8h2v2.75h-2zM783 466.8h2v2.75h-2zM777 469.5h1v2.75h-1zM782 469.5h1v2.75h-1zM777 469.5h2v2.75h-2zM782 469.5h2v2.75h-2zM778 472.2h1v2.75h-1zM782 472.2h1v2.75h-1zM777 472.2h2v2.75h-2zM782 472.2h2v2.75h-2zM778 474.9h1v2.75h-1zM782 474.9h1v2.75h-1zM777 474.9h2v2.75h-2zM782 474.9h2v2.75h-2zM779 477.6h1v2.75h-1zM781 477.6h1v2.75h-1zM777 477.6h1v2.75h-1zM782 477.6h1v2.75h-1zM777 477.6h2v2.75h-2zM783 477.6h2v2.75h-2zM777 480.3h1v2.75h-1zM783 480.3h1v2.75h-1zM777 480.3h2v2.75h-2zM782 480.3h2v2.75h-2zM780 483.0h1v2.75h-1zM782 483.0h1v2.75h-1zM779 483.0h1v2.75h-1zM783 483.0h1v2.75h-1zM777 483.0h2v2.75h-2zM784 483.0h2v2.75h-2zM780 485.7h1v2.75h-1zM782 485.7h1v2.75h-1zM779 485.7h1v2.75h-1zM783 485.7h1v2.75h-1zM777 485.7h2v2.75h-2zM784 485.7h2v2.75h-2zM780 488.4h1v2.75h-1zM782 488.4h1v2.75h-1zM778 488.4h1v2.75h-1zM783 488.4h1v2.75h-1zM777 488.4h2v2.75h-2zM783 488.4h2v2.75h-2zM805 453.3h1v2.75h-1zM804 453.3h1v2.75h-1zM806 453.3h1v2.75h-1zM802 453.3h1v2.75h-1zM807 453.3h1v2.75h-1zM805 456.0h1v2.75h-1zM804 456.0h1v2.75h-1zM806 456.0h1v2.75h-1zM802 456.0h1v2.75h-1zM808 456.0h1v2.75h-1zM805 458.7h1v2.75h-1zM804 458.7h1v2.75h-1zM806 458.7h1v2.75h-1zM802 458.7h1v2.75h-1zM808 458.7h1v2.75h-1zM805 461.4h1v2.75h-1zM804 461.4h1v2.75h-1zM806 461.4h1v2.75h-1zM802 461.4h1v2.75h-1zM808 461.4h1v2.75h-1zM805 464.1h1v2.75h-1zM804 464.1h1v2.75h-1zM806 464.1h1v2.75h-1zM803 464.1h1v2.75h-1zM808 464.1h1v2.75h-1zM805 466.8h1v2.75h-1zM804 466.8h1v2.75h-1zM806 466.8h1v2.75h-1zM803 466.8h1v2.75h-1zM808 466.8h1v2.75h-1zM805 469.5h1v2.75h-1zM804 469.5h1v2.75h-1zM806 469.5h1v2.75h-1zM803 469.5h1v2.75h-1zM808 469.5h1v2.75h-1zM804 472.2h1v2.75h-1zM803 472.2h1v2.75h-1zM805 472.2h1v2.75h-1zM802 472.2h1v2.75h-1zM807 472.2h1v2.75h-1zM804 474.9h1v2.75h-1zM803 474.9h1v2.75h-1zM805 474.9h1v2.75h-1zM802 474.9h1v2.75h-1zM806 474.9h1v2.75h-1zM804 477.6h1v2.75h-1zM803 477.6h1v2.75h-1zM805 477.6h1v2.75h-1zM802 477.6h1v2.75h-1zM806 477.6h1v2.75h-1zM804 480.3h1v2.75h-1zM803 480.3h1v2.75h-1zM805 480.3h1v2.75h-1zM802 480.3h1v2.75h-1zM807 480.3h1v2.75h-1zM805 483.0h1v2.75h-1zM804 483.0h1v2.75h-1zM806 483.0h1v2.75h-1zM803 483.0h1v2.75h-1zM807 483.0h1v2.75h-1zM805 485.7h1v2.75h-1zM804 485.7h1v2.75h-1zM806 485.7h1v2.75h-1zM802 485.7h1v2.75h-1zM808 485.7h1v2.75h-1zM804 488.4h1v2.75h-1zM803 488.4h1v2.75h-1zM805 488.4h1v2.75h-1zM801 488.4h1v2.75h-1zM806 488.4h1v2.75h-1zM898 453.3h1v2.75h-1zM900 453.3h1v2.75h-1zM896 453.3h1v2.75h-1zM901 453.3h1v2.75h-1zM899 456.0h1v2.75h-1zM901 456.0h1v2.75h-1zM897 456.0h1v2.75h-1zM902 456.0h1v2.75h-1zM898 458.7h1v2.75h-1zM900 458.7h1v2.75h-1zM896 458.7h1v2.75h-1zM902 458.7h1v2.75h-1zM899 461.4h1v2.75h-1zM901 461.4h1v2.75h-1zM898 461.4h1v2.75h-1zM903 461.4h1v2.75h-1zM899 464.1h1v2.75h-1zM901 464.1h1v2.75h-1zM897 464.1h1v2.75h-1zM903 464.1h1v2.75h-1zM899 466.8h1v2.75h-1zM901 466.8h1v2.75h-1zM897 466.8h1v2.75h-1zM903 466.8h1v2.75h-1zM899 469.5h1v2.75h-1zM901 469.5h1v2.75h-1zM897 469.5h1v2.75h-1zM903 469.5h1v2.75h-1zM899 472.2h1v2.75h-1zM901 472.2h1v2.75h-1zM897 472.2h1v2.75h-1zM903 472.2h1v2.75h-1zM898 474.9h1v2.75h-1zM900 474.9h1v2.75h-1zM897 474.9h1v2.75h-1zM902 474.9h1v2.75h-1zM898 477.6h1v2.75h-1zM900 477.6h1v2.75h-1zM896 477.6h1v2.75h-1zM902 477.6h1v2.75h-1zM898 480.3h1v2.75h-1zM900 480.3h1v2.75h-1zM897 480.3h1v2.75h-1zM901 480.3h1v2.75h-1zM898 483.0h1v2.75h-1zM900 483.0h1v2.75h-1zM897 483.0h1v2.75h-1zM902 483.0h1v2.75h-1zM898 485.7h1v2.75h-1zM900 485.7h1v2.75h-1zM897 485.7h1v2.75h-1zM901 485.7h1v2.75h-1zM899 488.4h1v2.75h-1zM901 488.4h1v2.75h-1zM898 488.4h1v2.75h-1zM903 488.4h1v2.75h-1zM929 453.3h1v2.75h-1zM928 453.3h1v2.75h-1zM930 453.3h1v2.75h-1zM927 453.3h1v2.75h-1zM931 453.3h1v2.75h-1zM929 456.0h1v2.75h-1zM928 456.0h1v2.75h-1zM930 456.0h1v2.75h-1zM927 456.0h1v2.75h-1zM931 456.0h1v2.75h-1zM929 458.7h1v2.75h-1zM928 458.7h1v2.75h-1zM930 458.7h1v2.75h-1zM927 458.7h1v2.75h-1zM931 458.7h1v2.75h-1zM929 461.4h1v2.75h-1zM928 461.4h1v2.75h-1zM930 461.4h1v2.75h-1zM927 461.4h1v2.75h-1zM932 461.4h1v2.75h-1zM929 464.1h1v2.75h-1zM928 464.1h1v2.75h-1zM930 464.1h1v2.75h-1zM927 464.1h1v2.75h-1zM931 464.1h1v2.75h-1zM928 466.8h1v2.75h-1zM927 466.8h1v2.75h-1zM929 466.8h1v2.75h-1zM925 466.8h1v2.75h-1zM931 466.8h1v2.75h-1zM928 469.5h1v2.75h-1zM927 469.5h1v2.75h-1zM929 469.5h1v2.75h-1zM926 469.5h1v2.75h-1zM931 469.5h1v2.75h-1zM929 472.2h1v2.75h-1zM928 472.2h1v2.75h-1zM930 472.2h1v2.75h-1zM927 472.2h1v2.75h-1zM932 472.2h1v2.75h-1zM928 474.9h1v2.75h-1zM927 474.9h1v2.75h-1zM929 474.9h1v2.75h-1zM926 474.9h1v2.75h-1zM930 474.9h1v2.75h-1zM928 477.6h1v2.75h-1zM927 477.6h1v2.75h-1zM929 477.6h1v2.75h-1zM926 477.6h1v2.75h-1zM931 477.6h1v2.75h-1zM928 480.3h1v2.75h-1zM927 480.3h1v2.75h-1zM929 480.3h1v2.75h-1zM926 480.3h1v2.75h-1zM931 480.3h1v2.75h-1zM929 483.0h1v2.75h-1zM928 483.0h1v2.75h-1zM930 483.0h1v2.75h-1zM927 483.0h1v2.75h-1zM932 483.0h1v2.75h-1zM928 485.7h1v2.75h-1zM927 485.7h1v2.75h-1zM929 485.7h1v2.75h-1zM925 485.7h1v2.75h-1zM930 485.7h1v2.75h-1zM929 488.4h1v2.75h-1zM928 488.4h1v2.75h-1zM930 488.4h1v2.75h-1zM926 488.4h1v2.75h-1zM931 488.4h1v2.75h-1zM987 453.3h1v2.75h-1zM986 453.3h1v2.75h-1zM988 453.3h1v2.75h-1zM985 453.3h1v2.75h-1zM990 453.3h1v2.75h-1zM983 453.3h2v2.75h-2zM990 453.3h2v2.75h-2zM987 456.0h1v2.75h-1zM986 456.0h1v2.75h-1zM988 456.0h1v2.75h-1zM984 456.0h1v2.75h-1zM989 456.0h1v2.75h-1zM983 456.0h2v2.75h-2zM989 456.0h2v2.75h-2zM986 458.7h1v2.75h-1zM985 458.7h1v2.75h-1zM987 458.7h1v2.75h-1zM983 458.7h1v2.75h-1zM988 458.7h1v2.75h-1zM983 458.7h2v2.75h-2zM989 458.7h2v2.75h-2zM986 461.4h1v2.75h-1zM985 461.4h1v2.75h-1zM987 461.4h1v2.75h-1zM983 461.4h1v2.75h-1zM989 461.4h1v2.75h-1zM983 461.4h2v2.75h-2zM989 461.4h2v2.75h-2zM986 464.1h1v2.75h-1zM985 464.1h1v2.75h-1zM987 464.1h1v2.75h-1zM984 464.1h1v2.75h-1zM988 464.1h1v2.75h-1zM983 464.1h2v2.75h-2zM989 464.1h2v2.75h-2zM986 466.8h1v2.75h-1zM985 466.8h1v2.75h-1zM987 466.8h1v2.75h-1zM984 466.8h1v2.75h-1zM988 466.8h1v2.75h-1zM983 466.8h2v2.75h-2zM988 466.8h2v2.75h-2zM986 469.5h1v2.75h-1zM985 469.5h1v2.75h-1zM987 469.5h1v2.75h-1zM983 469.5h1v2.75h-1zM988 469.5h1v2.75h-1zM982 469.5h2v2.75h-2zM988 469.5h2v2.75h-2zM986 472.2h1v2.75h-1zM985 472.2h1v2.75h-1zM987 472.2h1v2.75h-1zM983 472.2h1v2.75h-1zM988 472.2h1v2.75h-1zM983 472.2h2v2.75h-2zM989 472.2h2v2.75h-2zM986 474.9h1v2.75h-1zM985 474.9h1v2.75h-1zM987 474.9h1v2.75h-1zM983 474.9h1v2.75h-1zM989 474.9h1v2.75h-1zM982 474.9h2v2.75h-2zM988 474.9h2v2.75h-2zM986 477.6h1v2.75h-1zM985 477.6h1v2.75h-1zM987 477.6h1v2.75h-1zM984 477.6h1v2.75h-1zM989 477.6h1v2.75h-1zM983 477.6h2v2.75h-2zM989 477.6h2v2.75h-2zM986 480.3h1v2.75h-1zM985 480.3h1v2.75h-1zM987 480.3h1v2.75h-1zM983 480.3h1v2.75h-1zM988 480.3h1v2.75h-1zM982 480.3h2v2.75h-2zM988 480.3h2v2.75h-2zM986 483.0h1v2.75h-1zM985 483.0h1v2.75h-1zM987 483.0h1v2.75h-1zM984 483.0h1v2.75h-1zM989 483.0h1v2.75h-1zM982 483.0h2v2.75h-2zM989 483.0h2v2.75h-2zM986 485.7h1v2.75h-1zM985 485.7h1v2.75h-1zM987 485.7h1v2.75h-1zM983 485.7h1v2.75h-1zM988 485.7h1v2.75h-1zM983 485.7h2v2.75h-2zM989 485.7h2v2.75h-2zM986 488.4h1v2.75h-1zM985 488.4h1v2.75h-1zM987 488.4h1v2.75h-1zM983 488.4h1v2.75h-1zM988 488.4h1v2.75h-1zM982 488.4h2v2.75h-2zM989 488.4h2v2.75h-2z"/>
<path fill="#5f05cf" d="M312 456.0h1v2.75h-1zM316 456.0h1v2.75h-1zM310 456.0h2v2.75h-2zM316 456.0h2v2.75h-2zM312 458.7h1v2.75h-1zM316 458.7h1v2.75h-1zM310 458.7h2v2.75h-2zM317 458.7h2v2.75h-2zM312 461.4h1v2.75h-1zM316 461.4h1v2.75h-1zM310 461.4h2v2.75h-2zM316 461.4h2v2.75h-2zM312 464.1h1v2.75h-1zM316 464.1h1v2.75h-1zM310 464.1h2v2.75h-2zM316 464.1h2v2.75h-2zM311 469.5h1v2.75h-1zM316 469.5h1v2.75h-1zM310 469.5h2v2.75h-2zM315 469.5h2v2.75h-2zM310 472.2h1v2.75h-1zM316 472.2h1v2.75h-1zM309 472.2h2v2.75h-2zM316 472.2h2v2.75h-2zM311 474.9h1v2.75h-1zM316 474.9h1v2.75h-1zM310 474.9h2v2.75h-2zM315 474.9h2v2.75h-2zM311 477.6h1v2.75h-1zM315 477.6h1v2.75h-1zM309 477.6h2v2.75h-2zM316 477.6h2v2.75h-2zM311 480.3h1v2.75h-1zM316 480.3h1v2.75h-1zM310 480.3h2v2.75h-2zM315 480.3h2v2.75h-2zM311 483.0h1v2.75h-1zM317 483.0h1v2.75h-1zM311 483.0h2v2.75h-2zM317 483.0h2v2.75h-2zM312 488.4h1v2.75h-1zM317 488.4h1v2.75h-1zM311 488.4h2v2.75h-2zM318 488.4h2v2.75h-2zM343 453.3h1v2.75h-1zM347 453.3h1v2.75h-1zM342 453.3h2v2.75h-2zM347 453.3h2v2.75h-2zM341 456.0h1v2.75h-1zM346 456.0h1v2.75h-1zM341 456.0h2v2.75h-2zM346 456.0h2v2.75h-2zM343 458.7h1v2.75h-1zM347 458.7h1v2.75h-1zM341 458.7h2v2.75h-2zM348 458.7h2v2.75h-2zM342 461.4h1v2.75h-1zM348 461.4h1v2.75h-1zM342 461.4h2v2.75h-2zM347 461.4h2v2.75h-2zM343 464.1h1v2.75h-1zM348 464.1h1v2.75h-1zM341 464.1h2v2.75h-2zM348 464.1h2v2.75h-2zM342 466.8h1v2.75h-1zM347 466.8h1v2.75h-1zM341 466.8h2v2.75h-2zM348 466.8h2v2.75h-2zM342 469.5h1v2.75h-1zM347 469.5h1v2.75h-1zM341 469.5h2v2.75h-2zM348 469.5h2v2.75h-2zM343 472.2h1v2.75h-1zM347 472.2h1v2.75h-1zM342 472.2h2v2.75h-2zM348 472.2h2v2.75h-2zM342 474.9h1v2.75h-1zM348 474.9h1v2.75h-1zM342 474.9h2v2.75h-2zM348 474.9h2v2.75h-2zM344 477.6h1v2.75h-1zM349 477.6h1v2.75h-1zM342 477.6h2v2.75h-2zM349 477.6h2v2.75h-2zM344 480.3h1v2.75h-1zM349 480.3h1v2.75h-1zM342 480.3h2v2.75h-2zM349 480.3h2v2.75h-2zM343 483.0h1v2.75h-1zM349 483.0h1v2.75h-1zM342 483.0h2v2.75h-2zM349 483.0h2v2.75h-2zM343 485.7h1v2.75h-1zM349 485.7h1v2.75h-1zM343 485.7h2v2.75h-2zM348 485.7h2v2.75h-2zM344 488.4h1v2.75h-1zM348 488.4h1v2.75h-1zM342 488.4h2v2.75h-2zM348 488.4h2v2.75h-2zM373 453.3h1v2.75h-1zM378 453.3h1v2.75h-1zM373 453.3h2v2.75h-2zM379 453.3h2v2.75h-2zM373 456.0h1v2.75h-1zM377 456.0h1v2.75h-1zM371 456.0h2v2.75h-2zM377 456.0h2v2.75h-2zM372 458.7h1v2.75h-1zM377 458.7h1v2.75h-1zM372 458.7h2v2.75h-2zM377 458.7h2v2.75h-2zM373 461.4h1v2.75h-1zM377 461.4h1v2.75h-1zM371 461.4h2v2.75h-2zM377 461.4h2v2.75h-2zM372 464.1h1v2.75h-1zM377 464.1h1v2.75h-1zM371 464.1h2v2.75h-2zM377 464.1h2v2.75h-2zM372 466.8h1v2.75h-1zM377 466.8h1v2.75h-1zM372 466.8h2v2.75h-2zM378 466.8h2v2.75h-2zM371 469.5h1v2.75h-1zM376 469.5h1v2.75h-1zM370 469.5h2v2.75h-2zM377 469.5h2v2.75h-2zM372 472.2h1v2.75h-1zM376 472.2h1v2.75h-1zM371 472.2h2v2.75h-2zM377 472.2h2v2.75h-2zM371 474.9h1v2.75h-1zM376 474.9h1v2.75h-1zM371 474.9h2v2.75h-2zM376 474.9h2v2.75h-2zM371 477.6h1v2.75h-1zM376 477.6h1v2.75h-1zM371 477.6h2v2.75h-2zM376 477.6h2v2.75h-2zM372 480.3h1v2.75h-1zM376 480.3h1v2.75h-1zM370 480.3h2v2.75h-2zM377 480.3h2v2.75h-2zM371 483.0h1v2.75h-1zM377 483.0h1v2.75h-1zM371 483.0h2v2.75h-2zM377 483.0h2v2.75h-2zM371 485.7h1v2.75h-1zM377 485.7h1v2.75h-1zM370 485.7h2v2.75h-2zM376 485.7h2v2.75h-2zM372 488.4h1v2.75h-1zM376 488.4h1v2.75h-1zM370 488.4h2v2.75h-2zM376 488.4h2v2.75h-2zM413 453.3h1v2.75h-1zM413 456.0h1v2.75h-1zM412 458.7h1v2.75h-1zM412 461.4h1v2.75h-1zM412 464.1h1v2.75h-1zM412 466.8h1v2.75h-1zM412 469.5h1v2.75h-1zM412 472.2h1v2.75h-1zM412 474.9h1v2.75h-1zM412 477.6h1v2.75h-1zM412 480.3h1v2.75h-1zM412 483.0h1v2.75h-1zM412 485.7h1v2.75h-1zM412 488.4h1v2.75h-1zM425 453.3h1v2.75h-1zM427 453.3h1v2.75h-1zM424 456.0h1v2.75h-1zM426 456.0h1v2.75h-1zM424 458.7h1v2.75h-1zM426 458.7h1v2.75h-1zM423 461.4h1v2.75h-1zM425 461.4h1v2.75h-1zM423 464.1h1v2.75h-1zM425 464.1h1v2.75h-1zM423 466.8h1v2.75h-1zM425 466.8h1v2.75h-1zM424 469.5h1v2.75h-1zM426 469.5h1v2.75h-1zM424 472.2h1v2.75h-1zM426 472.2h1v2.75h-1zM425 474.9h1v2.75h-1zM427 474.9h1v2.75h-1zM425 477.6h1v2.75h-1zM427 477.6h1v2.75h-1zM425 480.3h1v2.75h-1zM427 480.3h1v2.75h-1zM425 483.0h1v2.75h-1zM427 483.0h1v2.75h-1zM425 485.7h1v2.75h-1zM427 485.7h1v2.75h-1zM425 488.4h1v2.75h-1zM427 488.4h1v2.75h-1zM489 453.3h1v2.75h-1zM488 456.0h1v2.75h-1zM488 458.7h1v2.75h-1zM489 461.4h1v2.75h-1zM489 464.1h1v2.75h-1zM490 466.8h1v2.75h-1zM490 469.5h1v2.75h-1zM490 472.2h1v2.75h-1zM489 472.2h1v2.75h-1zM491 472.2h1v2.75h-1zM490 474.9h1v2.75h-1zM490 477.6h1v2.75h-1zM489 480.3h1v2.75h-1zM489 483.0h1v2.75h-1zM489 485.7h1v2.75h-1zM489 488.4h1v2.75h-1zM612 453.3h1v2.75h-1zM614 453.3h1v2.75h-1zM612 456.0h1v2.75h-1zM614 456.0h1v2.75h-1zM612 458.7h1v2.75h-1zM614 458.7h1v2.75h-1zM612 461.4h1v2.75h-1zM614 461.4h1v2.75h-1zM611 464.1h1v2.75h-1zM613 464.1h1v2.75h-1zM611 466.8h1v2.75h-1zM613 466.8h1v2.75h-1zM612 469.5h1v2.75h-1zM614 469.5h1v2.75h-1zM612 472.2h1v2.75h-1zM614 472.2h1v2.75h-1zM611 474.9h1v2.75h-1zM613 474.9h1v2.75h-1zM611 477.6h1v2.75h-1zM613 477.6h1v2.75h-1zM611 480.3h1v2.75h-1zM613 480.3h1v2.75h-1zM612 483.0h1v2.75h-1zM614 483.0h1v2.75h-1zM612 485.7h1v2.75h-1zM614 485.7h1v2.75h-1zM612 488.4h1v2.75h-1zM614 488.4h1v2.75h-1zM643 453.3h1v2.75h-1zM645 453.3h1v2.75h-1zM643 456.0h1v2.75h-1zM642 456.0h1v2.75h-1zM644 456.0h1v2.75h-1zM642 458.7h1v2.75h-1zM644 458.7h1v2.75h-1zM643 461.4h1v2.75h-1zM642 461.4h1v2.75h-1zM644 461.4h1v2.75h-1zM643 464.1h1v2.75h-1zM645 464.1h1v2.75h-1zM642 466.8h1v2.75h-1zM644 466.8h1v2.75h-1zM643 469.5h1v2.75h-1zM642 469.5h1v2.75h-1zM644 469.5h1v2.75h-1zM644 472.2h1v2.75h-1zM643 472.2h1v2.75h-1zM645 472.2h1v2.75h-1zM643 474.9h1v2.75h-1zM645 474.9h1v2.75h-1zM642 477.6h1v2.75h-1zM644 477.6h1v2.75h-1zM642 480.3h1v2.75h-1zM644 480.3h1v2.75h-1zM642 483.0h1v2.75h-1zM644 483.0h1v2.75h-1zM643 485.7h1v2.75h-1zM645 485.7h1v2.75h-1zM644 488.4h1v2.75h-1zM643 488.4h1v2.75h-1zM645 488.4h1v2.75h-1zM665 453.3h1v2.75h-1zM669 453.3h1v2.75h-1zM664 453.3h2v2.75h-2zM669 453.3h2v2.75h-2zM667 456.0h1v2.75h-1zM669 456.0h1v2.75h-1zM666 458.7h1v2.75h-1zM668 458.7h1v2.75h-1zM666 461.4h1v2.75h-1zM668 461.4h1v2.75h-1zM667 464.1h1v2.75h-1zM669 464.1h1v2.75h-1zM667 466.8h1v2.75h-1zM669 466.8h1v2.75h-1zM667 469.5h1v2.75h-1zM669 469.5h1v2.75h-1zM667 472.2h1v2.75h-1zM669 472.2h1v2.75h-1zM667 474.9h1v2.75h-1zM669 474.9h1v2.75h-1zM667 477.6h1v2.75h-1zM669 477.6h1v2.75h-1zM667 480.3h1v2.75h-1zM669 480.3h1v2.75h-1zM667 483.0h1v2.75h-1zM669 483.0h1v2.75h-1zM667 485.7h1v2.75h-1zM669 485.7h1v2.75h-1zM666 488.4h1v2.75h-1zM668 488.4h1v2.75h-1zM695 458.7h1v2.75h-1zM695 461.4h1v2.75h-1zM694 464.1h1v2.75h-1zM694 466.8h1v2.75h-1zM694 469.5h1v2.75h-1zM693 472.2h1v2.75h-1zM692 474.9h1v2.75h-1zM692 477.6h1v2.75h-1zM692 480.3h1v2.75h-1zM693 483.0h1v2.75h-1zM693 485.7h1v2.75h-1zM693 488.4h1v2.75h-1zM724 453.3h1v2.75h-1zM726 453.3h1v2.75h-1zM724 456.0h1v2.75h-1zM726 456.0h1v2.75h-1zM724 458.7h1v2.75h-1zM726 458.7h1v2.75h-1zM723 461.4h1v2.75h-1zM725 461.4h1v2.75h-1zM723 464.1h1v2.75h-1zM725 464.1h1v2.75h-1zM722 466.8h1v2.75h-1zM724 466.8h1v2.75h-1zM723 469.5h1v2.75h-1zM725 469.5h1v2.75h-1zM724 472.2h1v2.75h-1zM726 472.2h1v2.75h-1zM725 474.9h1v2.75h-1zM727 474.9h1v2.75h-1zM725 477.6h1v2.75h-1zM727 477.6h1v2.75h-1zM725 480.3h1v2.75h-1zM727 480.3h1v2.75h-1zM725 483.0h1v2.75h-1zM727 483.0h1v2.75h-1zM724 485.7h1v2.75h-1zM726 485.7h1v2.75h-1zM723 488.4h1v2.75h-1zM725 488.4h1v2.75h-1zM758 453.3h1v2.75h-1zM759 456.0h1v2.75h-1zM758 466.8h1v2.75h-1zM759 472.2h1v2.75h-1zM759 474.9h1v2.75h-1zM759 480.3h1v2.75h-1zM759 483.0h1v2.75h-1zM760 485.7h1v2.75h-1zM760 488.4h1v2.75h-1zM782 453.3h1v2.75h-1zM781 453.3h1v2.75h-1zM783 453.3h1v2.75h-1zM782 456.0h1v2.75h-1zM782 458.7h1v2.75h-1zM781 458.7h1v2.75h-1zM783 458.7h1v2.75h-1zM782 461.4h1v2.75h-1zM781 461.4h1v2.75h-1zM783 461.4h1v2.75h-1zM781 464.1h1v2.75h-1zM780 464.1h1v2.75h-1zM782 464.1h1v2.75h-1zM780 466.8h1v2.75h-1zM779 466.8h1v2.75h-1zM781 466.8h1v2.75h-1zM780 469.5h1v2.75h-1zM779 469.5h1v2.75h-1zM781 469.5h1v2.75h-1zM780 472.2h1v2.75h-1zM779 472.2h1v2.75h-1zM781 472.2h1v2.75h-1zM780 474.9h1v2.75h-1zM779 474.9h1v2.75h-1zM781 474.9h1v2.75h-1zM780 477.6h1v2.75h-1zM780 480.3h1v2.75h-1zM779 480.3h1v2.75h-1zM781 480.3h1v2.75h-1zM781 483.0h1v2.75h-1zM781 485.7h1v2.75h-1zM781 488.4h1v2.75h-1zM899 453.3h1v2.75h-1zM900 456.0h1v2.75h-1zM899 458.7h1v2.75h-1zM900 461.4h1v2.75h-1zM900 464.1h1v2.75h-1zM900 466.8h1v2.75h-1zM900 469.5h1v2.75h-1zM900 472.2h1v2.75h-1zM899 474.9h1v2.75h-1zM899 477.6h1v2.75h-1zM899 480.3h1v2.75h-1zM899 483.0h1v2.75h-1zM899 485.7h1v2.75h-1zM900 488.4h1v2.75h-1z"/>
<path fill="#890abd" d="M139 453.3h1v2.75h-1zM144 453.3h1v2.75h-1zM138 453.3h2v2.75h-2zM145 453.3h2v2.75h-2zM139 456.0h1v2.75h-1zM145 456.0h1v2.75h-1zM138 456.0h2v2.75h-2zM145 456.0h2v2.75h-2zM139 458.7h1v2.75h-1zM144 458.7h1v2.75h-1zM138 458.7h2v2.75h-2zM144 458.7h2v2.75h-2zM139 461.4h1v2.75h-1zM144 461.4h1v2.75h-1zM138 461.4h2v2.75h-2zM145 461.4h2v2.75h-2zM140 464.1h1v2.75h-1zM144 464.1h1v2.75h-1zM139 464.1h2v2.75h-2zM145 464.1h2v2.75h-2zM139 466.8h1v2.75h-1zM144 466.8h1v2.75h-1zM138 466.8h2v2.75h-2zM145 466.8h2v2.75h-2zM139 469.5h1v2.75h-1zM144 469.5h1v2.75h-1zM139 469.5h2v2.75h-2zM145 469.5h2v2.75h-2zM140 472.2h1v2.75h-1zM145 472.2h1v2.75h-1zM138 472.2h2v2.75h-2zM144 472.2h2v2.75h-2zM140 474.9h1v2.75h-1zM144 474.9h1v2.75h-1zM139 474.9h2v2.75h-2zM145 474.9h2v2.75h-2zM140 477.6h1v2.75h-1zM144 477.6h1v2.75h-1zM138 477.6h2v2.75h-2zM145 477.6h2v2.75h-2zM139 480.3h1v2.75h-1zM145 480.3h1v2.75h-1zM138 480.3h2v2.75h-2zM144 480.3h2v2.75h-2zM138 483.0h1v2.75h-1zM143 483.0h1v2.75h-1zM138 483.0h2v2.75h-2zM144 483.0h2v2.75h-2zM138 485.7h1v2.75h-1zM142 485.7h1v2.75h-1zM137 485.7h2v2.75h-2zM142 485.7h2v2.75h-2zM138 488.4h1v2.75h-1zM143 488.4h1v2.75h-1zM137 488.4h2v2.75h-2zM143 488.4h2v2.75h-2zM144 456.0h1v2.75h-1zM150 456.0h1v2.75h-1zM145 458.7h1v2.75h-1zM149 458.7h1v2.75h-1zM144 464.1h1v2.75h-1zM149 464.1h1v2.75h-1zM146 469.5h1v2.75h-1zM151 469.5h1v2.75h-1zM146 480.3h1v2.75h-1zM150 480.3h1v2.75h-1zM146 488.4h1v2.75h-1zM151 488.4h1v2.75h-1zM282 458.7h1v2.75h-1zM287 458.7h1v2.75h-1zM281 458.7h2v2.75h-2zM288 458.7h2v2.75h-2zM281 461.4h1v2.75h-1zM286 461.4h1v2.75h-1zM281 461.4h2v2.75h-2zM286 461.4h2v2.75h-2zM282 464.1h1v2.75h-1zM287 464.1h1v2.75h-1zM281 464.1h2v2.75h-2zM287 464.1h2v2.75h-2zM285 474.9h1v2.75h-1zM289 474.9h1v2.75h-1zM284 474.9h2v2.75h-2zM289 474.9h2v2.75h-2zM284 480.3h1v2.75h-1zM290 480.3h1v2.75h-1zM284 480.3h2v2.75h-2zM289 480.3h2v2.75h-2zM285 483.0h1v2.75h-1zM289 483.0h1v2.75h-1zM283 483.0h2v2.75h-2zM289 483.0h2v2.75h-2zM284 485.7h1v2.75h-1zM289 485.7h1v2.75h-1zM283 485.7h2v2.75h-2zM289 485.7h2v2.75h-2zM312 453.3h1v2.75h-1zM316 453.3h1v2.75h-1zM310 453.3h2v2.75h-2zM316 453.3h2v2.75h-2zM313 456.0h1v2.75h-1zM315 456.0h1v2.75h-1zM313 458.7h1v2.75h-1zM315 458.7h1v2.75h-1zM313 461.4h1v2.75h-1zM315 461.4h1v2.75h-1zM313 464.1h1v2.75h-1zM315 464.1h1v2.75h-1zM312 466.8h1v2.75h-1zM316 466.8h1v2.75h-1zM310 466.8h2v2.75h-2zM316 466.8h2v2.75h-2zM312 469.5h1v2.75h-1zM314 469.5h1v2.75h-1zM312 472.2h1v2.75h-1zM314 472.2h1v2.75h-1zM312 474.9h1v2.75h-1zM314 474.9h1v2.75h-1zM312 477.6h1v2.75h-1zM314 477.6h1v2.75h-1zM312 480.3h1v2.75h-1zM314 480.3h1v2.75h-1zM313 483.0h1v2.75h-1zM315 483.0h1v2.75h-1zM311 485.7h1v2.75h-1zM316 485.7h1v2.75h-1zM311 485.7h2v2.75h-2zM317 485.7h2v2.75h-2zM314 488.4h1v2.75h-1zM316 488.4h1v2.75h-1zM344 453.3h1v2.75h-1zM346 453.3h1v2.75h-1zM343 456.0h1v2.75h-1zM345 456.0h1v2.75h-1zM344 458.7h1v2.75h-1zM346 458.7h1v2.75h-1zM344 461.4h1v2.75h-1zM346 461.4h1v2.75h-1zM344 464.1h1v2.75h-1zM346 464.1h1v2.75h-1zM344 466.8h1v2.75h-1zM346 466.8h1v2.75h-1zM344 469.5h1v2.75h-1zM346 469.5h1v2.75h-1zM344 472.2h1v2.75h-1zM346 472.2h1v2.75h-1zM344 474.9h1v2.75h-1zM346 474.9h1v2.75h-1zM345 477.6h1v2.75h-1zM347 477.6h1v2.75h-1zM345 480.3h1v2.75h-1zM347 480.3h1v2.75h-1zM345 483.0h1v2.75h-1zM347 483.0h1v2.75h-1zM345 485.7h1v2.75h-1zM347 485.7h1v2.75h-1zM345 488.4h1v2.75h-1zM347 488.4h1v2.75h-1zM375 453.3h1v2.75h-1zM377 453.3h1v2.75h-1zM374 456.0h1v2.75h-1zM376 456.0h1v2.75h-1zM374 458.7h1v2.75h-1zM376 458.7h1v2.75h-1zM374 461.4h1v2.75h-1zM376 461.4h1v2.75h-1zM374 464.1h1v2.75h-1zM376 464.1h1v2.75h-1zM374 466.8h1v2.75h-1zM376 466.8h1v2.75h-1zM373 469.5h1v2.75h-1zM375 469.5h1v2.75h-1zM373 472.2h1v2.75h-1zM375 472.2h1v2.75h-1zM373 474.9h1v2.75h-1zM375 474.9h1v2.75h-1zM373 477.6h1v2.75h-1zM375 477.6h1v2.75h-1zM373 480.3h1v2.75h-1zM375 480.3h1v2.75h-1zM373 483.0h1v2.75h-1zM375 483.0h1v2.75h-1zM373 485.7h1v2.75h-1zM375 485.7h1v2.75h-1zM373 488.4h1v2.75h-1zM375 488.4h1v2.75h-1zM400 453.3h1v2.75h-1zM404 453.3h1v2.75h-1zM399 453.3h2v2.75h-2zM404 453.3h2v2.75h-2zM399 456.0h1v2.75h-1zM404 456.0h1v2.75h-1zM398 456.0h2v2.75h-2zM403 456.0h2v2.75h-2zM399 458.7h1v2.75h-1zM404 458.7h1v2.75h-1zM398 458.7h2v2.75h-2zM405 458.7h2v2.75h-2zM399 466.8h1v2.75h-1zM404 466.8h1v2.75h-1zM399 466.8h2v2.75h-2zM405 466.8h2v2.75h-2zM401 469.5h1v2.75h-1zM405 469.5h1v2.75h-1zM400 469.5h2v2.75h-2zM405 469.5h2v2.75h-2zM400 480.3h1v2.75h-1zM404 480.3h1v2.75h-1zM399 480.3h2v2.75h-2zM405 480.3h2v2.75h-2zM400 483.0h1v2.75h-1zM405 483.0h1v2.75h-1zM399 483.0h2v2.75h-2zM405 483.0h2v2.75h-2zM400 485.7h1v2.75h-1zM405 485.7h1v2.75h-1zM399 485.7h2v2.75h-2zM406 485.7h2v2.75h-2zM401 488.4h1v2.75h-1zM406 488.4h1v2.75h-1zM400 488.4h2v2.75h-2zM405 488.4h2v2.75h-2zM426 453.3h1v2.75h-1zM425 456.0h1v2.75h-1zM425 458.7h1v2.75h-1zM424 461.4h1v2.75h-1zM424 464.1h1v2.75h-1zM424 466.8h1v2.75h-1zM425 469.5h1v2.75h-1zM425 472.2h1v2.75h-1zM426 474.9h1v2.75h-1zM426 477.6h1v2.75h-1zM426 480.3h1v2.75h-1zM426 483.0h1v2.75h-1zM426 485.7h1v2.75h-1zM426 488.4h1v2.75h-1zM548 464.1h1v2.75h-1zM553 464.1h1v2.75h-1zM547 464.1h2v2.75h-2zM553 464.1h2v2.75h-2zM548 472.2h1v2.75h-1zM553 472.2h1v2.75h-1zM546 472.2h2v2.75h-2zM552 472.2h2v2.75h-2zM548 483.0h1v2.75h-1zM552 483.0h1v2.75h-1zM547 483.0h2v2.75h-2zM552 483.0h2v2.75h-2zM575 453.3h1v2.75h-1zM581 453.3h1v2.75h-1zM575 453.3h2v2.75h-2zM580 453.3h2v2.75h-2zM576 456.0h1v2.75h-1zM581 456.0h1v2.75h-1zM574 456.0h2v2.75h-2zM580 456.0h2v2.75h-2zM576 461.4h1v2.75h-1zM580 461.4h1v2.75h-1zM575 461.4h2v2.75h-2zM581 461.4h2v2.75h-2zM576 464.1h1v2.75h-1zM581 464.1h1v2.75h-1zM574 464.1h2v2.75h-2zM580 464.1h2v2.75h-2zM574 466.8h1v2.75h-1zM580 466.8h1v2.75h-1zM574 466.8h2v2.75h-2zM580 466.8h2v2.75h-2zM574 469.5h1v2.75h-1zM579 469.5h1v2.75h-1zM573 469.5h2v2.75h-2zM579 469.5h2v2.75h-2zM574 472.2h1v2.75h-1zM579 472.2h1v2.75h-1zM574 472.2h2v2.75h-2zM580 472.2h2v2.75h-2zM574 477.6h1v2.75h-1zM580 477.6h1v2.75h-1zM573 477.6h2v2.75h-2zM580 477.6h2v2.75h-2zM574 485.7h1v2.75h-1zM579 485.7h1v2.75h-1zM573 485.7h2v2.75h-2zM579 485.7h2v2.75h-2zM574 488.4h1v2.75h-1zM579 488.4h1v2.75h-1zM573 488.4h2v2.75h-2zM580 488.4h2v2.75h-2zM605 456.0h1v2.75h-1zM609 456.0h1v2.75h-1zM605 458.7h1v2.75h-1zM610 458.7h1v2.75h-1zM613 453.3h1v2.75h-1zM613 456.0h1v2.75h-1zM613 458.7h1v2.75h-1zM613 461.4h1v2.75h-1zM612 464.1h1v2.75h-1zM612 466.8h1v2.75h-1zM613 469.5h1v2.75h-1zM613 472.2h1v2.75h-1zM612 474.9h1v2.75h-1zM612 477.6h1v2.75h-1zM612 480.3h1v2.75h-1zM613 483.0h1v2.75h-1zM613 485.7h1v2.75h-1zM613 488.4h1v2.75h-1zM644 453.3h1v2.75h-1zM643 458.7h1v2.75h-1zM644 464.1h1v2.75h-1zM643 466.8h1v2.75h-1zM644 474.9h1v2.75h-1zM643 477.6h1v2.75h-1zM643 480.3h1v2.75h-1zM643 483.0h1v2.75h-1zM644 485.7h1v2.75h-1zM666 453.3h1v2.75h-1zM668 453.3h1v2.75h-1zM668 456.0h1v2.75h-1zM667 458.7h1v2.75h-1zM667 461.4h1v2.75h-1zM668 464.1h1v2.75h-1zM668 466.8h1v2.75h-1zM668 469.5h1v2.75h-1zM668 472.2h1v2.75h-1zM668 474.9h1v2.75h-1zM668 477.6h1v2.75h-1zM668 480.3h1v2.75h-1zM668 483.0h1v2.75h-1zM668 485.7h1v2.75h-1zM667 488.4h1v2.75h-1zM725 453.3h1v2.75h-1zM725 456.0h1v2.75h-1zM725 458.7h1v2.75h-1zM724 461.4h1v2.75h-1zM724 464.1h1v2.75h-1zM723 466.8h1v2.75h-1zM724 469.5h1v2.75h-1zM725 472.2h1v2.75h-1zM726 474.9h1v2.75h-1zM726 477.6h1v2.75h-1zM726 480.3h1v2.75h-1zM726 483.0h1v2.75h-1zM725 485.7h1v2.75h-1zM724 488.4h1v2.75h-1z"/>
<path fill="#b310a8" d="M141 453.3h1v2.75h-1zM143 453.3h1v2.75h-1zM141 456.0h1v2.75h-1zM143 456.0h1v2.75h-1zM141 458.7h1v2.75h-1zM143 458.7h1v2.75h-1zM141 461.4h1v2.75h-1zM143 461.4h1v2.75h-1zM141 464.1h1v2.75h-1zM143 464.1h1v2.75h-1zM141 466.8h1v2.75h-1zM143 466.8h1v2.75h-1zM141 469.5h1v2.75h-1zM143 469.5h1v2.75h-1zM141 472.2h1v2.75h-1zM143 472.2h1v2.75h-1zM141 474.9h1v2.75h-1zM143 474.9h1v2.75h-1zM141 477.6h1v2.75h-1zM143 477.6h1v2.75h-1zM141 480.3h1v2.75h-1zM143 480.3h1v2.75h-1zM140 483.0h1v2.75h-1zM142 483.0h1v2.75h-1zM139 485.7h1v2.75h-1zM141 485.7h1v2.75h-1zM140 488.4h1v2.75h-1zM142 488.4h1v2.75h-1zM145 453.3h1v2.75h-1zM149 453.3h1v2.75h-1zM146 456.0h1v2.75h-1zM148 456.0h1v2.75h-1zM146 458.7h1v2.75h-1zM148 458.7h1v2.75h-1zM146 461.4h1v2.75h-1zM151 461.4h1v2.75h-1zM146 464.1h1v2.75h-1zM148 464.1h1v2.75h-1zM145 466.8h1v2.75h-1zM151 466.8h1v2.75h-1zM147 469.5h1v2.75h-1zM149 469.5h1v2.75h-1zM145 472.2h1v2.75h-1zM151 472.2h1v2.75h-1zM145 474.9h1v2.75h-1zM150 474.9h1v2.75h-1zM145 477.6h1v2.75h-1zM151 477.6h1v2.75h-1zM147 480.3h1v2.75h-1zM149 480.3h1v2.75h-1zM145 483.0h1v2.75h-1zM151 483.0h1v2.75h-1zM145 485.7h1v2.75h-1zM150 485.7h1v2.75h-1zM147 488.4h1v2.75h-1zM149 488.4h1v2.75h-1zM168 453.3h1v2.75h-1zM173 453.3h1v2.75h-1zM168 453.3h2v2.75h-2zM173 453.3h2v2.75h-2zM169 456.0h1v2.75h-1zM174 456.0h1v2.75h-1zM169 456.0h2v2.75h-2zM175 456.0h2v2.75h-2zM169 461.4h1v2.75h-1zM175 461.4h1v2.75h-1zM168 461.4h2v2.75h-2zM175 461.4h2v2.75h-2zM169 464.1h1v2.75h-1zM174 464.1h1v2.75h-1zM169 464.1h2v2.75h-2zM175 464.1h2v2.75h-2zM168 472.2h1v2.75h-1zM174 472.2h1v2.75h-1zM167 472.2h2v2.75h-2zM174 472.2h2v2.75h-2zM169 474.9h1v2.75h-1zM174 474.9h1v2.75h-1zM169 474.9h2v2.75h-2zM175 474.9h2v2.75h-2zM169 477.6h1v2.75h-1zM174 477.6h1v2.75h-1zM168 477.6h2v2.75h-2zM174 477.6h2v2.75h-2zM169 483.0h1v2.75h-1zM175 483.0h1v2.75h-1zM169 483.0h2v2.75h-2zM175 483.0h2v2.75h-2zM169 488.4h1v2.75h-1zM174 488.4h1v2.75h-1zM167 488.4h2v2.75h-2zM173 488.4h2v2.75h-2zM255 480.3h1v2.75h-1zM260 480.3h1v2.75h-1zM254 480.3h2v2.75h-2zM259 480.3h2v2.75h-2zM283 453.3h1v2.75h-1zM289 453.3h1v2.75h-1zM283 453.3h2v2.75h-2zM288 453.3h2v2.75h-2zM283 456.0h1v2.75h-1zM289 456.0h1v2.75h-1zM282 456.0h2v2.75h-2zM289 456.0h2v2.75h-2zM284 458.7h1v2.75h-1zM286 458.7h1v2.75h-1zM283 461.4h1v2.75h-1zM285 461.4h1v2.75h-1zM284 464.1h1v2.75h-1zM286 464.1h1v2.75h-1zM283 466.8h1v2.75h-1zM289 466.8h1v2.75h-1zM282 466.8h2v2.75h-2zM289 466.8h2v2.75h-2zM284 469.5h1v2.75h-1zM289 469.5h1v2.75h-1zM284 469.5h2v2.75h-2zM289 469.5h2v2.75h-2zM285 472.2h1v2.75h-1zM289 472.2h1v2.75h-1zM284 472.2h2v2.75h-2zM289 472.2h2v2.75h-2zM286 474.9h1v2.75h-1zM288 474.9h1v2.75h-1zM284 477.6h1v2.75h-1zM289 477.6h1v2.75h-1zM283 477.6h2v2.75h-2zM289 477.6h2v2.75h-2zM286 480.3h1v2.75h-1zM288 480.3h1v2.75h-1zM286 483.0h1v2.75h-1zM288 483.0h1v2.75h-1zM285 485.7h1v2.75h-1zM287 485.7h1v2.75h-1zM283 488.4h1v2.75h-1zM288 488.4h1v2.75h-1zM283 488.4h2v2.75h-2zM288 488.4h2v2.75h-2zM313 453.3h1v2.75h-1zM315 453.3h1v2.75h-1zM314 456.0h1v2.75h-1zM313 466.8h1v2.75h-1zM315 466.8h1v2.75h-1zM313 469.5h1v2.75h-1zM313 474.9h1v2.75h-1zM313 480.3h1v2.75h-1zM313 485.7h1v2.75h-1zM315 485.7h1v2.75h-1zM344 453.3h1v2.75h-1zM349 453.3h1v2.75h-1zM344 456.0h1v2.75h-1zM349 456.0h1v2.75h-1zM343 458.7h1v2.75h-1zM347 458.7h1v2.75h-1zM343 461.4h1v2.75h-1zM349 461.4h1v2.75h-1zM344 464.1h1v2.75h-1zM349 464.1h1v2.75h-1zM344 466.8h1v2.75h-1zM348 466.8h1v2.75h-1zM344 469.5h1v2.75h-1zM348 469.5h1v2.75h-1zM344 477.6h1v2.75h-1zM349 477.6h1v2.75h-1zM344 480.3h1v2.75h-1zM349 480.3h1v2.75h-1zM344 483.0h1v2.75h-1zM348 483.0h1v2.75h-1zM344 485.7h1v2.75h-1zM349 485.7h1v2.75h-1zM344 488.4h1v2.75h-1zM348 488.4h1v2.75h-1zM345 453.3h1v2.75h-1zM344 456.0h1v2.75h-1zM345 458.7h1v2.75h-1zM345 461.4h1v2.75h-1zM345 464.1h1v2.75h-1zM345 466.8h1v2.75h-1zM345 469.5h1v2.75h-1zM345 472.2h1v2.75h-1zM345 474.9h1v2.75h-1zM346 477.6h1v2.75h-1zM346 480.3h1v2.75h-1zM346 483.0h1v2.75h-1zM346 485.7h1v2.75h-1zM346 488.4h1v2.75h-1zM376 453.3h1v2.75h-1zM375 456.0h1v2.75h-1zM375 458.7h1v2.75h-1zM375 461.4h1v2.75h-1zM375 464.1h1v2.75h-1zM375 466.8h1v2.75h-1zM374 469.5h1v2.75h-1zM374 472.2h1v2.75h-1zM374 477.6h1v2.75h-1zM374 480.3h1v2.75h-1zM374 483.0h1v2.75h-1zM374 485.7h1v2.75h-1zM374 488.4h1v2.75h-1zM401 453.3h1v2.75h-1zM403 453.3h1v2.75h-1zM400 456.0h1v2.75h-1zM402 456.0h1v2.75h-1zM401 458.7h1v2.75h-1zM403 458.7h1v2.75h-1zM399 461.4h1v2.75h-1zM404 461.4h1v2.75h-1zM398 461.4h2v2.75h-2zM404 461.4h2v2.75h-2zM400 464.1h1v2.75h-1zM405 464.1h1v2.75h-1zM399 464.1h2v2.75h-2zM404 464.1h2v2.75h-2zM401 466.8h1v2.75h-1zM403 466.8h1v2.75h-1zM402 469.5h1v2.75h-1zM404 469.5h1v2.75h-1zM399 472.2h1v2.75h-1zM404 472.2h1v2.75h-1zM399 472.2h2v2.75h-2zM404 472.2h2v2.75h-2zM399 474.9h1v2.75h-1zM405 474.9h1v2.75h-1zM399 474.9h2v2.75h-2zM405 474.9h2v2.75h-2zM399 477.6h1v2.75h-1zM404 477.6h1v2.75h-1zM399 477.6h2v2.75h-2zM404 477.6h2v2.75h-2zM401 480.3h1v2.75h-1zM403 480.3h1v2.75h-1zM401 483.0h1v2.75h-1zM403 483.0h1v2.75h-1zM402 485.7h1v2.75h-1zM404 485.7h1v2.75h-1zM402 488.4h1v2.75h-1zM404 488.4h1v2.75h-1zM432 453.3h1v2.75h-1zM436 453.3h1v2.75h-1zM432 456.0h1v2.75h-1zM437 456.0h1v2.75h-1zM431 458.7h1v2.75h-1zM437 458.7h1v2.75h-1zM432 461.4h1v2.75h-1zM436 461.4h1v2.75h-1zM431 464.1h1v2.75h-1zM436 464.1h1v2.75h-1zM430 466.8h1v2.75h-1zM435 466.8h1v2.75h-1zM430 469.5h1v2.75h-1zM434 469.5h1v2.75h-1zM430 472.2h1v2.75h-1zM436 472.2h1v2.75h-1zM430 474.9h1v2.75h-1zM434 474.9h1v2.75h-1zM430 477.6h1v2.75h-1zM436 477.6h1v2.75h-1zM431 480.3h1v2.75h-1zM436 480.3h1v2.75h-1zM431 483.0h1v2.75h-1zM436 483.0h1v2.75h-1zM431 485.7h1v2.75h-1zM436 485.7h1v2.75h-1zM430 488.4h1v2.75h-1zM434 488.4h1v2.75h-1zM548 453.3h1v2.75h-1zM553 453.3h1v2.75h-1zM546 453.3h2v2.75h-2zM553 453.3h2v2.75h-2zM549 456.0h1v2.75h-1zM554 456.0h1v2.75h-1zM547 456.0h2v2.75h-2zM554 456.0h2v2.75h-2zM549 458.7h1v2.75h-1zM554 458.7h1v2.75h-1zM547 458.7h2v2.75h-2zM554 458.7h2v2.75h-2zM549 461.4h1v2.75h-1zM553 461.4h1v2.75h-1zM548 461.4h2v2.75h-2zM553 461.4h2v2.75h-2zM550 464.1h1v2.75h-1zM552 464.1h1v2.75h-1zM548 466.8h1v2.75h-1zM553 466.8h1v2.75h-1zM547 466.8h2v2.75h-2zM554 466.8h2v2.75h-2zM546 469.5h1v2.75h-1zM552 469.5h1v2.75h-1zM545 469.5h2v2.75h-2zM551 469.5h2v2.75h-2zM549 472.2h1v2.75h-1zM551 472.2h1v2.75h-1zM548 474.9h1v2.75h-1zM553 474.9h1v2.75h-1zM547 474.9h2v2.75h-2zM552 474.9h2v2.75h-2zM546 477.6h1v2.75h-1zM552 477.6h1v2.75h-1zM546 477.6h2v2.75h-2zM551 477.6h2v2.75h-2zM547 480.3h1v2.75h-1zM553 480.3h1v2.75h-1zM546 480.3h2v2.75h-2zM553 480.3h2v2.75h-2zM549 483.0h1v2.75h-1zM551 483.0h1v2.75h-1zM548 485.7h1v2.75h-1zM553 485.7h1v2.75h-1zM547 485.7h2v2.75h-2zM553 485.7h2v2.75h-2zM548 488.4h1v2.75h-1zM553 488.4h1v2.75h-1zM546 488.4h2v2.75h-2zM552 488.4h2v2.75h-2zM577 453.3h1v2.75h-1zM579 453.3h1v2.75h-1zM577 456.0h1v2.75h-1zM579 456.0h1v2.75h-1zM575 458.7h1v2.75h-1zM580 458.7h1v2.75h-1zM575 458.7h2v2.75h-2zM580 458.7h2v2.75h-2zM577 461.4h1v2.75h-1zM579 461.4h1v2.75h-1zM577 464.1h1v2.75h-1zM579 464.1h1v2.75h-1zM576 466.8h1v2.75h-1zM578 466.8h1v2.75h-1zM576 469.5h1v2.75h-1zM578 469.5h1v2.75h-1zM576 472.2h1v2.75h-1zM578 472.2h1v2.75h-1zM574 474.9h1v2.75h-1zM579 474.9h1v2.75h-1zM573 474.9h2v2.75h-2zM579 474.9h2v2.75h-2zM576 477.6h1v2.75h-1zM578 477.6h1v2.75h-1zM575 480.3h1v2.75h-1zM579 480.3h1v2.75h-1zM573 480.3h2v2.75h-2zM579 480.3h2v2.75h-2zM575 483.0h1v2.75h-1zM579 483.0h1v2.75h-1zM573 483.0h2v2.75h-2zM579 483.0h2v2.75h-2zM576 485.7h1v2.75h-1zM578 485.7h1v2.75h-1zM576 488.4h1v2.75h-1zM578 488.4h1v2.75h-1zM604 453.3h1v2.75h-1zM609 453.3h1v2.75h-1zM606 456.0h1v2.75h-1zM608 456.0h1v2.75h-1zM607 458.7h1v2.75h-1zM609 458.7h1v2.75h-1zM605 461.4h1v2.75h-1zM611 461.4h1v2.75h-1zM605 464.1h1v2.75h-1zM610 464.1h1v2.75h-1zM606 466.8h1v2.75h-1zM610 466.8h1v2.75h-1zM605 469.5h1v2.75h-1zM610 469.5h1v2.75h-1zM606 472.2h1v2.75h-1zM611 472.2h1v2.75h-1zM605 474.9h1v2.75h-1zM611 474.9h1v2.75h-1zM605 477.6h1v2.75h-1zM610 477.6h1v2.75h-1zM604 480.3h1v2.75h-1zM610 480.3h1v2.75h-1zM604 483.0h1v2.75h-1zM609 483.0h1v2.75h-1zM605 485.7h1v2.75h-1zM609 485.7h1v2.75h-1zM605 488.4h1v2.75h-1zM609 488.4h1v2.75h-1zM634 453.3h1v2.75h-1zM640 453.3h1v2.75h-1zM635 458.7h1v2.75h-1zM640 458.7h1v2.75h-1zM635 461.4h1v2.75h-1zM640 461.4h1v2.75h-1zM635 469.5h1v2.75h-1zM639 469.5h1v2.75h-1zM634 477.6h1v2.75h-1zM638 477.6h1v2.75h-1zM633 480.3h1v2.75h-1zM639 480.3h1v2.75h-1zM633 483.0h1v2.75h-1zM639 483.0h1v2.75h-1zM667 453.3h1v2.75h-1z"/>
<path fill="#de178d" d="M109 453.3h1v2.75h-1zM113 453.3h1v2.75h-1zM108 453.3h2v2.75h-2zM113 453.3h2v2.75h-2zM108 456.0h1v2.75h-1zM112 456.0h1v2.75h-1zM107 456.0h2v2.75h-2zM113 456.0h2v2.75h-2zM108 458.7h1v2.75h-1zM113 458.7h1v2.75h-1zM108 458.7h2v2.75h-2zM113 458.7h2v2.75h-2zM108 461.4h1v2.75h-1zM113 461.4h1v2.75h-1zM107 461.4h2v2.75h-2zM113 461.4h2v2.75h-2zM108 464.1h1v2.75h-1zM112 464.1h1v2.75h-1zM107 464.1h2v2.75h-2zM113 464.1h2v2.75h-2zM107 466.8h1v2.75h-1zM113 466.8h1v2.75h-1zM107 466.8h2v2.75h-2zM113 466.8h2v2.75h-2zM108 469.5h1v2.75h-1zM112 469.5h1v2.75h-1zM107 469.5h2v2.75h-2zM112 469.5h2v2.75h-2zM109 472.2h1v2.75h-1zM113 472.2h1v2.75h-1zM108 472.2h2v2.75h-2zM114 472.2h2v2.75h-2zM110 474.9h1v2.75h-1zM115 474.9h1v2.75h-1zM108 474.9h2v2.75h-2zM114 474.9h2v2.75h-2zM109 477.6h1v2.75h-1zM113 477.6h1v2.75h-1zM108 477.6h2v2.75h-2zM113 477.6h2v2.75h-2zM109 480.3h1v2.75h-1zM114 480.3h1v2.75h-1zM109 480.3h2v2.75h-2zM114 480.3h2v2.75h-2zM110 483.0h1v2.75h-1zM115 483.0h1v2.75h-1zM109 483.0h2v2.75h-2zM114 483.0h2v2.75h-2zM109 485.7h1v2.75h-1zM114 485.7h1v2.75h-1zM109 485.7h2v2.75h-2zM115 485.7h2v2.75h-2zM109 488.4h1v2.75h-1zM114 488.4h1v2.75h-1zM108 488.4h2v2.75h-2zM114 488.4h2v2.75h-2zM139 453.3h1v2.75h-1zM144 453.3h1v2.75h-1zM138 456.0h1v2.75h-1zM143 456.0h1v2.75h-1zM138 458.7h1v2.75h-1zM142 458.7h1v2.75h-1zM137 461.4h1v2.75h-1zM142 461.4h1v2.75h-1zM137 464.1h1v2.75h-1zM143 464.1h1v2.75h-1zM138 466.8h1v2.75h-1zM143 466.8h1v2.75h-1zM137 469.5h1v2.75h-1zM143 469.5h1v2.75h-1zM138 472.2h1v2.75h-1zM142 472.2h1v2.75h-1zM139 474.9h1v2.75h-1zM143 474.9h1v2.75h-1zM139 477.6h1v2.75h-1zM145 477.6h1v2.75h-1zM139 480.3h1v2.75h-1zM145 480.3h1v2.75h-1zM139 483.0h1v2.75h-1zM144 483.0h1v2.75h-1zM140 485.7h1v2.75h-1zM145 485.7h1v2.75h-1zM140 488.4h1v2.75h-1zM144 488.4h1v2.75h-1zM142 472.2h1v2.75h-1zM142 474.9h1v2.75h-1zM142 477.6h1v2.75h-1zM142 480.3h1v2.75h-1zM140 485.7h1v2.75h-1zM141 488.4h1v2.75h-1zM146 453.3h1v2.75h-1zM148 453.3h1v2.75h-1zM147 461.4h1v2.75h-1zM149 461.4h1v2.75h-1zM147 466.8h1v2.75h-1zM149 466.8h1v2.75h-1zM147 472.2h1v2.75h-1zM149 472.2h1v2.75h-1zM147 474.9h1v2.75h-1zM149 474.9h1v2.75h-1zM147 477.6h1v2.75h-1zM149 477.6h1v2.75h-1zM147 483.0h1v2.75h-1zM149 483.0h1v2.75h-1zM147 485.7h1v2.75h-1zM149 485.7h1v2.75h-1zM170 453.3h1v2.75h-1zM172 453.3h1v2.75h-1zM171 456.0h1v2.75h-1zM173 456.0h1v2.75h-1zM170 458.7h1v2.75h-1zM174 458.7h1v2.75h-1zM168 458.7h2v2.75h-2zM175 458.7h2v2.75h-2zM171 461.4h1v2.75h-1zM173 461.4h1v2.75h-1zM171 464.1h1v2.75h-1zM173 464.1h1v2.75h-1zM170 466.8h1v2.75h-1zM174 466.8h1v2.75h-1zM169 466.8h2v2.75h-2zM174 466.8h2v2.75h-2zM169 469.5h1v2.75h-1zM174 469.5h1v2.75h-1zM168 469.5h2v2.75h-2zM174 469.5h2v2.75h-2zM170 472.2h1v2.75h-1zM172 472.2h1v2.75h-1zM171 474.9h1v2.75h-1zM173 474.9h1v2.75h-1zM171 477.6h1v2.75h-1zM173 477.6h1v2.75h-1zM169 480.3h1v2.75h-1zM174 480.3h1v2.75h-1zM167 480.3h2v2.75h-2zM174 480.3h2v2.75h-2zM171 483.0h1v2.75h-1zM173 483.0h1v2.75h-1zM169 485.7h1v2.75h-1zM174 485.7h1v2.75h-1zM168 485.7h2v2.75h-2zM174 485.7h2v2.75h-2zM170 488.4h1v2.75h-1zM172 488.4h1v2.75h-1zM196 453.3h1v2.75h-1zM202 453.3h1v2.75h-1zM195 453.3h2v2.75h-2zM202 453.3h2v2.75h-2zM196 456.0h1v2.75h-1zM201 456.0h1v2.75h-1zM195 456.0h2v2.75h-2zM201 456.0h2v2.75h-2zM196 458.7h1v2.75h-1zM202 458.7h1v2.75h-1zM196 458.7h2v2.75h-2zM202 458.7h2v2.75h-2zM197 461.4h1v2.75h-1zM203 461.4h1v2.75h-1zM197 461.4h2v2.75h-2zM202 461.4h2v2.75h-2zM197 464.1h1v2.75h-1zM203 464.1h1v2.75h-1zM196 464.1h2v2.75h-2zM203 464.1h2v2.75h-2zM197 466.8h1v2.75h-1zM203 466.8h1v2.75h-1zM197 466.8h2v2.75h-2zM203 466.8h2v2.75h-2zM198 469.5h1v2.75h-1zM203 469.5h1v2.75h-1zM197 469.5h2v2.75h-2zM202 469.5h2v2.75h-2zM196 472.2h1v2.75h-1zM201 472.2h1v2.75h-1zM195 472.2h2v2.75h-2zM202 472.2h2v2.75h-2zM197 474.9h1v2.75h-1zM202 474.9h1v2.75h-1zM197 474.9h2v2.75h-2zM202 474.9h2v2.75h-2zM197 477.6h1v2.75h-1zM203 477.6h1v2.75h-1zM197 477.6h2v2.75h-2zM203 477.6h2v2.75h-2zM196 480.3h1v2.75h-1zM201 480.3h1v2.75h-1zM195 480.3h2v2.75h-2zM202 480.3h2v2.75h-2zM196 483.0h1v2.75h-1zM202 483.0h1v2.75h-1zM195 483.0h2v2.75h-2zM201 483.0h2v2.75h-2zM197 485.7h1v2.75h-1zM201 485.7h1v2.75h-1zM196 485.7h2v2.75h-2zM201 485.7h2v2.75h-2zM197 488.4h1v2.75h-1zM201 488.4h1v2.75h-1zM195 488.4h2v2.75h-2zM202 488.4h2v2.75h-2zM255 453.3h1v2.75h-1zM261 453.3h1v2.75h-1zM254 453.3h2v2.75h-2zM260 453.3h2v2.75h-2zM255 456.0h1v2.75h-1zM260 456.0h1v2.75h-1zM254 456.0h2v2.75h-2zM261 456.0h2v2.75h-2zM256 458.7h1v2.75h-1zM260 458.7h1v2.75h-1zM255 458.7h2v2.75h-2zM261 458.7h2v2.75h-2zM255 461.4h1v2.75h-1zM260 461.4h1v2.75h-1zM253 461.4h2v2.75h-2zM259 461.4h2v2.75h-2zM255 464.1h1v2.75h-1zM260 464.1h1v2.75h-1zM254 464.1h2v2.75h-2zM260 464.1h2v2.75h-2zM255 466.8h1v2.75h-1zM261 466.8h1v2.75h-1zM255 466.8h2v2.75h-2zM261 466.8h2v2.75h-2zM255 469.5h1v2.75h-1zM259 469.5h1v2.75h-1zM254 469.5h2v2.75h-2zM260 469.5h2v2.75h-2zM256 472.2h1v2.75h-1zM260 472.2h1v2.75h-1zM254 472.2h2v2.75h-2zM261 472.2h2v2.75h-2zM255 474.9h1v2.75h-1zM260 474.9h1v2.75h-1zM255 474.9h2v2.75h-2zM260 474.9h2v2.75h-2zM255 477.6h1v2.75h-1zM259 477.6h1v2.75h-1zM253 477.6h2v2.75h-2zM260 477.6h2v2.75h-2zM256 480.3h1v2.75h-1zM258 480.3h1v2.75h-1zM255 483.0h1v2.75h-1zM259 483.0h1v2.75h-1zM254 483.0h2v2.75h-2zM259 483.0h2v2.75h-2zM253 485.7h1v2.75h-1zM258 485.7h1v2.75h-1zM252 485.7h2v2.75h-2zM259 485.7h2v2.75h-2zM254 488.4h1v2.75h-1zM260 488.4h1v2.75h-1zM253 488.4h2v2.75h-2zM260 488.4h2v2.75h-2zM285 453.3h1v2.75h-1zM287 453.3h1v2.75h-1zM285 456.0h1v2.75h-1zM287 456.0h1v2.75h-1zM285 466.8h1v2.75h-1zM287 466.8h1v2.75h-1zM286 469.5h1v2.75h-1zM288 469.5h1v2.75h-1zM286 472.2h1v2.75h-1zM288 472.2h1v2.75h-1zM287 474.9h1v2.75h-1zM285 477.6h1v2.75h-1zM287 477.6h1v2.75h-1zM287 480.3h1v2.75h-1zM285 488.4h1v2.75h-1zM287 488.4h1v2.75h-1zM311 453.3h1v2.75h-1zM317 453.3h1v2.75h-1zM312 456.0h1v2.75h-1zM317 456.0h1v2.75h-1zM312 458.7h1v2.75h-1zM317 458.7h1v2.75h-1zM311 461.4h1v2.75h-1zM316 461.4h1v2.75h-1zM312 464.1h1v2.75h-1zM316 464.1h1v2.75h-1zM311 466.8h1v2.75h-1zM316 466.8h1v2.75h-1zM312 469.5h1v2.75h-1zM316 469.5h1v2.75h-1zM311 472.2h1v2.75h-1zM316 472.2h1v2.75h-1zM312 474.9h1v2.75h-1zM317 474.9h1v2.75h-1zM311 477.6h1v2.75h-1zM316 477.6h1v2.75h-1zM311 480.3h1v2.75h-1zM316 480.3h1v2.75h-1zM313 483.0h1v2.75h-1zM318 483.0h1v2.75h-1zM312 485.7h1v2.75h-1zM316 485.7h1v2.75h-1zM312 488.4h1v2.75h-1zM316 488.4h1v2.75h-1zM314 453.3h1v2.75h-1zM314 458.7h1v2.75h-1zM314 461.4h1v2.75h-1zM314 464.1h1v2.75h-1zM314 466.8h1v2.75h-1zM313 472.2h1v2.75h-1zM313 477.6h1v2.75h-1zM314 483.0h1v2.75h-1zM314 485.7h1v2.75h-1zM315 488.4h1v2.75h-1zM345 453.3h1v2.75h-1zM347 453.3h1v2.75h-1zM345 456.0h1v2.75h-1zM347 456.0h1v2.75h-1zM344 458.7h1v2.75h-1zM346 458.7h1v2.75h-1zM345 461.4h1v2.75h-1zM347 461.4h1v2.75h-1zM345 464.1h1v2.75h-1zM347 464.1h1v2.75h-1zM345 466.8h1v2.75h-1zM347 466.8h1v2.75h-1zM345 469.5h1v2.75h-1zM347 469.5h1v2.75h-1zM344 472.2h1v2.75h-1zM349 472.2h1v2.75h-1zM344 474.9h1v2.75h-1zM348 474.9h1v2.75h-1zM345 477.6h1v2.75h-1zM347 477.6h1v2.75h-1zM345 480.3h1v2.75h-1zM347 480.3h1v2.75h-1zM345 483.0h1v2.75h-1zM347 483.0h1v2.75h-1zM345 485.7h1v2.75h-1zM347 485.7h1v2.75h-1zM345 488.4h1v2.75h-1zM347 488.4h1v2.75h-1zM374 474.9h1v2.75h-1zM400 461.4h1v2.75h-1zM402 461.4h1v2.75h-1zM401 464.1h1v2.75h-1zM403 464.1h1v2.75h-1zM401 472.2h1v2.75h-1zM403 472.2h1v2.75h-1zM401 474.9h1v2.75h-1zM403 474.9h1v2.75h-1zM401 477.6h1v2.75h-1zM403 477.6h1v2.75h-1zM402 480.3h1v2.75h-1zM433 453.3h1v2.75h-1zM435 453.3h1v2.75h-1zM433 456.0h1v2.75h-1zM435 456.0h1v2.75h-1zM433 458.7h1v2.75h-1zM435 458.7h1v2.75h-1zM433 461.4h1v2.75h-1zM435 461.4h1v2.75h-1zM433 464.1h1v2.75h-1zM435 464.1h1v2.75h-1zM432 466.8h1v2.75h-1zM434 466.8h1v2.75h-1zM431 469.5h1v2.75h-1zM433 469.5h1v2.75h-1zM432 472.2h1v2.75h-1zM434 472.2h1v2.75h-1zM431 474.9h1v2.75h-1zM433 474.9h1v2.75h-1zM432 477.6h1v2.75h-1zM434 477.6h1v2.75h-1zM432 480.3h1v2.75h-1zM434 480.3h1v2.75h-1zM432 483.0h1v2.75h-1zM434 483.0h1v2.75h-1zM432 485.7h1v2.75h-1zM434 485.7h1v2.75h-1zM431 488.4h1v2.75h-1zM433 488.4h1v2.75h-1zM549 453.3h1v2.75h-1zM551 453.3h1v2.75h-1zM550 456.0h1v2.75h-1zM552 456.0h1v2.75h-1zM550 458.7h1v2.75h-1zM552 458.7h1v2.75h-1zM550 461.4h1v2.75h-1zM552 461.4h1v2.75h-1zM550 466.8h1v2.75h-1zM552 466.8h1v2.75h-1zM548 469.5h1v2.75h-1zM550 469.5h1v2.75h-1zM549 474.9h1v2.75h-1zM551 474.9h1v2.75h-1zM548 477.6h1v2.75h-1zM550 477.6h1v2.75h-1zM549 480.3h1v2.75h-1zM551 480.3h1v2.75h-1zM550 485.7h1v2.75h-1zM552 485.7h1v2.75h-1zM549 488.4h1v2.75h-1zM551 488.4h1v2.75h-1zM577 458.7h1v2.75h-1zM579 458.7h1v2.75h-1zM576 474.9h1v2.75h-1zM578 474.9h1v2.75h-1zM576 480.3h1v2.75h-1zM578 480.3h1v2.75h-1zM576 483.0h1v2.75h-1zM578 483.0h1v2.75h-1zM577 485.7h1v2.75h-1zM606 453.3h1v2.75h-1zM608 453.3h1v2.75h-1zM607 461.4h1v2.75h-1zM609 461.4h1v2.75h-1zM607 464.1h1v2.75h-1zM609 464.1h1v2.75h-1zM607 466.8h1v2.75h-1zM609 466.8h1v2.75h-1zM607 469.5h1v2.75h-1zM609 469.5h1v2.75h-1zM607 472.2h1v2.75h-1zM609 472.2h1v2.75h-1zM607 474.9h1v2.75h-1zM609 474.9h1v2.75h-1zM606 477.6h1v2.75h-1zM608 477.6h1v2.75h-1zM606 480.3h1v2.75h-1zM608 480.3h1v2.75h-1zM606 483.0h1v2.75h-1zM608 483.0h1v2.75h-1zM606 485.7h1v2.75h-1zM608 485.7h1v2.75h-1zM606 488.4h1v2.75h-1zM608 488.4h1v2.75h-1zM636 453.3h1v2.75h-1zM638 453.3h1v2.75h-1zM635 456.0h1v2.75h-1zM639 456.0h1v2.75h-1zM636 458.7h1v2.75h-1zM638 458.7h1v2.75h-1zM636 461.4h1v2.75h-1zM638 461.4h1v2.75h-1zM634 464.1h1v2.75h-1zM640 464.1h1v2.75h-1zM635 466.8h1v2.75h-1zM641 466.8h1v2.75h-1zM636 469.5h1v2.75h-1zM638 469.5h1v2.75h-1zM635 472.2h1v2.75h-1zM640 472.2h1v2.75h-1zM633 474.9h1v2.75h-1zM639 474.9h1v2.75h-1zM635 477.6h1v2.75h-1zM637 477.6h1v2.75h-1zM635 480.3h1v2.75h-1zM637 480.3h1v2.75h-1zM635 483.0h1v2.75h-1zM637 483.0h1v2.75h-1zM634 485.7h1v2.75h-1zM638 485.7h1v2.75h-1zM633 488.4h1v2.75h-1zM638 488.4h1v2.75h-1z"/>
<path fill="#f64461" d="M110 453.3h1v2.75h-1zM112 453.3h1v2.75h-1zM109 456.0h1v2.75h-1zM111 456.0h1v2.75h-1zM110 458.7h1v2.75h-1zM112 458.7h1v2.75h-1zM110 461.4h1v2.75h-1zM112 461.4h1v2.75h-1zM109 464.1h1v2.75h-1zM111 464.1h1v2.75h-1zM109 466.8h1v2.75h-1zM111 466.8h1v2.75h-1zM109 469.5h1v2.75h-1zM111 469.5h1v2.75h-1zM110 472.2h1v2.75h-1zM112 472.2h1v2.75h-1zM111 474.9h1v2.75h-1zM113 474.9h1v2.75h-1zM110 477.6h1v2.75h-1zM112 477.6h1v2.75h-1zM111 480.3h1v2.75h-1zM113 480.3h1v2.75h-1zM111 483.0h1v2.75h-1zM113 483.0h1v2.75h-1zM111 485.7h1v2.75h-1zM113 485.7h1v2.75h-1zM111 488.4h1v2.75h-1zM113 488.4h1v2.75h-1zM140 453.3h1v2.75h-1zM142 453.3h1v2.75h-1zM139 456.0h1v2.75h-1zM141 456.0h1v2.75h-1zM139 458.7h1v2.75h-1zM141 458.7h1v2.75h-1zM139 461.4h1v2.75h-1zM141 461.4h1v2.75h-1zM139 464.1h1v2.75h-1zM141 464.1h1v2.75h-1zM139 466.8h1v2.75h-1zM141 466.8h1v2.75h-1zM139 469.5h1v2.75h-1zM141 469.5h1v2.75h-1zM139 472.2h1v2.75h-1zM141 472.2h1v2.75h-1zM140 474.9h1v2.75h-1zM142 474.9h1v2.75h-1zM141 477.6h1v2.75h-1zM143 477.6h1v2.75h-1zM141 480.3h1v2.75h-1zM143 480.3h1v2.75h-1zM141 483.0h1v2.75h-1zM143 483.0h1v2.75h-1zM141 485.7h1v2.75h-1zM143 485.7h1v2.75h-1zM141 488.4h1v2.75h-1zM143 488.4h1v2.75h-1zM142 453.3h1v2.75h-1zM142 456.0h1v2.75h-1zM142 458.7h1v2.75h-1zM142 461.4h1v2.75h-1zM142 464.1h1v2.75h-1zM142 466.8h1v2.75h-1zM142 469.5h1v2.75h-1zM141 483.0h1v2.75h-1zM147 456.0h1v2.75h-1zM147 458.7h1v2.75h-1zM147 464.1h1v2.75h-1zM148 466.8h1v2.75h-1zM148 469.5h1v2.75h-1zM148 474.9h1v2.75h-1zM148 480.3h1v2.75h-1zM148 488.4h1v2.75h-1zM171 458.7h1v2.75h-1zM173 458.7h1v2.75h-1zM171 466.8h1v2.75h-1zM173 466.8h1v2.75h-1zM171 469.5h1v2.75h-1zM173 469.5h1v2.75h-1zM170 480.3h1v2.75h-1zM172 480.3h1v2.75h-1zM171 485.7h1v2.75h-1zM173 485.7h1v2.75h-1zM198 453.3h1v2.75h-1zM200 453.3h1v2.75h-1zM198 456.0h1v2.75h-1zM200 456.0h1v2.75h-1zM198 458.7h1v2.75h-1zM200 458.7h1v2.75h-1zM199 461.4h1v2.75h-1zM201 461.4h1v2.75h-1zM199 464.1h1v2.75h-1zM201 464.1h1v2.75h-1zM199 466.8h1v2.75h-1zM201 466.8h1v2.75h-1zM199 469.5h1v2.75h-1zM201 469.5h1v2.75h-1zM198 472.2h1v2.75h-1zM200 472.2h1v2.75h-1zM199 474.9h1v2.75h-1zM201 474.9h1v2.75h-1zM199 477.6h1v2.75h-1zM201 477.6h1v2.75h-1zM198 480.3h1v2.75h-1zM200 480.3h1v2.75h-1zM198 483.0h1v2.75h-1zM200 483.0h1v2.75h-1zM198 485.7h1v2.75h-1zM200 485.7h1v2.75h-1zM198 488.4h1v2.75h-1zM200 488.4h1v2.75h-1zM257 453.3h1v2.75h-1zM259 453.3h1v2.75h-1zM257 456.0h1v2.75h-1zM259 456.0h1v2.75h-1zM257 458.7h1v2.75h-1zM259 458.7h1v2.75h-1zM256 461.4h1v2.75h-1zM258 461.4h1v2.75h-1zM257 464.1h1v2.75h-1zM259 464.1h1v2.75h-1zM257 466.8h1v2.75h-1zM259 466.8h1v2.75h-1zM256 469.5h1v2.75h-1zM258 469.5h1v2.75h-1zM257 472.2h1v2.75h-1zM259 472.2h1v2.75h-1zM257 474.9h1v2.75h-1zM259 474.9h1v2.75h-1zM256 477.6h1v2.75h-1zM258 477.6h1v2.75h-1zM256 483.0h1v2.75h-1zM258 483.0h1v2.75h-1zM255 485.7h1v2.75h-1zM257 485.7h1v2.75h-1zM256 488.4h1v2.75h-1zM258 488.4h1v2.75h-1zM286 453.3h1v2.75h-1zM286 456.0h1v2.75h-1zM285 458.7h1v2.75h-1zM284 461.4h1v2.75h-1zM285 464.1h1v2.75h-1zM286 466.8h1v2.75h-1zM287 469.5h1v2.75h-1zM287 472.2h1v2.75h-1zM286 477.6h1v2.75h-1zM287 483.0h1v2.75h-1zM286 485.7h1v2.75h-1zM286 488.4h1v2.75h-1zM313 453.3h1v2.75h-1zM315 453.3h1v2.75h-1zM313 456.0h1v2.75h-1zM315 456.0h1v2.75h-1zM313 458.7h1v2.75h-1zM315 458.7h1v2.75h-1zM313 461.4h1v2.75h-1zM315 461.4h1v2.75h-1zM313 464.1h1v2.75h-1zM315 464.1h1v2.75h-1zM313 466.8h1v2.75h-1zM315 466.8h1v2.75h-1zM313 469.5h1v2.75h-1zM315 469.5h1v2.75h-1zM313 472.2h1v2.75h-1zM315 472.2h1v2.75h-1zM313 474.9h1v2.75h-1zM315 474.9h1v2.75h-1zM313 477.6h1v2.75h-1zM315 477.6h1v2.75h-1zM313 480.3h1v2.75h-1zM315 480.3h1v2.75h-1zM314 483.0h1v2.75h-1zM316 483.0h1v2.75h-1zM313 485.7h1v2.75h-1zM315 485.7h1v2.75h-1zM313 488.4h1v2.75h-1zM315 488.4h1v2.75h-1zM345 472.2h1v2.75h-1zM347 472.2h1v2.75h-1zM345 474.9h1v2.75h-1zM347 474.9h1v2.75h-1zM402 453.3h1v2.75h-1zM401 456.0h1v2.75h-1zM402 458.7h1v2.75h-1zM402 464.1h1v2.75h-1zM402 466.8h1v2.75h-1zM403 469.5h1v2.75h-1zM402 477.6h1v2.75h-1zM402 483.0h1v2.75h-1zM403 485.7h1v2.75h-1zM403 488.4h1v2.75h-1zM433 477.6h1v2.75h-1zM551 458.7h1v2.75h-1zM551 464.1h1v2.75h-1zM549 469.5h1v2.75h-1zM550 472.2h1v2.75h-1zM550 483.0h1v2.75h-1zM550 488.4h1v2.75h-1zM578 453.3h1v2.75h-1zM578 456.0h1v2.75h-1zM578 458.7h1v2.75h-1zM578 461.4h1v2.75h-1zM578 464.1h1v2.75h-1zM577 466.8h1v2.75h-1zM577 469.5h1v2.75h-1zM577 472.2h1v2.75h-1zM577 477.6h1v2.75h-1zM577 483.0h1v2.75h-1zM577 488.4h1v2.75h-1zM607 456.0h1v2.75h-1zM608 458.7h1v2.75h-1zM608 466.8h1v2.75h-1zM608 469.5h1v2.75h-1zM636 456.0h1v2.75h-1zM638 456.0h1v2.75h-1zM636 464.1h1v2.75h-1zM638 464.1h1v2.75h-1zM637 466.8h1v2.75h-1zM639 466.8h1v2.75h-1zM636 472.2h1v2.75h-1zM638 472.2h1v2.75h-1zM635 474.9h1v2.75h-1zM637 474.9h1v2.75h-1zM635 485.7h1v2.75h-1zM637 485.7h1v2.75h-1zM635 488.4h1v2.75h-1zM637 488.4h1v2.75h-1z"/>
<path fill="#ff8c3a" d="M147 453.3h1v2.75h-1zM148 461.4h1v2.75h-1zM148 472.2h1v2.75h-1zM148 477.6h1v2.75h-1zM148 483.0h1v2.75h-1zM148 485.7h1v2.75h-1zM171 453.3h1v2.75h-1zM172 456.0h1v2.75h-1zM172 461.4h1v2.75h-1zM172 464.1h1v2.75h-1zM171 472.2h1v2.75h-1zM172 474.9h1v2.75h-1zM172 477.6h1v2.75h-1zM172 483.0h1v2.75h-1zM171 488.4h1v2.75h-1zM346 453.3h1v2.75h-1zM346 456.0h1v2.75h-1zM345 458.7h1v2.75h-1zM346 461.4h1v2.75h-1zM346 464.1h1v2.75h-1zM346 466.8h1v2.75h-1zM346 469.5h1v2.75h-1zM346 477.6h1v2.75h-1zM346 480.3h1v2.75h-1zM346 483.0h1v2.75h-1zM346 485.7h1v2.75h-1zM346 488.4h1v2.75h-1zM401 461.4h1v2.75h-1zM402 472.2h1v2.75h-1zM402 474.9h1v2.75h-1zM434 453.3h1v2.75h-1zM434 456.0h1v2.75h-1zM434 458.7h1v2.75h-1zM434 461.4h1v2.75h-1zM434 464.1h1v2.75h-1zM433 466.8h1v2.75h-1zM432 469.5h1v2.75h-1zM433 472.2h1v2.75h-1zM432 474.9h1v2.75h-1zM433 483.0h1v2.75h-1zM433 485.7h1v2.75h-1zM432 488.4h1v2.75h-1zM550 453.3h1v2.75h-1zM551 456.0h1v2.75h-1zM551 461.4h1v2.75h-1zM551 466.8h1v2.75h-1zM550 474.9h1v2.75h-1zM549 477.6h1v2.75h-1zM550 480.3h1v2.75h-1zM551 485.7h1v2.75h-1zM577 474.9h1v2.75h-1zM577 480.3h1v2.75h-1zM608 461.4h1v2.75h-1zM608 464.1h1v2.75h-1zM608 474.9h1v2.75h-1zM607 480.3h1v2.75h-1zM607 483.0h1v2.75h-1zM607 485.7h1v2.75h-1zM607 488.4h1v2.75h-1zM637 453.3h1v2.75h-1zM637 458.7h1v2.75h-1zM637 461.4h1v2.75h-1zM637 469.5h1v2.75h-1zM636 477.6h1v2.75h-1zM636 480.3h1v2.75h-1zM636 483.0h1v2.75h-1z"/>
<path fill="#ffd62c" d="M172 458.7h1v2.75h-1zM172 466.8h1v2.75h-1zM172 469.5h1v2.75h-1zM171 480.3h1v2.75h-1zM172 485.7h1v2.75h-1zM200 464.1h1v2.75h-1zM200 469.5h1v2.75h-1zM200 477.6h1v2.75h-1zM258 456.0h1v2.75h-1zM257 461.4h1v2.75h-1zM258 466.8h1v2.75h-1zM258 472.2h1v2.75h-1zM257 477.6h1v2.75h-1zM257 480.3h1v2.75h-1zM257 483.0h1v2.75h-1zM257 488.4h1v2.75h-1zM314 456.0h1v2.75h-1zM314 458.7h1v2.75h-1zM314 464.1h1v2.75h-1zM314 469.5h1v2.75h-1zM314 477.6h1v2.75h-1zM314 485.7h1v2.75h-1zM346 472.2h1v2.75h-1zM346 474.9h1v2.75h-1zM433 480.3h1v2.75h-1zM607 453.3h1v2.75h-1zM608 472.2h1v2.75h-1zM607 477.6h1v2.75h-1zM637 456.0h1v2.75h-1zM637 464.1h1v2.75h-1zM638 466.8h1v2.75h-1zM637 472.2h1v2.75h-1zM636 474.9h1v2.75h-1zM636 485.7h1v2.75h-1zM636 488.4h1v2.75h-1z"/>
<path fill="#fffa50" d="M111 453.3h1v2.75h-1zM110 456.0h1v2.75h-1zM111 458.7h1v2.75h-1zM111 461.4h1v2.75h-1zM110 464.1h1v2.75h-1zM110 466.8h1v2.75h-1zM110 469.5h1v2.75h-1zM111 472.2h1v2.75h-1zM112 474.9h1v2.75h-1zM111 477.6h1v2.75h-1zM112 480.3h1v2.75h-1zM112 483.0h1v2.75h-1zM112 485.7h1v2.75h-1zM112 488.4h1v2.75h-1zM141 453.3h1v2.75h-1zM140 456.0h1v2.75h-1zM140 458.7h1v2.75h-1zM140 461.4h1v2.75h-1zM140 464.1h1v2.75h-1zM140 466.8h1v2.75h-1zM140 469.5h1v2.75h-1zM140 472.2h1v2.75h-1zM141 474.9h1v2.75h-1zM142 477.6h1v2.75h-1zM142 480.3h1v2.75h-1zM142 483.0h1v2.75h-1zM142 485.7h1v2.75h-1zM142 488.4h1v2.75h-1zM199 453.3h1v2.75h-1zM199 456.0h1v2.75h-1zM199 458.7h1v2.75h-1zM200 461.4h1v2.75h-1zM200 466.8h1v2.75h-1zM199 472.2h1v2.75h-1zM200 474.9h1v2.75h-1zM199 480.3h1v2.75h-1zM199 483.0h1v2.75h-1zM199 485.7h1v2.75h-1zM199 488.4h1v2.75h-1zM258 453.3h1v2.75h-1zM258 458.7h1v2.75h-1zM258 464.1h1v2.75h-1zM257 469.5h1v2.75h-1zM258 474.9h1v2.75h-1zM256 485.7h1v2.75h-1zM314 453.3h1v2.75h-1zM314 461.4h1v2.75h-1zM314 466.8h1v2.75h-1zM314 472.2h1v2.75h-1zM314 474.9h1v2.75h-1zM314 480.3h1v2.75h-1zM315 483.0h1v2.75h-1zM314 488.4h1v2.75h-1z"/>
<path fill="#890abd" d="M232 418.1h1v2.75h-1zM233 426.2h1v2.75h-1zM233 431.6h1v2.75h-1zM233 434.3h1v2.75h-1zM233 437.1h1v2.75h-1zM233 439.8h1v2.75h-1zM233 447.9h1v2.75h-1zM233 469.5h1v2.75h-1zM233 477.6h1v2.75h-1zM233 485.7h1v2.75h-1zM233 488.4h1v2.75h-1zM233 491.1h1v2.75h-1zM233 493.9h1v2.75h-1zM233 502.0h1v2.75h-1zM232 510.1h1v2.75h-1zM233 512.8h1v2.75h-1zM233 523.6h1v2.75h-1zM233 534.4h1v2.75h-1z"/>
<path fill="#b310a8" d="M232 410.0h1v2.75h-1zM233 410.0h1v2.75h-1zM224 412.7h1v2.75h-1zM231 412.7h1v2.75h-1zM232 412.7h1v2.75h-1zM233 412.7h1v2.75h-1zM224 415.4h1v2.75h-1zM231 415.4h1v2.75h-1zM232 415.4h1v2.75h-1zM233 415.4h1v2.75h-1zM224 418.1h1v2.75h-1zM233 418.1h1v2.75h-1zM231 420.8h1v2.75h-1zM232 420.8h1v2.75h-1zM233 420.8h1v2.75h-1zM232 423.5h1v2.75h-1zM233 423.5h1v2.75h-1zM224 426.2h1v2.75h-1zM232 426.2h1v2.75h-1zM231 428.9h1v2.75h-1zM233 428.9h1v2.75h-1zM231 431.6h1v2.75h-1zM232 431.6h1v2.75h-1zM231 434.3h1v2.75h-1zM224 437.1h1v2.75h-1zM231 437.1h1v2.75h-1zM232 437.1h1v2.75h-1zM234 437.1h1v2.75h-1zM235 437.1h1v2.75h-1zM232 439.8h1v2.75h-1zM235 439.8h1v2.75h-1zM231 442.5h1v2.75h-1zM232 442.5h1v2.75h-1zM233 442.5h1v2.75h-1zM234 442.5h1v2.75h-1zM224 445.2h1v2.75h-1zM232 445.2h1v2.75h-1zM233 445.2h1v2.75h-1zM231 447.9h1v2.75h-1zM232 447.9h1v2.75h-1zM235 447.9h1v2.75h-1zM232 450.6h1v2.75h-1zM233 450.6h1v2.75h-1zM235 450.6h1v2.75h-1zM231 453.3h1v2.75h-1zM232 453.3h1v2.75h-1zM233 453.3h1v2.75h-1zM232 456.0h1v2.75h-1zM233 456.0h1v2.75h-1zM231 458.7h1v2.75h-1zM232 458.7h1v2.75h-1zM233 458.7h1v2.75h-1zM235 458.7h1v2.75h-1zM224 461.4h1v2.75h-1zM232 461.4h1v2.75h-1zM233 461.4h1v2.75h-1zM234 461.4h1v2.75h-1zM232 464.1h1v2.75h-1zM233 464.1h1v2.75h-1zM232 466.8h1v2.75h-1zM233 466.8h1v2.75h-1zM235 466.8h1v2.75h-1zM224 469.5h1v2.75h-1zM232 469.5h1v2.75h-1zM232 472.2h1v2.75h-1zM233 472.2h1v2.75h-1zM232 474.9h1v2.75h-1zM233 474.9h1v2.75h-1zM232 477.6h1v2.75h-1zM224 480.3h1v2.75h-1zM231 480.3h1v2.75h-1zM232 480.3h1v2.75h-1zM233 480.3h1v2.75h-1zM232 483.0h1v2.75h-1zM233 483.0h1v2.75h-1zM235 483.0h1v2.75h-1zM231 485.7h1v2.75h-1zM232 485.7h1v2.75h-1zM224 488.4h1v2.75h-1zM235 488.4h1v2.75h-1zM235 491.1h1v2.75h-1zM231 493.9h1v2.75h-1zM232 493.9h1v2.75h-1zM235 493.9h1v2.75h-1zM224 496.6h1v2.75h-1zM231 496.6h1v2.75h-1zM232 496.6h1v2.75h-1zM233 496.6h1v2.75h-1zM234 496.6h1v2.75h-1zM231 499.3h1v2.75h-1zM232 499.3h1v2.75h-1zM233 499.3h1v2.75h-1zM232 502.0h1v2.75h-1zM232 504.7h1v2.75h-1zM233 504.7h1v2.75h-1zM233 510.1h1v2.75h-1zM234 510.1h1v2.75h-1zM231 512.8h1v2.75h-1zM232 512.8h1v2.75h-1zM232 515.5h1v2.75h-1zM233 515.5h1v2.75h-1zM232 518.2h1v2.75h-1zM233 518.2h1v2.75h-1zM234 518.2h1v2.75h-1zM224 520.9h1v2.75h-1zM231 520.9h1v2.75h-1zM232 520.9h1v2.75h-1zM233 520.9h1v2.75h-1zM232 523.6h1v2.75h-1zM232 526.3h1v2.75h-1zM233 526.3h1v2.75h-1zM231 529.0h1v2.75h-1zM233 529.0h1v2.75h-1zM232 531.7h1v2.75h-1zM233 531.7h1v2.75h-1zM232 534.4h1v2.75h-1zM234 534.4h1v2.75h-1z"/>
<path fill="#de178d" d="M224 410.0h1v2.75h-1zM230 410.0h1v2.75h-1zM231 410.0h1v2.75h-1zM521 410.0h1v2.75h-1zM813 410.0h1v2.75h-1zM230 412.7h1v2.75h-1zM234 412.7h1v2.75h-1zM235 412.7h1v2.75h-1zM521 412.7h1v2.75h-1zM813 412.7h1v2.75h-1zM225 415.4h1v2.75h-1zM230 415.4h1v2.75h-1zM234 415.4h1v2.75h-1zM235 415.4h1v2.75h-1zM521 415.4h1v2.75h-1zM813 415.4h1v2.75h-1zM230 418.1h1v2.75h-1zM231 418.1h1v2.75h-1zM234 418.1h1v2.75h-1zM235 418.1h1v2.75h-1zM813 418.1h1v2.75h-1zM230 420.8h1v2.75h-1zM235 420.8h1v2.75h-1zM521 420.8h1v2.75h-1zM813 420.8h1v2.75h-1zM224 423.5h1v2.75h-1zM231 423.5h1v2.75h-1zM234 423.5h1v2.75h-1zM235 423.5h1v2.75h-1zM521 423.5h1v2.75h-1zM813 423.5h1v2.75h-1zM231 426.2h1v2.75h-1zM234 426.2h1v2.75h-1zM235 426.2h1v2.75h-1zM813 426.2h1v2.75h-1zM232 428.9h1v2.75h-1zM521 428.9h1v2.75h-1zM813 428.9h1v2.75h-1zM521 431.6h1v2.75h-1zM813 431.6h1v2.75h-1zM224 434.3h1v2.75h-1zM232 434.3h1v2.75h-1zM234 434.3h1v2.75h-1zM521 434.3h1v2.75h-1zM813 434.3h1v2.75h-1zM225 437.1h1v2.75h-1zM230 437.1h1v2.75h-1zM521 437.1h1v2.75h-1zM813 437.1h1v2.75h-1zM224 439.8h1v2.75h-1zM230 439.8h1v2.75h-1zM231 439.8h1v2.75h-1zM521 439.8h1v2.75h-1zM224 442.5h1v2.75h-1zM225 442.5h1v2.75h-1zM235 442.5h1v2.75h-1zM230 445.2h1v2.75h-1zM231 445.2h1v2.75h-1zM234 445.2h1v2.75h-1zM235 445.2h1v2.75h-1zM521 445.2h1v2.75h-1zM813 445.2h1v2.75h-1zM224 447.9h1v2.75h-1zM225 447.9h1v2.75h-1zM234 447.9h1v2.75h-1zM521 447.9h1v2.75h-1zM813 447.9h1v2.75h-1zM224 450.6h1v2.75h-1zM231 450.6h1v2.75h-1zM234 450.6h1v2.75h-1zM521 450.6h1v2.75h-1zM813 450.6h1v2.75h-1zM224 453.3h1v2.75h-1zM235 453.3h1v2.75h-1zM521 453.3h1v2.75h-1zM813 453.3h1v2.75h-1zM224 456.0h1v2.75h-1zM231 456.0h1v2.75h-1zM234 456.0h1v2.75h-1zM235 456.0h1v2.75h-1zM521 456.0h1v2.75h-1zM813 456.0h1v2.75h-1zM224 458.7h1v2.75h-1zM230 458.7h1v2.75h-1zM234 458.7h1v2.75h-1zM521 458.7h1v2.75h-1zM230 461.4h1v2.75h-1zM231 461.4h1v2.75h-1zM235 461.4h1v2.75h-1zM521 461.4h1v2.75h-1zM813 461.4h1v2.75h-1zM224 464.1h1v2.75h-1zM225 464.1h1v2.75h-1zM231 464.1h1v2.75h-1zM234 464.1h1v2.75h-1zM235 464.1h1v2.75h-1zM521 464.1h1v2.75h-1zM813 464.1h1v2.75h-1zM224 466.8h1v2.75h-1zM231 466.8h1v2.75h-1zM234 466.8h1v2.75h-1zM521 466.8h1v2.75h-1zM231 469.5h1v2.75h-1zM234 469.5h1v2.75h-1zM235 469.5h1v2.75h-1zM813 469.5h1v2.75h-1zM224 472.2h1v2.75h-1zM231 472.2h1v2.75h-1zM234 472.2h1v2.75h-1zM235 472.2h1v2.75h-1zM224 474.9h1v2.75h-1zM230 474.9h1v2.75h-1zM231 474.9h1v2.75h-1zM234 474.9h1v2.75h-1zM231 477.6h1v2.75h-1zM235 477.6h1v2.75h-1zM234 480.3h1v2.75h-1zM235 480.3h1v2.75h-1zM813 480.3h1v2.75h-1zM224 483.0h1v2.75h-1zM231 483.0h1v2.75h-1zM813 483.0h1v2.75h-1zM224 485.7h1v2.75h-1zM235 485.7h1v2.75h-1zM521 485.7h1v2.75h-1zM230 488.4h1v2.75h-1zM231 488.4h1v2.75h-1zM232 488.4h1v2.75h-1zM521 488.4h1v2.75h-1zM224 491.1h1v2.75h-1zM225 491.1h1v2.75h-1zM231 491.1h1v2.75h-1zM232 491.1h1v2.75h-1zM234 491.1h1v2.75h-1zM521 491.1h1v2.75h-1zM813 491.1h1v2.75h-1zM224 493.9h1v2.75h-1zM813 493.9h1v2.75h-1zM230 496.6h1v2.75h-1zM235 496.6h1v2.75h-1zM224 499.3h1v2.75h-1zM234 499.3h1v2.75h-1zM521 499.3h1v2.75h-1zM813 499.3h1v2.75h-1zM224 502.0h1v2.75h-1zM225 502.0h1v2.75h-1zM230 502.0h1v2.75h-1zM231 502.0h1v2.75h-1zM234 502.0h1v2.75h-1zM521 502.0h1v2.75h-1zM813 502.0h1v2.75h-1zM225 504.7h1v2.75h-1zM230 504.7h1v2.75h-1zM231 504.7h1v2.75h-1zM234 504.7h1v2.75h-1zM521 504.7h1v2.75h-1zM224 510.1h1v2.75h-1zM225 510.1h1v2.75h-1zM230 510.1h1v2.75h-1zM231 510.1h1v2.75h-1zM235 510.1h1v2.75h-1zM813 510.1h1v2.75h-1zM224 512.8h1v2.75h-1zM225 512.8h1v2.75h-1zM235 512.8h1v2.75h-1zM521 512.8h1v2.75h-1zM224 515.5h1v2.75h-1zM231 515.5h1v2.75h-1zM234 515.5h1v2.75h-1zM813 515.5h1v2.75h-1zM230 518.2h1v2.75h-1zM231 518.2h1v2.75h-1zM225 520.9h1v2.75h-1zM234 520.9h1v2.75h-1zM235 520.9h1v2.75h-1zM521 520.9h1v2.75h-1zM230 523.6h1v2.75h-1zM231 523.6h1v2.75h-1zM235 523.6h1v2.75h-1zM521 523.6h1v2.75h-1zM813 523.6h1v2.75h-1zM224 526.3h1v2.75h-1zM230 526.3h1v2.75h-1zM231 526.3h1v2.75h-1zM234 526.3h1v2.75h-1zM235 526.3h1v2.75h-1zM521 526.3h1v2.75h-1zM230 529.0h1v2.75h-1zM232 529.0h1v2.75h-1zM234 529.0h1v2.75h-1zM235 529.0h1v2.75h-1zM521 529.0h1v2.75h-1zM813 529.0h1v2.75h-1zM230 531.7h1v2.75h-1zM231 531.7h1v2.75h-1zM235 531.7h1v2.75h-1zM521 531.7h1v2.75h-1zM224 534.4h1v2.75h-1zM225 534.4h1v2.75h-1zM231 534.4h1v2.75h-1zM521 534.4h1v2.75h-1zM813 534.4h1v2.75h-1z"/>
<path fill="#f64461" d="M226 410.0h1v2.75h-1zM234 410.0h1v2.75h-1zM235 410.0h1v2.75h-1zM521 418.1h1v2.75h-1zM224 420.8h1v2.75h-1zM225 420.8h1v2.75h-1zM234 420.8h1v2.75h-1zM230 423.5h1v2.75h-1zM225 426.2h1v2.75h-1zM229 426.2h1v2.75h-1zM230 426.2h1v2.75h-1zM224 428.9h1v2.75h-1zM225 428.9h1v2.75h-1zM230 428.9h1v2.75h-1zM234 428.9h1v2.75h-1zM235 428.9h1v2.75h-1zM224 431.6h1v2.75h-1zM225 431.6h1v2.75h-1zM229 431.6h1v2.75h-1zM230 431.6h1v2.75h-1zM234 431.6h1v2.75h-1zM235 431.6h1v2.75h-1zM225 434.3h1v2.75h-1zM226 434.3h1v2.75h-1zM230 434.3h1v2.75h-1zM235 434.3h1v2.75h-1zM226 437.1h1v2.75h-1zM225 439.8h1v2.75h-1zM226 439.8h1v2.75h-1zM234 439.8h1v2.75h-1zM813 439.8h1v2.75h-1zM230 442.5h1v2.75h-1zM521 442.5h1v2.75h-1zM225 445.2h1v2.75h-1zM230 447.9h1v2.75h-1zM225 450.6h1v2.75h-1zM226 450.6h1v2.75h-1zM229 450.6h1v2.75h-1zM230 450.6h1v2.75h-1zM225 453.3h1v2.75h-1zM230 453.3h1v2.75h-1zM234 453.3h1v2.75h-1zM225 456.0h1v2.75h-1zM226 456.0h1v2.75h-1zM230 456.0h1v2.75h-1zM226 464.1h1v2.75h-1zM230 464.1h1v2.75h-1zM225 466.8h1v2.75h-1zM230 466.8h1v2.75h-1zM813 466.8h1v2.75h-1zM225 469.5h1v2.75h-1zM226 469.5h1v2.75h-1zM230 469.5h1v2.75h-1zM521 469.5h1v2.75h-1zM229 472.2h1v2.75h-1zM230 472.2h1v2.75h-1zM521 472.2h1v2.75h-1zM813 472.2h1v2.75h-1zM225 474.9h1v2.75h-1zM229 474.9h1v2.75h-1zM235 474.9h1v2.75h-1zM521 474.9h1v2.75h-1zM813 474.9h1v2.75h-1zM224 477.6h1v2.75h-1zM230 477.6h1v2.75h-1zM234 477.6h1v2.75h-1zM813 477.6h1v2.75h-1zM225 480.3h1v2.75h-1zM226 480.3h1v2.75h-1zM230 480.3h1v2.75h-1zM521 480.3h1v2.75h-1zM225 483.0h1v2.75h-1zM230 483.0h1v2.75h-1zM234 483.0h1v2.75h-1zM225 485.7h1v2.75h-1zM230 485.7h1v2.75h-1zM234 485.7h1v2.75h-1zM225 488.4h1v2.75h-1zM234 488.4h1v2.75h-1zM230 491.1h1v2.75h-1zM225 493.9h1v2.75h-1zM230 493.9h1v2.75h-1zM234 493.9h1v2.75h-1zM521 493.9h1v2.75h-1zM226 496.6h1v2.75h-1zM521 496.6h1v2.75h-1zM813 496.6h1v2.75h-1zM230 499.3h1v2.75h-1zM235 499.3h1v2.75h-1zM235 502.0h1v2.75h-1zM224 504.7h1v2.75h-1zM226 504.7h1v2.75h-1zM235 504.7h1v2.75h-1zM813 504.7h1v2.75h-1zM226 510.1h1v2.75h-1zM521 510.1h1v2.75h-1zM226 512.8h1v2.75h-1zM229 512.8h1v2.75h-1zM230 512.8h1v2.75h-1zM234 512.8h1v2.75h-1zM813 512.8h1v2.75h-1zM225 515.5h1v2.75h-1zM226 515.5h1v2.75h-1zM230 515.5h1v2.75h-1zM235 515.5h1v2.75h-1zM521 515.5h1v2.75h-1zM224 518.2h1v2.75h-1zM225 518.2h1v2.75h-1zM235 518.2h1v2.75h-1zM521 518.2h1v2.75h-1zM226 520.9h1v2.75h-1zM230 520.9h1v2.75h-1zM224 523.6h1v2.75h-1zM225 523.6h1v2.75h-1zM226 523.6h1v2.75h-1zM234 523.6h1v2.75h-1zM225 526.3h1v2.75h-1zM224 529.0h1v2.75h-1zM225 529.0h1v2.75h-1zM226 529.0h1v2.75h-1zM224 531.7h1v2.75h-1zM225 531.7h1v2.75h-1zM227 531.7h1v2.75h-1zM234 531.7h1v2.75h-1zM813 531.7h1v2.75h-1zM230 534.4h1v2.75h-1zM235 534.4h1v2.75h-1z"/>
<path fill="#ff8c3a" d="M225 410.0h1v2.75h-1zM227 410.0h1v2.75h-1zM229 410.0h1v2.75h-1zM225 412.7h1v2.75h-1zM226 412.7h1v2.75h-1zM227 412.7h1v2.75h-1zM229 412.7h1v2.75h-1zM226 415.4h1v2.75h-1zM225 418.1h1v2.75h-1zM226 418.1h1v2.75h-1zM227 418.1h1v2.75h-1zM229 418.1h1v2.75h-1zM229 420.8h1v2.75h-1zM225 423.5h1v2.75h-1zM226 423.5h1v2.75h-1zM227 423.5h1v2.75h-1zM226 426.2h1v2.75h-1zM227 428.9h1v2.75h-1zM226 431.6h1v2.75h-1zM227 431.6h1v2.75h-1zM229 437.1h1v2.75h-1zM226 442.5h1v2.75h-1zM227 442.5h1v2.75h-1zM813 442.5h1v2.75h-1zM227 445.2h1v2.75h-1zM229 445.2h1v2.75h-1zM226 447.9h1v2.75h-1zM229 447.9h1v2.75h-1zM227 450.6h1v2.75h-1zM229 456.0h1v2.75h-1zM225 458.7h1v2.75h-1zM813 458.7h1v2.75h-1zM225 461.4h1v2.75h-1zM226 461.4h1v2.75h-1zM227 464.1h1v2.75h-1zM229 464.1h1v2.75h-1zM226 466.8h1v2.75h-1zM229 466.8h1v2.75h-1zM225 472.2h1v2.75h-1zM225 477.6h1v2.75h-1zM226 477.6h1v2.75h-1zM229 477.6h1v2.75h-1zM521 477.6h1v2.75h-1zM229 483.0h1v2.75h-1zM521 483.0h1v2.75h-1zM226 485.7h1v2.75h-1zM229 485.7h1v2.75h-1zM813 485.7h1v2.75h-1zM226 488.4h1v2.75h-1zM227 488.4h1v2.75h-1zM813 488.4h1v2.75h-1zM226 493.9h1v2.75h-1zM227 493.9h1v2.75h-1zM229 493.9h1v2.75h-1zM225 496.6h1v2.75h-1zM229 496.6h1v2.75h-1zM225 499.3h1v2.75h-1zM226 499.3h1v2.75h-1zM227 499.3h1v2.75h-1zM226 502.0h1v2.75h-1zM229 502.0h1v2.75h-1zM227 504.7h1v2.75h-1zM229 510.1h1v2.75h-1zM227 512.8h1v2.75h-1zM227 515.5h1v2.75h-1zM229 515.5h1v2.75h-1zM226 518.2h1v2.75h-1zM813 518.2h1v2.75h-1zM813 520.9h1v2.75h-1zM227 523.6h1v2.75h-1zM226 526.3h1v2.75h-1zM229 526.3h1v2.75h-1zM813 526.3h1v2.75h-1zM227 529.0h1v2.75h-1zM229 531.7h1v2.75h-1zM226 534.4h1v2.75h-1zM227 534.4h1v2.75h-1z"/>
<path fill="#ffd62c" d="M227 415.4h1v2.75h-1zM229 415.4h1v2.75h-1zM226 420.8h1v2.75h-1zM229 423.5h1v2.75h-1zM227 426.2h1v2.75h-1zM521 426.2h1v2.75h-1zM226 428.9h1v2.75h-1zM229 428.9h1v2.75h-1zM227 434.3h1v2.75h-1zM229 434.3h1v2.75h-1zM229 439.8h1v2.75h-1zM226 445.2h1v2.75h-1zM227 447.9h1v2.75h-1zM226 453.3h1v2.75h-1zM227 456.0h1v2.75h-1zM226 458.7h1v2.75h-1zM227 458.7h1v2.75h-1zM229 458.7h1v2.75h-1zM229 461.4h1v2.75h-1zM227 466.8h1v2.75h-1zM227 469.5h1v2.75h-1zM226 472.2h1v2.75h-1zM227 472.2h1v2.75h-1zM226 474.9h1v2.75h-1zM227 474.9h1v2.75h-1zM227 477.6h1v2.75h-1zM229 480.3h1v2.75h-1zM226 483.0h1v2.75h-1zM227 485.7h1v2.75h-1zM229 488.4h1v2.75h-1zM226 491.1h1v2.75h-1zM229 491.1h1v2.75h-1zM227 496.6h1v2.75h-1zM229 499.3h1v2.75h-1zM229 504.7h1v2.75h-1zM227 510.1h1v2.75h-1zM227 518.2h1v2.75h-1zM229 518.2h1v2.75h-1zM227 520.9h1v2.75h-1zM229 520.9h1v2.75h-1zM229 523.6h1v2.75h-1zM229 529.0h1v2.75h-1zM226 531.7h1v2.75h-1zM229 534.4h1v2.75h-1z"/>
<path fill="#fffa50" d="M228 410.0h1v2.75h-1zM228 412.7h1v2.75h-1zM228 415.4h1v2.75h-1zM228 418.1h1v2.75h-1zM227 420.8h1v2.75h-1zM228 420.8h1v2.75h-1zM228 423.5h1v2.75h-1zM228 426.2h1v2.75h-1zM228 428.9h1v2.75h-1zM228 431.6h1v2.75h-1zM228 434.3h1v2.75h-1zM227 437.1h1v2.75h-1zM228 437.1h1v2.75h-1zM227 439.8h1v2.75h-1zM228 439.8h1v2.75h-1zM228 442.5h1v2.75h-1zM229 442.5h1v2.75h-1zM228 445.2h1v2.75h-1zM228 447.9h1v2.75h-1zM228 450.6h1v2.75h-1zM227 453.3h1v2.75h-1zM228 453.3h1v2.75h-1zM229 453.3h1v2.75h-1zM228 456.0h1v2.75h-1zM228 458.7h1v2.75h-1zM227 461.4h1v2.75h-1zM228 461.4h1v2.75h-1zM228 464.1h1v2.75h-1zM228 466.8h1v2.75h-1zM228 469.5h1v2.75h-1zM229 469.5h1v2.75h-1zM228 472.2h1v2.75h-1zM228 474.9h1v2.75h-1zM228 477.6h1v2.75h-1zM227 480.3h1v2.75h-1zM228 480.3h1v2.75h-1zM227 483.0h1v2.75h-1zM228 483.0h1v2.75h-1zM228 485.7h1v2.75h-1zM228 488.4h1v2.75h-1zM227 491.1h1v2.75h-1zM228 491.1h1v2.75h-1zM228 493.9h1v2.75h-1zM228 496.6h1v2.75h-1zM228 499.3h1v2.75h-1zM227 502.0h1v2.75h-1zM228 502.0h1v2.75h-1zM228 504.7h1v2.75h-1zM228 510.1h1v2.75h-1zM228 512.8h1v2.75h-1zM228 515.5h1v2.75h-1zM228 518.2h1v2.75h-1zM228 520.9h1v2.75h-1zM228 523.6h1v2.75h-1zM227 526.3h1v2.75h-1zM228 526.3h1v2.75h-1zM228 529.0h1v2.75h-1zM228 531.7h1v2.75h-1zM228 534.4h1v2.75h-1z"/>
<rect x="224" y="451" width="1" height="2" fill="#000"/>
<rect x="303" y="411" width="1" height="2" fill="#000"/>
<rect x="449" y="421" width="1" height="2" fill="#000"/>
<rect x="413" y="457" width="1" height="2" fill="#000"/>
<rect x="495" y="480" width="1" height="2" fill="#000"/>
<rect x="527" y="441" width="1" height="2" fill="#000"/>
<rect x="795" y="455" width="1" height="2" fill="#000"/>
<rect x="859" y="444" width="1" height="2" fill="#000"/>
<rect x="603" y="468" width="1" height="2" fill="#000"/>
<rect x="686" y="457" width="1" height="2" fill="#000"/>
<path d="M75.5 100V345.5" stroke="#c8c86e" stroke-width="1"/>
<path d="M75 345.5H1048" stroke="#b4b4b4" stroke-width="1"/>
<path d="M75.5 410V691.5M75 691.5H1048M75 410.5H80M75 437.5H78M75 464.5H80M75 491.5H78M75 518.5H80M75 545.5H78M75 572.5H80M75 599.5H78M75 626.5H80M75 653.5H78M75 680.5H80M137.5 691V689M203.5 691V689M270.5 691V688M337.5 691V689M403.5 691V689M470.5 691V689M536.5 691V689M603.5 691V688M670.5 691V689M736.5 691V689M803.5 691V689M869.5 691V689M936.5 691V688M1003.5 691V689" stroke="#969696" stroke-width="1" fill="none"/>
</svg>
<div class="ax" style="right:1208.8px;top:146.4px;font-size:12.5px;letter-spacing:0.6px">-20</div>
<div class="ax" style="right:1208.8px;top:206.4px;font-size:12.5px;letter-spacing:0.6px">-40</div>
<div class="ax" style="right:1208.8px;top:265.4px;font-size:12.5px;letter-spacing:0.6px">-60</div>
<div class="ax" style="right:1208.8px;top:325.4px;font-size:12.5px;letter-spacing:0.6px">-80</div>
<div class="ax" style="left:137.2px;top:349.3px;width:40px;margin-left:-19.7px;text-align:center;font-size:12.5px;letter-spacing:0.6px">60</div>
<div class="ax" style="left:203.8px;top:349.3px;width:40px;margin-left:-19.7px;text-align:center;font-size:12.5px;letter-spacing:0.6px">80</div>
<div class="ax" style="left:270.4px;top:349.3px;width:40px;margin-left:-19.7px;text-align:center;font-size:12.5px;letter-spacing:0.6px">100</div>
<div class="ax" style="left:337.0px;top:349.3px;width:40px;margin-left:-19.7px;text-align:center;font-size:12.5px;letter-spacing:0.6px">120</div>
<div class="ax" style="left:403.7px;top:349.3px;width:40px;margin-left:-19.7px;text-align:center;font-size:12.5px;letter-spacing:0.6px">140</div>
<div class="ax" style="left:470.3px;top:349.3px;width:40px;margin-left:-19.7px;text-align:center;font-size:12.5px;letter-spacing:0.6px">160</div>
<div class="ax" style="left:536.9px;top:349.3px;width:40px;margin-left:-19.7px;text-align:center;font-size:12.5px;letter-spacing:0.6px">180</div>
<div class="ax" style="left:603.5px;top:349.3px;width:40px;margin-left:-19.7px;text-align:center;font-size:12.5px;letter-spacing:0.6px">200</div>
<div class="ax" style="left:670.1px;top:349.3px;width:40px;margin-left:-19.7px;text-align:center;font-size:12.5px;letter-spacing:0.6px">220</div>
<div class="ax" style="left:736.7px;top:349.3px;width:40px;margin-left:-19.7px;text-align:center;font-size:12.5px;letter-spacing:0.6px">240</div>
<div class="ax" style="left:803.4px;top:349.3px;width:40px;margin-left:-19.7px;text-align:center;font-size:12.5px;letter-spacing:0.6px">260</div>
<div class="ax" style="left:870.0px;top:349.3px;width:40px;margin-left:-19.7px;text-align:center;font-size:12.5px;letter-spacing:0.6px">280</div>
<div class="ax" style="left:936.6px;top:349.3px;width:40px;margin-left:-19.7px;text-align:center;font-size:12.5px;letter-spacing:0.6px">300</div>
<div class="ax" style="left:1003.2px;top:349.3px;width:40px;margin-left:-19.7px;text-align:center;font-size:12.5px;letter-spacing:0.6px">320</div>
<div class="ax" style="left:466px;top:372px;width:200px;text-align:center;letter-spacing:0.7px">Frequency (MHz)</div>
<div class="ax" style="left:28px;top:222px;width:120px;margin-left:-60px;margin-top:-6px;text-align:center;letter-spacing:0.9px;transform:rotate(-90deg)">Power (dBm)</div>
<div class="ax" style="right:234.5px;top:71px;font-size:16px;color:#a8a8a8;letter-spacing:0.2px">f=41.597 MHz, P=-88.179 dBm</div>
<div class="ax" style="left:271.5px;top:104.6px;font-size:18.5px;color:#ffff00;letter-spacing:0.32px">Fractional-N PLL</div>
<div class="ax" style="left:271.5px;top:132.8px;font-size:18.5px;color:#ff0000;letter-spacing:0.55px">MASH Divider</div>
<div class="ax" style="right:1208.8px;top:404.5px;font-size:12.5px;letter-spacing:0.6px">0</div>
<div class="ax" style="right:1208.8px;top:458.6px;font-size:12.5px;letter-spacing:0.6px">-20</div>
<div class="ax" style="right:1208.8px;top:512.7px;font-size:12.5px;letter-spacing:0.6px">-40</div>
<div class="ax" style="right:1208.8px;top:566.8px;font-size:12.5px;letter-spacing:0.6px">-60</div>
<div class="ax" style="right:1208.8px;top:620.9px;font-size:12.5px;letter-spacing:0.6px">-80</div>
<div class="ax" style="right:1208.8px;top:675.0px;font-size:12.5px;letter-spacing:0.6px">-100</div>
<div class="ax" style="left:137.2px;top:695.3px;width:40px;margin-left:-19.7px;text-align:center;font-size:12.5px;letter-spacing:0.6px">60</div>
<div class="ax" style="left:203.8px;top:695.3px;width:40px;margin-left:-19.7px;text-align:center;font-size:12.5px;letter-spacing:0.6px">80</div>
<div class="ax" style="left:270.4px;top:695.3px;width:40px;margin-left:-19.7px;text-align:center;font-size:12.5px;letter-spacing:0.6px">100</div>
<div class="ax" style="left:337.0px;top:695.3px;width:40px;margin-left:-19.7px;text-align:center;font-size:12.5px;letter-spacing:0.6px">120</div>
<div class="ax" style="left:403.7px;top:695.3px;width:40px;margin-left:-19.7px;text-align:center;font-size:12.5px;letter-spacing:0.6px">140</div>
<div class="ax" style="left:470.3px;top:695.3px;width:40px;margin-left:-19.7px;text-align:center;font-size:12.5px;letter-spacing:0.6px">160</div>
<div class="ax" style="left:536.9px;top:695.3px;width:40px;margin-left:-19.7px;text-align:center;font-size:12.5px;letter-spacing:0.6px">180</div>
<div class="ax" style="left:603.5px;top:695.3px;width:40px;margin-left:-19.7px;text-align:center;font-size:12.5px;letter-spacing:0.6px">200</div>
<div class="ax" style="left:670.1px;top:695.3px;width:40px;margin-left:-19.7px;text-align:center;font-size:12.5px;letter-spacing:0.6px">220</div>
<div class="ax" style="left:736.7px;top:695.3px;width:40px;margin-left:-19.7px;text-align:center;font-size:12.5px;letter-spacing:0.6px">240</div>
<div class="ax" style="left:803.4px;top:695.3px;width:40px;margin-left:-19.7px;text-align:center;font-size:12.5px;letter-spacing:0.6px">260</div>
<div class="ax" style="left:870.0px;top:695.3px;width:40px;margin-left:-19.7px;text-align:center;font-size:12.5px;letter-spacing:0.6px">280</div>
<div class="ax" style="left:936.6px;top:695.3px;width:40px;margin-left:-19.7px;text-align:center;font-size:12.5px;letter-spacing:0.6px">300</div>
<div class="ax" style="left:1003.2px;top:695.3px;width:40px;margin-left:-19.7px;text-align:center;font-size:12.5px;letter-spacing:0.6px">320</div>
<div class="ax" style="left:466px;top:718px;width:200px;text-align:center;letter-spacing:0.7px">Frequency (MHz)</div>
<div class="ax" style="left:28px;top:551px;width:80px;margin-left:-40px;margin-top:-6px;text-align:center;letter-spacing:1.4px;transform:rotate(-90deg)">Time</div>
<!-- status -->
<div class="t" style="left:6px;top:756px;letter-spacing:0.06px">Frequency hops: 145 | Sweep time: 10.34 s | FPS: 0.10</div>
<!-- dock -->
<div class="a" style="left:1066px;top:45px;width:1px;height:706px;background:#fcfcfc"></div>
<div class="a" style="left:1070px;top:45px;width:1px;height:706px;background:#868b90"></div><div class="a" style="left:1071px;top:45px;width:1px;height:706px;background:#3b4045"></div>
<div class="a" style="left:1072px;top:45px;width:208px;height:1px;background:#fcfcfc"></div>
<!-- controls -->
<div class="t" style="left:1074px;top:50px">Controls</div><svg class="a" style="left:1267px;top:50px" width="11" height="11" viewBox="0 0 11 11"><path d="M2 -1h9v8h-3v3h-9v-8h3z" fill="#f7f8f8" opacity="0.6"/><path d="M3 0h6v2h-6zM3 2h1v1h-1zM8 2h1v4h-1zM7 5h1v1h-1z" fill="#000"/><path d="M4 2h4v1h-4z" fill="#fcfcfc"/><path d="M1 3h6v2h-6zM1 5h1v4h-1zM6 5h1v4h-1zM1 8h6v1h-6z" fill="#000"/><path d="M2 5h4v3h-4z" fill="#fcfcfc"/></svg>
<div class="ln" style="left:1072px;top:66px;width:208px;height:1px;background:#a3a6a9"></div>
<div class="btn" style="left:1081px;top:76px;width:92px;height:28px"><span class="u">S</span>tart</div>
<div class="btn" style="left:1179px;top:76px;width:92px;height:28px;background:#e3e4e5;color:#a5a7aa">S<span class="u">t</span>op</div>
<div class="btn" style="left:1081px;top:110px;width:190px;height:28px">Si<span class="u">n</span>gle shot</div>
<div class="ln" style="left:1072px;top:176px;width:208px;height:1px;background:#fcfcfc"></div>
<div class="ln" style="left:1071px;top:180px;width:209px;height:1px;background:#868b90"></div><div class="ln" style="left:1071px;top:181px;width:209px;height:1px;background:#3b4045"></div>
<!-- frequency -->
<div class="t" style="left:1074px;top:187px">Frequency</div><svg class="a" style="left:1267px;top:187px" width="11" height="11" viewBox="0 0 11 11"><path d="M2 -1h9v8h-3v3h-9v-8h3z" fill="#f7f8f8" opacity="0.6"/><path d="M3 0h6v2h-6zM3 2h1v1h-1zM8 2h1v4h-1zM7 5h1v1h-1z" fill="#000"/><path d="M4 2h4v1h-4z" fill="#fcfcfc"/><path d="M1 3h6v2h-6zM1 5h1v4h-1zM6 5h1v4h-1zM1 8h6v1h-6z" fill="#000"/><path d="M2 5h4v3h-4z" fill="#fcfcfc"/></svg>
<div class="ln" style="left:1072px;top:203px;width:208px;height:1px;background:#a3a6a9"></div>
<div class="t" style="left:1081px;top:219px">Start:</div>
<div class="t" style="left:1081px;top:249px">Stop:</div>
<div class="t" style="left:1081px;top:279px">Bin size:</div>
<div class="spin" style="left:1137px;top:213px;width:133px;height:23px"><div class="sv" style="top:5px">50.000 MHz</div><div class="arr" style="top:0;height:11px"><svg class="a" style="left:5px;top:3px" width="6" height="4"><path d="M0.8 3L2.5 1L4.2 3z" fill="#31363b"/></svg></div><div class="arr" style="top:11px;height:11px"><svg class="a" style="left:5px;top:3px" width="6" height="4"><path d="M0.8 1L2.5 3L4.2 1z" fill="#31363b"/></svg></div></div>
<div class="spin" style="left:1137px;top:243px;width:133px;height:23px"><div class="sv" style="top:5px">325.000 MHz</div><div class="arr" style="top:0;height:11px"><svg class="a" style="left:5px;top:3px" width="6" height="4"><path d="M0.8 3L2.5 1L4.2 3z" fill="#31363b"/></svg></div><div class="arr" style="top:11px;height:11px"><svg class="a" style="left:5px;top:3px" width="6" height="4"><path d="M0.8 1L2.5 3L4.2 1z" fill="#31363b"/></svg></div></div>
<div class="spin" style="left:1137px;top:273px;width:133px;height:23px"><div class="sv" style="top:5px">5.000 kHz</div><div class="arr" style="top:0;height:11px"><svg class="a" style="left:5px;top:3px" width="6" height="4"><path d="M0.8 3L2.5 1L4.2 3z" fill="#31363b"/></svg></div><div class="arr" style="top:11px;height:11px"><svg class="a" style="left:5px;top:3px" width="6" height="4"><path d="M0.8 1L2.5 3L4.2 1z" fill="#31363b"/></svg></div></div>
<div class="ln" style="left:1072px;top:362px;width:208px;height:1px;background:#fcfcfc"></div>
<div class="ln" style="left:1071px;top:366px;width:209px;height:1px;background:#868b90"></div><div class="ln" style="left:1071px;top:367px;width:209px;height:1px;background:#3b4045"></div>
<!-- settings -->
<div class="t" style="left:1074px;top:373px">Settings</div><svg class="a" style="left:1267px;top:373px" width="11" height="11" viewBox="0 0 11 11"><path d="M2 -1h9v8h-3v3h-9v-8h3z" fill="#f7f8f8" opacity="0.6"/><path d="M3 0h6v2h-6zM3 2h1v1h-1zM8 2h1v4h-1zM7 5h1v1h-1z" fill="#000"/><path d="M4 2h4v1h-4z" fill="#fcfcfc"/><path d="M1 3h6v2h-6zM1 5h1v4h-1zM6 5h1v4h-1zM1 8h6v1h-6z" fill="#000"/><path d="M2 5h4v3h-4z" fill="#fcfcfc"/></svg>
<div class="ln" style="left:1072px;top:389px;width:208px;height:1px;background:#a3a6a9"></div>
<div class="t" style="left:1081px;top:402px">Interval [s]:</div>
<div class="t" style="left:1181px;top:402px">Gain [dB]:</div>
<div class="t" style="left:1081px;top:456px">Corr. [ppm]:</div>
<div class="t" style="left:1181px;top:456px">Crop [%]:</div>
<div class="spin" style="left:1081px;top:423px;width:92px;height:23px"><div class="sv" style="top:5px">0.01</div><div class="arr" style="top:0;height:11px"><svg class="a" style="left:5px;top:3px" width="6" height="4"><path d="M0.8 3L2.5 1L4.2 3z" fill="#31363b"/></svg></div><div class="arr" style="top:11px;height:11px"><svg class="a" style="left:5px;top:3px" width="6" height="4"><path d="M0.8 1L2.5 3L4.2 1z" fill="#31363b"/></svg></div></div>
<div class="spin" style="left:1181px;top:423px;width:89px;height:23px"><div class="sv" style="top:5px">0</div><div class="arr" style="top:0;height:11px"><svg class="a" style="left:5px;top:3px" width="6" height="4"><path d="M0.8 3L2.5 1L4.2 3z" fill="#31363b"/></svg></div><div class="arr" style="top:11px;height:11px"><svg class="a" style="left:5px;top:3px" width="6" height="4"><path d="M0.8 1L2.5 3L4.2 1z" fill="#31363b"/></svg></div></div>
<div class="spin" style="left:1081px;top:477px;width:92px;height:23px"><div class="sv" style="top:5px">0</div><div class="arr" style="top:0;height:11px"><svg class="a" style="left:5px;top:3px" width="6" height="4"><path d="M0.8 3L2.5 1L4.2 3z" fill="#31363b"/></svg></div><div class="arr" style="top:11px;height:11px"><svg class="a" style="left:5px;top:3px" width="6" height="4"><path d="M0.8 1L2.5 3L4.2 1z" fill="#31363b"/></svg></div></div>
<div class="spin" style="left:1181px;top:477px;width:89px;height:23px"><div class="sv" style="top:5px">13</div><div class="arr" style="top:0;height:11px"><svg class="a" style="left:5px;top:3px" width="6" height="4"><path d="M0.8 3L2.5 1L4.2 3z" fill="#31363b"/></svg></div><div class="arr" style="top:11px;height:11px"><svg class="a" style="left:5px;top:3px" width="6" height="4"><path d="M0.8 1L2.5 3L4.2 1z" fill="#31363b"/></svg></div></div>
<div class="cb" style="left:1081px;top:514px"><svg class="a" style="left:1px;top:1px" width="11" height="11"><path d="M1.9 4.2L3.9 7.6L8.2 2.2" fill="none" stroke="#232629" stroke-width="2.2"/></svg></div><div class="t" style="left:1099px;top:515px">Main curve</div>
<div class="btn" style="left:1181px;top:507px;width:90px;height:27px">Colors...</div>
<div class="cb" style="left:1081px;top:546px"><svg class="a" style="left:1px;top:1px" width="11" height="11"><path d="M1.9 4.2L3.9 7.6L8.2 2.2" fill="none" stroke="#232629" stroke-width="2.2"/></svg></div><div class="t" style="left:1099px;top:547px">Max. hold</div>
<div class="cb" style="left:1181px;top:546px"><svg class="a" style="left:1px;top:1px" width="11" height="11"><path d="M1.9 4.2L3.9 7.6L8.2 2.2" fill="none" stroke="#232629" stroke-width="2.2"/></svg></div><div class="t" style="left:1199px;top:547px">Min. hold</div>
<div class="cb" style="left:1081px;top:575px"></div><div class="t" style="left:1099px;top:576px">Average</div>
<div class="cb" style="left:1081px;top:604px"><svg class="a" style="left:1px;top:1px" width="11" height="11"><path d="M1.9 4.2L3.9 7.6L8.2 2.2" fill="none" stroke="#232629" stroke-width="2.2"/></svg></div><div class="t" style="left:1099px;top:605px">Smoothing</div>
<div class="btn" style="left:1247px;top:599px;width:24px;height:24px;line-height:23px">...</div>
<div class="cb" style="left:1081px;top:634px"></div><div class="t" style="left:1099px;top:635px">Persistence</div>
<div class="btn" style="left:1247px;top:629px;width:24px;height:24px;line-height:23px">...</div>
<!-- tabs -->
<div class="ln" style="left:1072px;top:725px;width:62px;height:2px;background:#3b4045"></div>
<div class="ln" style="left:1206px;top:725px;width:74px;height:2px;background:#3b4045"></div>
<div class="ln" style="left:1076px;top:747px;width:58px;height:2px;background:#3b4045"></div><div class="ln" style="left:1075px;top:727px;width:1px;height:21px;background:#fcfcfc"></div>
<div class="ln" style="left:1134px;top:727px;width:1px;height:22px;background:#fcfcfc"></div>
<div class="ln" style="left:1136px;top:749px;width:71px;height:2px;background:#3b4045"></div>
<div class="ln" style="left:1206px;top:725px;width:2px;height:26px;background:#3b4045"></div>
<div class="t" style="left:1084px;top:731px">Levels</div>
<div class="t" style="left:1146px;top:732px">Settings</div>
</body></html>
